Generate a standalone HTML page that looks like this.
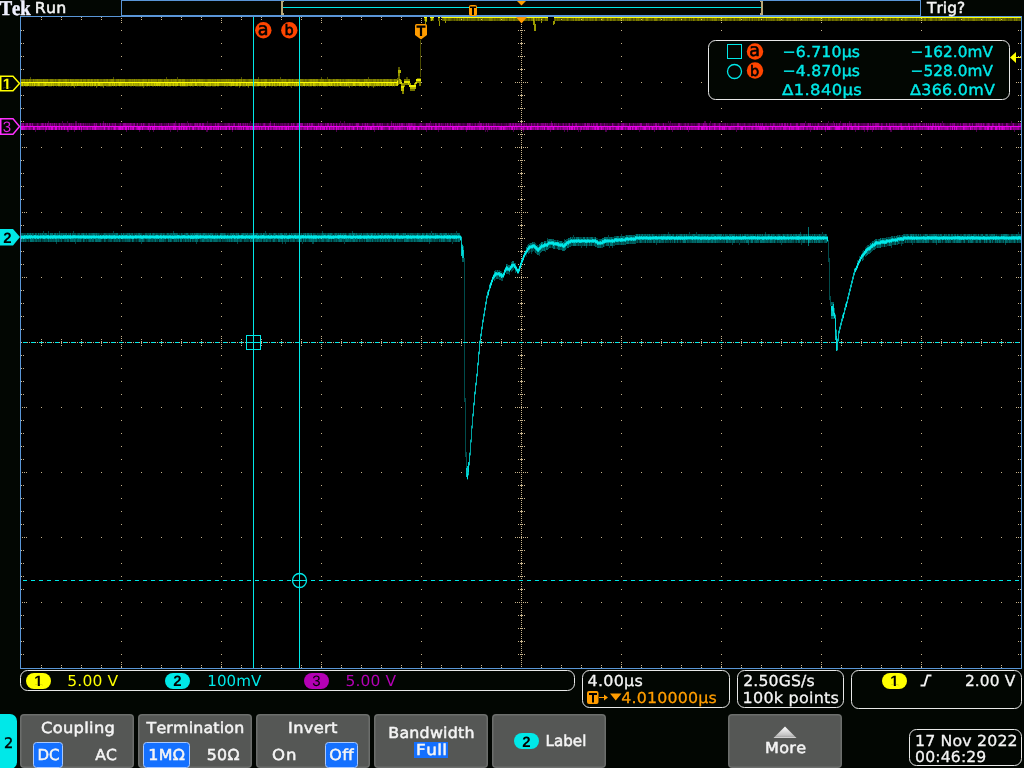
<!DOCTYPE html>
<html><head><meta charset="utf-8"><title>Tek oscilloscope</title>
<style>
html,body{margin:0;padding:0;background:#020602;width:1024px;height:768px;overflow:hidden}
svg{display:block;font-family:"DejaVu Sans","Liberation Sans",sans-serif;will-change:transform}
text{white-space:pre;font-kerning:none;text-rendering:geometricPrecision}
</style></head><body>
<svg width="1024" height="768" viewBox="0 0 1024 768">
<rect x="0" y="0" width="1024" height="768" fill="#020602" />
<rect x="21" y="17" width="1000" height="651" fill="#000" />
<g stroke="#c8b48c" stroke-width="1" shape-rendering="crispEdges" fill="none">
<path d="M41 82.5H1002" stroke-dasharray="1 19"/>
<path d="M41 147.5H1002" stroke-dasharray="1 19"/>
<path d="M41 212.5H1002" stroke-dasharray="1 19"/>
<path d="M41 277.5H1002" stroke-dasharray="1 19"/>
<path d="M41 407.5H1002" stroke-dasharray="1 19"/>
<path d="M41 472.5H1002" stroke-dasharray="1 19"/>
<path d="M41 537.5H1002" stroke-dasharray="1 19"/>
<path d="M41 602.5H1002" stroke-dasharray="1 19"/>
<path d="M121.5 30V668" stroke-dasharray="1 12"/>
<path d="M221.5 30V668" stroke-dasharray="1 12"/>
<path d="M321.5 30V668" stroke-dasharray="1 12"/>
<path d="M421.5 30V668" stroke-dasharray="1 12"/>
<path d="M621.5 30V668" stroke-dasharray="1 12"/>
<path d="M721.5 30V668" stroke-dasharray="1 12"/>
<path d="M821.5 30V668" stroke-dasharray="1 12"/>
<path d="M921.5 30V668" stroke-dasharray="1 12"/>
<path d="M521.5 18V668" stroke-dasharray="1 1"/>
<path d="M21 342.5H1021" stroke-dasharray="1 1"/>
</g>
<path fill="#c8b48c" shape-rendering="crispEdges" d="M41 17h1v1h-1zM41 19h1v1h-1zM41 667h1v1h-1zM41 665h1v1h-1zM61 17h1v1h-1zM61 19h1v1h-1zM61 667h1v1h-1zM61 665h1v1h-1zM81 17h1v1h-1zM81 19h1v1h-1zM81 667h1v1h-1zM81 665h1v1h-1zM101 17h1v1h-1zM101 19h1v1h-1zM101 667h1v1h-1zM101 665h1v1h-1zM121 18h1v1h-1zM121 20h1v1h-1zM121 22h1v1h-1zM121 666h1v1h-1zM121 664h1v1h-1zM121 662h1v1h-1zM141 17h1v1h-1zM141 19h1v1h-1zM141 667h1v1h-1zM141 665h1v1h-1zM161 17h1v1h-1zM161 19h1v1h-1zM161 667h1v1h-1zM161 665h1v1h-1zM181 17h1v1h-1zM181 19h1v1h-1zM181 667h1v1h-1zM181 665h1v1h-1zM201 17h1v1h-1zM201 19h1v1h-1zM201 667h1v1h-1zM201 665h1v1h-1zM221 18h1v1h-1zM221 20h1v1h-1zM221 22h1v1h-1zM221 666h1v1h-1zM221 664h1v1h-1zM221 662h1v1h-1zM241 17h1v1h-1zM241 19h1v1h-1zM241 667h1v1h-1zM241 665h1v1h-1zM261 17h1v1h-1zM261 19h1v1h-1zM261 667h1v1h-1zM261 665h1v1h-1zM281 17h1v1h-1zM281 19h1v1h-1zM281 667h1v1h-1zM281 665h1v1h-1zM301 17h1v1h-1zM301 19h1v1h-1zM301 667h1v1h-1zM301 665h1v1h-1zM321 18h1v1h-1zM321 20h1v1h-1zM321 22h1v1h-1zM321 666h1v1h-1zM321 664h1v1h-1zM321 662h1v1h-1zM341 17h1v1h-1zM341 19h1v1h-1zM341 667h1v1h-1zM341 665h1v1h-1zM361 17h1v1h-1zM361 19h1v1h-1zM361 667h1v1h-1zM361 665h1v1h-1zM381 17h1v1h-1zM381 19h1v1h-1zM381 667h1v1h-1zM381 665h1v1h-1zM401 17h1v1h-1zM401 19h1v1h-1zM401 667h1v1h-1zM401 665h1v1h-1zM421 18h1v1h-1zM421 20h1v1h-1zM421 22h1v1h-1zM421 666h1v1h-1zM421 664h1v1h-1zM421 662h1v1h-1zM441 17h1v1h-1zM441 19h1v1h-1zM441 667h1v1h-1zM441 665h1v1h-1zM461 17h1v1h-1zM461 19h1v1h-1zM461 667h1v1h-1zM461 665h1v1h-1zM481 17h1v1h-1zM481 19h1v1h-1zM481 667h1v1h-1zM481 665h1v1h-1zM501 17h1v1h-1zM501 19h1v1h-1zM501 667h1v1h-1zM501 665h1v1h-1zM541 17h1v1h-1zM541 19h1v1h-1zM541 667h1v1h-1zM541 665h1v1h-1zM561 17h1v1h-1zM561 19h1v1h-1zM561 667h1v1h-1zM561 665h1v1h-1zM581 17h1v1h-1zM581 19h1v1h-1zM581 667h1v1h-1zM581 665h1v1h-1zM601 17h1v1h-1zM601 19h1v1h-1zM601 667h1v1h-1zM601 665h1v1h-1zM621 18h1v1h-1zM621 20h1v1h-1zM621 22h1v1h-1zM621 666h1v1h-1zM621 664h1v1h-1zM621 662h1v1h-1zM641 17h1v1h-1zM641 19h1v1h-1zM641 667h1v1h-1zM641 665h1v1h-1zM661 17h1v1h-1zM661 19h1v1h-1zM661 667h1v1h-1zM661 665h1v1h-1zM681 17h1v1h-1zM681 19h1v1h-1zM681 667h1v1h-1zM681 665h1v1h-1zM701 17h1v1h-1zM701 19h1v1h-1zM701 667h1v1h-1zM701 665h1v1h-1zM721 18h1v1h-1zM721 20h1v1h-1zM721 22h1v1h-1zM721 666h1v1h-1zM721 664h1v1h-1zM721 662h1v1h-1zM741 17h1v1h-1zM741 19h1v1h-1zM741 667h1v1h-1zM741 665h1v1h-1zM761 17h1v1h-1zM761 19h1v1h-1zM761 667h1v1h-1zM761 665h1v1h-1zM781 17h1v1h-1zM781 19h1v1h-1zM781 667h1v1h-1zM781 665h1v1h-1zM801 17h1v1h-1zM801 19h1v1h-1zM801 667h1v1h-1zM801 665h1v1h-1zM821 18h1v1h-1zM821 20h1v1h-1zM821 22h1v1h-1zM821 666h1v1h-1zM821 664h1v1h-1zM821 662h1v1h-1zM841 17h1v1h-1zM841 19h1v1h-1zM841 667h1v1h-1zM841 665h1v1h-1zM861 17h1v1h-1zM861 19h1v1h-1zM861 667h1v1h-1zM861 665h1v1h-1zM881 17h1v1h-1zM881 19h1v1h-1zM881 667h1v1h-1zM881 665h1v1h-1zM901 17h1v1h-1zM901 19h1v1h-1zM901 667h1v1h-1zM901 665h1v1h-1zM921 18h1v1h-1zM921 20h1v1h-1zM921 22h1v1h-1zM921 666h1v1h-1zM921 664h1v1h-1zM921 662h1v1h-1zM941 17h1v1h-1zM941 19h1v1h-1zM941 667h1v1h-1zM941 665h1v1h-1zM961 17h1v1h-1zM961 19h1v1h-1zM961 667h1v1h-1zM961 665h1v1h-1zM981 17h1v1h-1zM981 19h1v1h-1zM981 667h1v1h-1zM981 665h1v1h-1zM1001 17h1v1h-1zM1001 19h1v1h-1zM1001 667h1v1h-1zM1001 665h1v1h-1zM21 30h1v1h-1zM23 30h1v1h-1zM1020 30h1v1h-1zM1018 30h1v1h-1zM21 43h1v1h-1zM23 43h1v1h-1zM1020 43h1v1h-1zM1018 43h1v1h-1zM21 56h1v1h-1zM23 56h1v1h-1zM1020 56h1v1h-1zM1018 56h1v1h-1zM21 69h1v1h-1zM23 69h1v1h-1zM1020 69h1v1h-1zM1018 69h1v1h-1zM22 82h1v1h-1zM24 82h1v1h-1zM26 82h1v1h-1zM1020 82h1v1h-1zM1018 82h1v1h-1zM1016 82h1v1h-1zM21 95h1v1h-1zM23 95h1v1h-1zM1020 95h1v1h-1zM1018 95h1v1h-1zM21 108h1v1h-1zM23 108h1v1h-1zM1020 108h1v1h-1zM1018 108h1v1h-1zM21 121h1v1h-1zM23 121h1v1h-1zM1020 121h1v1h-1zM1018 121h1v1h-1zM21 134h1v1h-1zM23 134h1v1h-1zM1020 134h1v1h-1zM1018 134h1v1h-1zM22 147h1v1h-1zM24 147h1v1h-1zM26 147h1v1h-1zM1020 147h1v1h-1zM1018 147h1v1h-1zM1016 147h1v1h-1zM21 160h1v1h-1zM23 160h1v1h-1zM1020 160h1v1h-1zM1018 160h1v1h-1zM21 173h1v1h-1zM23 173h1v1h-1zM1020 173h1v1h-1zM1018 173h1v1h-1zM21 186h1v1h-1zM23 186h1v1h-1zM1020 186h1v1h-1zM1018 186h1v1h-1zM21 199h1v1h-1zM23 199h1v1h-1zM1020 199h1v1h-1zM1018 199h1v1h-1zM22 212h1v1h-1zM24 212h1v1h-1zM26 212h1v1h-1zM1020 212h1v1h-1zM1018 212h1v1h-1zM1016 212h1v1h-1zM21 225h1v1h-1zM23 225h1v1h-1zM1020 225h1v1h-1zM1018 225h1v1h-1zM21 238h1v1h-1zM23 238h1v1h-1zM1020 238h1v1h-1zM1018 238h1v1h-1zM21 251h1v1h-1zM23 251h1v1h-1zM1020 251h1v1h-1zM1018 251h1v1h-1zM21 264h1v1h-1zM23 264h1v1h-1zM1020 264h1v1h-1zM1018 264h1v1h-1zM22 277h1v1h-1zM24 277h1v1h-1zM26 277h1v1h-1zM1020 277h1v1h-1zM1018 277h1v1h-1zM1016 277h1v1h-1zM21 290h1v1h-1zM23 290h1v1h-1zM1020 290h1v1h-1zM1018 290h1v1h-1zM21 303h1v1h-1zM23 303h1v1h-1zM1020 303h1v1h-1zM1018 303h1v1h-1zM21 316h1v1h-1zM23 316h1v1h-1zM1020 316h1v1h-1zM1018 316h1v1h-1zM21 329h1v1h-1zM23 329h1v1h-1zM1020 329h1v1h-1zM1018 329h1v1h-1zM21 355h1v1h-1zM23 355h1v1h-1zM1020 355h1v1h-1zM1018 355h1v1h-1zM21 368h1v1h-1zM23 368h1v1h-1zM1020 368h1v1h-1zM1018 368h1v1h-1zM21 381h1v1h-1zM23 381h1v1h-1zM1020 381h1v1h-1zM1018 381h1v1h-1zM21 394h1v1h-1zM23 394h1v1h-1zM1020 394h1v1h-1zM1018 394h1v1h-1zM22 407h1v1h-1zM24 407h1v1h-1zM26 407h1v1h-1zM1020 407h1v1h-1zM1018 407h1v1h-1zM1016 407h1v1h-1zM21 420h1v1h-1zM23 420h1v1h-1zM1020 420h1v1h-1zM1018 420h1v1h-1zM21 433h1v1h-1zM23 433h1v1h-1zM1020 433h1v1h-1zM1018 433h1v1h-1zM21 446h1v1h-1zM23 446h1v1h-1zM1020 446h1v1h-1zM1018 446h1v1h-1zM21 459h1v1h-1zM23 459h1v1h-1zM1020 459h1v1h-1zM1018 459h1v1h-1zM22 472h1v1h-1zM24 472h1v1h-1zM26 472h1v1h-1zM1020 472h1v1h-1zM1018 472h1v1h-1zM1016 472h1v1h-1zM21 485h1v1h-1zM23 485h1v1h-1zM1020 485h1v1h-1zM1018 485h1v1h-1zM21 498h1v1h-1zM23 498h1v1h-1zM1020 498h1v1h-1zM1018 498h1v1h-1zM21 511h1v1h-1zM23 511h1v1h-1zM1020 511h1v1h-1zM1018 511h1v1h-1zM21 524h1v1h-1zM23 524h1v1h-1zM1020 524h1v1h-1zM1018 524h1v1h-1zM22 537h1v1h-1zM24 537h1v1h-1zM26 537h1v1h-1zM1020 537h1v1h-1zM1018 537h1v1h-1zM1016 537h1v1h-1zM21 550h1v1h-1zM23 550h1v1h-1zM1020 550h1v1h-1zM1018 550h1v1h-1zM21 563h1v1h-1zM23 563h1v1h-1zM1020 563h1v1h-1zM1018 563h1v1h-1zM21 576h1v1h-1zM23 576h1v1h-1zM1020 576h1v1h-1zM1018 576h1v1h-1zM21 589h1v1h-1zM23 589h1v1h-1zM1020 589h1v1h-1zM1018 589h1v1h-1zM22 602h1v1h-1zM24 602h1v1h-1zM26 602h1v1h-1zM1020 602h1v1h-1zM1018 602h1v1h-1zM1016 602h1v1h-1zM21 615h1v1h-1zM23 615h1v1h-1zM1020 615h1v1h-1zM1018 615h1v1h-1zM21 628h1v1h-1zM23 628h1v1h-1zM1020 628h1v1h-1zM1018 628h1v1h-1zM21 641h1v1h-1zM23 641h1v1h-1zM1020 641h1v1h-1zM1018 641h1v1h-1zM21 654h1v1h-1zM23 654h1v1h-1zM1020 654h1v1h-1zM1018 654h1v1h-1zM518 30h1v1h-1zM520 30h1v1h-1zM521 30h1v1h-1zM522 30h1v1h-1zM524 30h1v1h-1zM518 43h1v1h-1zM520 43h1v1h-1zM521 43h1v1h-1zM522 43h1v1h-1zM524 43h1v1h-1zM518 56h1v1h-1zM520 56h1v1h-1zM521 56h1v1h-1zM522 56h1v1h-1zM524 56h1v1h-1zM518 69h1v1h-1zM520 69h1v1h-1zM521 69h1v1h-1zM522 69h1v1h-1zM524 69h1v1h-1zM515 82h1v1h-1zM517 82h1v1h-1zM519 82h1v1h-1zM523 82h1v1h-1zM525 82h1v1h-1zM527 82h1v1h-1zM521 82h1v1h-1zM518 95h1v1h-1zM520 95h1v1h-1zM521 95h1v1h-1zM522 95h1v1h-1zM524 95h1v1h-1zM518 108h1v1h-1zM520 108h1v1h-1zM521 108h1v1h-1zM522 108h1v1h-1zM524 108h1v1h-1zM518 121h1v1h-1zM520 121h1v1h-1zM521 121h1v1h-1zM522 121h1v1h-1zM524 121h1v1h-1zM518 134h1v1h-1zM520 134h1v1h-1zM521 134h1v1h-1zM522 134h1v1h-1zM524 134h1v1h-1zM515 147h1v1h-1zM517 147h1v1h-1zM519 147h1v1h-1zM523 147h1v1h-1zM525 147h1v1h-1zM527 147h1v1h-1zM521 147h1v1h-1zM518 160h1v1h-1zM520 160h1v1h-1zM521 160h1v1h-1zM522 160h1v1h-1zM524 160h1v1h-1zM518 173h1v1h-1zM520 173h1v1h-1zM521 173h1v1h-1zM522 173h1v1h-1zM524 173h1v1h-1zM518 186h1v1h-1zM520 186h1v1h-1zM521 186h1v1h-1zM522 186h1v1h-1zM524 186h1v1h-1zM518 199h1v1h-1zM520 199h1v1h-1zM521 199h1v1h-1zM522 199h1v1h-1zM524 199h1v1h-1zM515 212h1v1h-1zM517 212h1v1h-1zM519 212h1v1h-1zM523 212h1v1h-1zM525 212h1v1h-1zM527 212h1v1h-1zM521 212h1v1h-1zM518 225h1v1h-1zM520 225h1v1h-1zM521 225h1v1h-1zM522 225h1v1h-1zM524 225h1v1h-1zM518 238h1v1h-1zM520 238h1v1h-1zM521 238h1v1h-1zM522 238h1v1h-1zM524 238h1v1h-1zM518 251h1v1h-1zM520 251h1v1h-1zM521 251h1v1h-1zM522 251h1v1h-1zM524 251h1v1h-1zM518 264h1v1h-1zM520 264h1v1h-1zM521 264h1v1h-1zM522 264h1v1h-1zM524 264h1v1h-1zM515 277h1v1h-1zM517 277h1v1h-1zM519 277h1v1h-1zM523 277h1v1h-1zM525 277h1v1h-1zM527 277h1v1h-1zM521 277h1v1h-1zM518 290h1v1h-1zM520 290h1v1h-1zM521 290h1v1h-1zM522 290h1v1h-1zM524 290h1v1h-1zM518 303h1v1h-1zM520 303h1v1h-1zM521 303h1v1h-1zM522 303h1v1h-1zM524 303h1v1h-1zM518 316h1v1h-1zM520 316h1v1h-1zM521 316h1v1h-1zM522 316h1v1h-1zM524 316h1v1h-1zM518 329h1v1h-1zM520 329h1v1h-1zM521 329h1v1h-1zM522 329h1v1h-1zM524 329h1v1h-1zM518 355h1v1h-1zM520 355h1v1h-1zM521 355h1v1h-1zM522 355h1v1h-1zM524 355h1v1h-1zM518 368h1v1h-1zM520 368h1v1h-1zM521 368h1v1h-1zM522 368h1v1h-1zM524 368h1v1h-1zM518 381h1v1h-1zM520 381h1v1h-1zM521 381h1v1h-1zM522 381h1v1h-1zM524 381h1v1h-1zM518 394h1v1h-1zM520 394h1v1h-1zM521 394h1v1h-1zM522 394h1v1h-1zM524 394h1v1h-1zM515 407h1v1h-1zM517 407h1v1h-1zM519 407h1v1h-1zM523 407h1v1h-1zM525 407h1v1h-1zM527 407h1v1h-1zM521 407h1v1h-1zM518 420h1v1h-1zM520 420h1v1h-1zM521 420h1v1h-1zM522 420h1v1h-1zM524 420h1v1h-1zM518 433h1v1h-1zM520 433h1v1h-1zM521 433h1v1h-1zM522 433h1v1h-1zM524 433h1v1h-1zM518 446h1v1h-1zM520 446h1v1h-1zM521 446h1v1h-1zM522 446h1v1h-1zM524 446h1v1h-1zM518 459h1v1h-1zM520 459h1v1h-1zM521 459h1v1h-1zM522 459h1v1h-1zM524 459h1v1h-1zM515 472h1v1h-1zM517 472h1v1h-1zM519 472h1v1h-1zM523 472h1v1h-1zM525 472h1v1h-1zM527 472h1v1h-1zM521 472h1v1h-1zM518 485h1v1h-1zM520 485h1v1h-1zM521 485h1v1h-1zM522 485h1v1h-1zM524 485h1v1h-1zM518 498h1v1h-1zM520 498h1v1h-1zM521 498h1v1h-1zM522 498h1v1h-1zM524 498h1v1h-1zM518 511h1v1h-1zM520 511h1v1h-1zM521 511h1v1h-1zM522 511h1v1h-1zM524 511h1v1h-1zM518 524h1v1h-1zM520 524h1v1h-1zM521 524h1v1h-1zM522 524h1v1h-1zM524 524h1v1h-1zM515 537h1v1h-1zM517 537h1v1h-1zM519 537h1v1h-1zM523 537h1v1h-1zM525 537h1v1h-1zM527 537h1v1h-1zM521 537h1v1h-1zM518 550h1v1h-1zM520 550h1v1h-1zM521 550h1v1h-1zM522 550h1v1h-1zM524 550h1v1h-1zM518 563h1v1h-1zM520 563h1v1h-1zM521 563h1v1h-1zM522 563h1v1h-1zM524 563h1v1h-1zM518 576h1v1h-1zM520 576h1v1h-1zM521 576h1v1h-1zM522 576h1v1h-1zM524 576h1v1h-1zM518 589h1v1h-1zM520 589h1v1h-1zM521 589h1v1h-1zM522 589h1v1h-1zM524 589h1v1h-1zM515 602h1v1h-1zM517 602h1v1h-1zM519 602h1v1h-1zM523 602h1v1h-1zM525 602h1v1h-1zM527 602h1v1h-1zM521 602h1v1h-1zM518 615h1v1h-1zM520 615h1v1h-1zM521 615h1v1h-1zM522 615h1v1h-1zM524 615h1v1h-1zM518 628h1v1h-1zM520 628h1v1h-1zM521 628h1v1h-1zM522 628h1v1h-1zM524 628h1v1h-1zM518 641h1v1h-1zM520 641h1v1h-1zM521 641h1v1h-1zM522 641h1v1h-1zM524 641h1v1h-1zM518 654h1v1h-1zM520 654h1v1h-1zM521 654h1v1h-1zM522 654h1v1h-1zM524 654h1v1h-1zM41 339h1v1h-1zM41 341h1v1h-1zM41 342h1v1h-1zM41 343h1v1h-1zM41 345h1v1h-1zM61 339h1v1h-1zM61 341h1v1h-1zM61 342h1v1h-1zM61 343h1v1h-1zM61 345h1v1h-1zM81 339h1v1h-1zM81 341h1v1h-1zM81 342h1v1h-1zM81 343h1v1h-1zM81 345h1v1h-1zM101 339h1v1h-1zM101 341h1v1h-1zM101 342h1v1h-1zM101 343h1v1h-1zM101 345h1v1h-1zM121 336h1v1h-1zM121 338h1v1h-1zM121 340h1v1h-1zM121 344h1v1h-1zM121 346h1v1h-1zM121 348h1v1h-1zM121 342h1v1h-1zM141 339h1v1h-1zM141 341h1v1h-1zM141 342h1v1h-1zM141 343h1v1h-1zM141 345h1v1h-1zM161 339h1v1h-1zM161 341h1v1h-1zM161 342h1v1h-1zM161 343h1v1h-1zM161 345h1v1h-1zM181 339h1v1h-1zM181 341h1v1h-1zM181 342h1v1h-1zM181 343h1v1h-1zM181 345h1v1h-1zM201 339h1v1h-1zM201 341h1v1h-1zM201 342h1v1h-1zM201 343h1v1h-1zM201 345h1v1h-1zM221 336h1v1h-1zM221 338h1v1h-1zM221 340h1v1h-1zM221 344h1v1h-1zM221 346h1v1h-1zM221 348h1v1h-1zM221 342h1v1h-1zM241 339h1v1h-1zM241 341h1v1h-1zM241 342h1v1h-1zM241 343h1v1h-1zM241 345h1v1h-1zM261 339h1v1h-1zM261 341h1v1h-1zM261 342h1v1h-1zM261 343h1v1h-1zM261 345h1v1h-1zM281 339h1v1h-1zM281 341h1v1h-1zM281 342h1v1h-1zM281 343h1v1h-1zM281 345h1v1h-1zM301 339h1v1h-1zM301 341h1v1h-1zM301 342h1v1h-1zM301 343h1v1h-1zM301 345h1v1h-1zM321 336h1v1h-1zM321 338h1v1h-1zM321 340h1v1h-1zM321 344h1v1h-1zM321 346h1v1h-1zM321 348h1v1h-1zM321 342h1v1h-1zM341 339h1v1h-1zM341 341h1v1h-1zM341 342h1v1h-1zM341 343h1v1h-1zM341 345h1v1h-1zM361 339h1v1h-1zM361 341h1v1h-1zM361 342h1v1h-1zM361 343h1v1h-1zM361 345h1v1h-1zM381 339h1v1h-1zM381 341h1v1h-1zM381 342h1v1h-1zM381 343h1v1h-1zM381 345h1v1h-1zM401 339h1v1h-1zM401 341h1v1h-1zM401 342h1v1h-1zM401 343h1v1h-1zM401 345h1v1h-1zM421 336h1v1h-1zM421 338h1v1h-1zM421 340h1v1h-1zM421 344h1v1h-1zM421 346h1v1h-1zM421 348h1v1h-1zM421 342h1v1h-1zM441 339h1v1h-1zM441 341h1v1h-1zM441 342h1v1h-1zM441 343h1v1h-1zM441 345h1v1h-1zM461 339h1v1h-1zM461 341h1v1h-1zM461 342h1v1h-1zM461 343h1v1h-1zM461 345h1v1h-1zM481 339h1v1h-1zM481 341h1v1h-1zM481 342h1v1h-1zM481 343h1v1h-1zM481 345h1v1h-1zM501 339h1v1h-1zM501 341h1v1h-1zM501 342h1v1h-1zM501 343h1v1h-1zM501 345h1v1h-1zM541 339h1v1h-1zM541 341h1v1h-1zM541 342h1v1h-1zM541 343h1v1h-1zM541 345h1v1h-1zM561 339h1v1h-1zM561 341h1v1h-1zM561 342h1v1h-1zM561 343h1v1h-1zM561 345h1v1h-1zM581 339h1v1h-1zM581 341h1v1h-1zM581 342h1v1h-1zM581 343h1v1h-1zM581 345h1v1h-1zM601 339h1v1h-1zM601 341h1v1h-1zM601 342h1v1h-1zM601 343h1v1h-1zM601 345h1v1h-1zM621 336h1v1h-1zM621 338h1v1h-1zM621 340h1v1h-1zM621 344h1v1h-1zM621 346h1v1h-1zM621 348h1v1h-1zM621 342h1v1h-1zM641 339h1v1h-1zM641 341h1v1h-1zM641 342h1v1h-1zM641 343h1v1h-1zM641 345h1v1h-1zM661 339h1v1h-1zM661 341h1v1h-1zM661 342h1v1h-1zM661 343h1v1h-1zM661 345h1v1h-1zM681 339h1v1h-1zM681 341h1v1h-1zM681 342h1v1h-1zM681 343h1v1h-1zM681 345h1v1h-1zM701 339h1v1h-1zM701 341h1v1h-1zM701 342h1v1h-1zM701 343h1v1h-1zM701 345h1v1h-1zM721 336h1v1h-1zM721 338h1v1h-1zM721 340h1v1h-1zM721 344h1v1h-1zM721 346h1v1h-1zM721 348h1v1h-1zM721 342h1v1h-1zM741 339h1v1h-1zM741 341h1v1h-1zM741 342h1v1h-1zM741 343h1v1h-1zM741 345h1v1h-1zM761 339h1v1h-1zM761 341h1v1h-1zM761 342h1v1h-1zM761 343h1v1h-1zM761 345h1v1h-1zM781 339h1v1h-1zM781 341h1v1h-1zM781 342h1v1h-1zM781 343h1v1h-1zM781 345h1v1h-1zM801 339h1v1h-1zM801 341h1v1h-1zM801 342h1v1h-1zM801 343h1v1h-1zM801 345h1v1h-1zM821 336h1v1h-1zM821 338h1v1h-1zM821 340h1v1h-1zM821 344h1v1h-1zM821 346h1v1h-1zM821 348h1v1h-1zM821 342h1v1h-1zM841 339h1v1h-1zM841 341h1v1h-1zM841 342h1v1h-1zM841 343h1v1h-1zM841 345h1v1h-1zM861 339h1v1h-1zM861 341h1v1h-1zM861 342h1v1h-1zM861 343h1v1h-1zM861 345h1v1h-1zM881 339h1v1h-1zM881 341h1v1h-1zM881 342h1v1h-1zM881 343h1v1h-1zM881 345h1v1h-1zM901 339h1v1h-1zM901 341h1v1h-1zM901 342h1v1h-1zM901 343h1v1h-1zM901 345h1v1h-1zM921 336h1v1h-1zM921 338h1v1h-1zM921 340h1v1h-1zM921 344h1v1h-1zM921 346h1v1h-1zM921 348h1v1h-1zM921 342h1v1h-1zM941 339h1v1h-1zM941 341h1v1h-1zM941 342h1v1h-1zM941 343h1v1h-1zM941 345h1v1h-1zM961 339h1v1h-1zM961 341h1v1h-1zM961 342h1v1h-1zM961 343h1v1h-1zM961 345h1v1h-1zM981 339h1v1h-1zM981 341h1v1h-1zM981 342h1v1h-1zM981 343h1v1h-1zM981 345h1v1h-1zM1001 339h1v1h-1zM1001 341h1v1h-1zM1001 342h1v1h-1zM1001 343h1v1h-1zM1001 345h1v1h-1z"/>
<g stroke="#f000f0" stroke-width="1" shape-rendering="crispEdges" fill="none">
<path opacity="0.25" d="M24.5 123V126M28.5 123V126M34.5 123V126M35.5 123V126M39.5 123V126M57.5 123V126M74.5 123V126M77.5 123V126M90.5 123V126M97.5 123V126M98.5 123V126M99.5 123V126M101.5 123V126M108.5 123V126M116.5 123V126M117.5 123V126M135.5 123V126M138.5 123V126M146.5 123V126M147.5 123V126M153.5 123V126M157.5 123V126M158.5 123V126M163.5 123V126M177.5 123V126M180.5 123V126M193.5 123V126M212.5 123V126M223.5 123V126M235.5 123V126M241.5 123V126M248.5 123V126M250.5 123V126M251.5 123V126M261.5 123V126M275.5 123V126M277.5 123V126M279.5 123V126M289.5 123V126M290.5 123V126M295.5 123V126M303.5 123V126M315.5 123V126M324.5 123V126M332.5 123V126M335.5 123V126M338.5 123V126M340.5 123V126M353.5 123V126M360.5 123V126M361.5 123V126M375.5 123V126M383.5 123V126M385.5 123V126M389.5 123V126M390.5 123V126M405.5 123V126M416.5 123V126M417.5 123V126M424.5 123V126M434.5 123V126M437.5 123V126M444.5 123V126M451.5 123V126M454.5 123V126M461.5 123V126M465.5 123V126M466.5 123V126M473.5 123V126M476.5 123V126M492.5 123V126M496.5 123V126M500.5 123V126M502.5 123V126M503.5 123V126M507.5 123V126M522.5 123V126M527.5 123V126M553.5 123V126M557.5 123V126M561.5 123V126M564.5 123V126M567.5 123V126M570.5 123V126M571.5 123V126M581.5 123V126M586.5 123V126M590.5 123V126M592.5 123V126M598.5 123V126M599.5 123V126M608.5 123V126M610.5 123V126M611.5 123V126M615.5 123V126M616.5 123V126M620.5 123V126M628.5 123V126M642.5 123V126M652.5 123V126M660.5 123V126M661.5 123V126M664.5 123V126M667.5 123V126M668.5 123V126M682.5 123V126M689.5 123V126M695.5 123V126M708.5 123V126M711.5 123V126M721.5 123V126M726.5 123V126M728.5 123V126M729.5 123V126M730.5 123V126M746.5 123V126M751.5 123V126M754.5 123V126M757.5 123V126M763.5 123V126M764.5 123V126M767.5 123V126M769.5 123V126M783.5 123V126M789.5 123V126M799.5 123V126M805.5 123V126M811.5 123V126M813.5 123V126M816.5 123V126M824.5 123V126M828.5 123V126M835.5 123V126M841.5 123V126M846.5 123V126M852.5 123V126M869.5 123V126M871.5 123V126M880.5 123V126M883.5 123V126M884.5 123V126M885.5 123V126M888.5 123V126M897.5 123V126M907.5 123V126M910.5 123V126M912.5 123V126M921.5 123V126M925.5 123V126M927.5 123V126M929.5 123V126M931.5 123V126M934.5 123V126M946.5 123V126M948.5 123V126M959.5 123V126M961.5 123V126M973.5 123V126M985.5 123V126M997.5 123V126M1004.5 123V126M1005.5 123V126M1010.5 123V126M1016.5 123V126M1017.5 123V126"/>
<path opacity="0.3" d="M33.5 123V126M35.5 130V132M36.5 123V126M40.5 123V126M44.5 123V126M45.5 130V132M46.5 123V126M48.5 121V123M62.5 123V126M62.5 121V123M67.5 123V126M67.5 121V123M67.5 130V132M68.5 130V132M74.5 130V132M75.5 121V123M76.5 121V123M81.5 130V132M84.5 123V126M86.5 123V126M88.5 123V126M91.5 123V126M92.5 123V126M103.5 121V123M106.5 123V126M110.5 123V126M118.5 123V126M121.5 123V126M126.5 130V132M139.5 130V132M142.5 123V126M145.5 123V126M149.5 130V132M150.5 123V126M153.5 130V132M155.5 123V126M156.5 123V126M162.5 123V126M165.5 123V126M167.5 123V126M169.5 123V126M170.5 130V132M175.5 121V123M177.5 130V132M187.5 121V123M201.5 123V126M204.5 123V126M205.5 123V126M206.5 130V132M207.5 121V123M207.5 130V132M208.5 123V126M213.5 123V126M214.5 123V126M216.5 123V126M222.5 123V126M230.5 123V126M232.5 123V126M232.5 130V132M236.5 123V126M237.5 123V126M250.5 121V123M252.5 123V126M259.5 123V126M262.5 123V126M266.5 123V126M267.5 123V126M270.5 121V123M271.5 123V126M272.5 123V126M273.5 123V126M283.5 123V126M286.5 123V126M308.5 123V126M316.5 123V126M317.5 123V126M329.5 123V126M336.5 130V132M337.5 123V126M340.5 121V123M344.5 121V123M346.5 123V126M348.5 123V126M351.5 123V126M354.5 123V126M359.5 123V126M363.5 123V126M370.5 123V126M371.5 123V126M374.5 130V132M384.5 123V126M386.5 123V126M391.5 121V123M394.5 123V126M396.5 123V126M418.5 123V126M422.5 123V126M423.5 123V126M425.5 123V126M426.5 130V132M430.5 121V123M432.5 123V126M438.5 130V132M440.5 123V126M446.5 123V126M449.5 123V126M453.5 123V126M457.5 123V126M462.5 123V126M464.5 123V126M466.5 130V132M471.5 123V126M479.5 121V123M482.5 123V126M484.5 123V126M485.5 130V132M487.5 123V126M487.5 130V132M497.5 123V126M499.5 123V126M504.5 123V126M505.5 123V126M513.5 130V132M523.5 130V132M525.5 123V126M528.5 123V126M530.5 123V126M536.5 123V126M539.5 123V126M548.5 123V126M550.5 130V132M551.5 121V123M559.5 123V126M560.5 123V126M564.5 130V132M567.5 130V132M573.5 123V126M574.5 123V126M577.5 123V126M578.5 130V132M579.5 123V126M580.5 123V126M580.5 130V132M583.5 123V126M602.5 123V126M603.5 123V126M605.5 123V126M605.5 130V132M606.5 130V132M609.5 123V126M614.5 123V126M627.5 123V126M630.5 123V126M631.5 123V126M632.5 123V126M634.5 123V126M636.5 123V126M639.5 130V132M643.5 123V126M644.5 123V126M645.5 123V126M650.5 123V126M654.5 130V132M657.5 123V126M659.5 123V126M662.5 123V126M666.5 123V126M668.5 121V123M670.5 121V123M671.5 123V126M672.5 130V132M673.5 123V126M676.5 123V126M677.5 123V126M683.5 123V126M686.5 123V126M688.5 130V132M690.5 123V126M693.5 123V126M696.5 123V126M700.5 123V126M704.5 121V123M705.5 121V123M707.5 123V126M710.5 123V126M710.5 121V123M716.5 123V126M732.5 123V126M735.5 123V126M736.5 123V126M736.5 130V132M741.5 123V126M747.5 123V126M759.5 123V126M768.5 123V126M776.5 123V126M778.5 123V126M786.5 123V126M788.5 123V126M792.5 123V126M794.5 123V126M798.5 123V126M805.5 121V123M806.5 123V126M810.5 130V132M814.5 123V126M820.5 123V126M821.5 123V126M822.5 123V126M825.5 130V132M828.5 121V123M829.5 123V126M833.5 121V123M840.5 123V126M840.5 121V123M849.5 121V123M855.5 130V132M857.5 123V126M860.5 123V126M864.5 130V132M867.5 130V132M872.5 130V132M887.5 123V126M890.5 130V132M891.5 130V132M894.5 123V126M902.5 123V126M903.5 123V126M904.5 123V126M906.5 123V126M915.5 123V126M939.5 123V126M942.5 123V126M942.5 121V123M945.5 123V126M947.5 123V126M949.5 123V126M955.5 123V126M956.5 123V126M962.5 123V126M971.5 123V126M974.5 123V126M976.5 130V132M990.5 123V126M991.5 123V126M994.5 123V126M1000.5 123V126M1003.5 123V126M1009.5 123V126M1011.5 123V126M1011.5 121V123M1014.5 123V126M1014.5 130V132M1015.5 123V126"/>
<path opacity="0.35" d="M25.5 123V126M31.5 123V126M38.5 123V126M53.5 123V126M55.5 123V126M58.5 123V126M60.5 123V126M61.5 123V126M66.5 123V126M72.5 123V126M79.5 123V126M82.5 123V126M87.5 123V126M93.5 123V126M111.5 123V126M119.5 123V126M122.5 123V126M136.5 123V126M139.5 123V126M140.5 123V126M160.5 123V126M164.5 123V126M176.5 123V126M187.5 123V126M189.5 123V126M192.5 123V126M198.5 123V126M206.5 123V126M209.5 123V126M220.5 123V126M221.5 123V126M224.5 123V126M226.5 123V126M244.5 123V126M246.5 123V126M249.5 123V126M268.5 123V126M276.5 123V126M278.5 123V126M280.5 123V126M281.5 123V126M287.5 123V126M292.5 123V126M296.5 123V126M304.5 123V126M306.5 123V126M313.5 123V126M314.5 123V126M319.5 123V126M323.5 123V126M326.5 123V126M334.5 123V126M343.5 123V126M345.5 123V126M355.5 123V126M366.5 123V126M368.5 123V126M369.5 123V126M374.5 123V126M376.5 123V126M378.5 123V126M381.5 123V126M388.5 123V126M392.5 123V126M398.5 123V126M442.5 123V126M443.5 123V126M448.5 123V126M455.5 123V126M460.5 123V126M463.5 123V126M474.5 123V126M485.5 123V126M489.5 123V126M490.5 123V126M491.5 123V126M498.5 123V126M508.5 123V126M511.5 123V126M514.5 123V126M520.5 123V126M532.5 123V126M533.5 123V126M535.5 123V126M540.5 123V126M562.5 123V126M565.5 123V126M578.5 123V126M582.5 123V126M595.5 123V126M606.5 123V126M607.5 123V126M617.5 123V126M619.5 123V126M635.5 123V126M638.5 123V126M649.5 123V126M651.5 123V126M654.5 123V126M665.5 123V126M669.5 123V126M670.5 123V126M674.5 123V126M675.5 123V126M681.5 123V126M692.5 123V126M694.5 123V126M701.5 123V126M702.5 123V126M717.5 123V126M722.5 123V126M723.5 123V126M724.5 123V126M734.5 123V126M739.5 123V126M742.5 123V126M743.5 123V126M745.5 123V126M748.5 123V126M750.5 123V126M761.5 123V126M771.5 123V126M772.5 123V126M775.5 123V126M780.5 123V126M793.5 123V126M795.5 123V126M807.5 123V126M819.5 123V126M825.5 123V126M830.5 123V126M837.5 123V126M853.5 123V126M856.5 123V126M861.5 123V126M862.5 123V126M865.5 123V126M866.5 123V126M879.5 123V126M890.5 123V126M898.5 123V126M911.5 123V126M914.5 123V126M917.5 123V126M918.5 123V126M922.5 123V126M936.5 123V126M944.5 123V126M951.5 123V126M958.5 123V126M967.5 123V126M968.5 123V126M982.5 123V126M995.5 123V126M1001.5 123V126M1008.5 123V126"/>
<path opacity="0.4" d="M49.5 123V126M51.5 123V126M64.5 123V126M65.5 123V126M68.5 123V126M70.5 123V126M73.5 123V126M81.5 123V126M85.5 123V126M89.5 123V126M95.5 123V126M102.5 123V126M104.5 123V126M113.5 123V126M114.5 123V126M132.5 123V126M144.5 123V126M151.5 123V126M152.5 123V126M159.5 123V126M166.5 123V126M170.5 123V126M171.5 123V126M172.5 123V126M178.5 123V126M185.5 123V126M186.5 123V126M191.5 123V126M207.5 123V126M210.5 123V126M211.5 123V126M219.5 123V126M225.5 123V126M227.5 123V126M231.5 123V126M239.5 123V126M242.5 123V126M254.5 123V126M255.5 123V126M257.5 123V126M260.5 123V126M265.5 123V126M282.5 123V126M284.5 123V126M285.5 123V126M294.5 123V126M299.5 123V126M305.5 123V126M310.5 123V126M322.5 123V126M341.5 123V126M344.5 123V126M347.5 123V126M350.5 123V126M352.5 123V126M364.5 123V126M400.5 123V126M403.5 123V126M404.5 123V126M407.5 123V126M413.5 123V126M415.5 123V126M419.5 123V126M430.5 123V126M431.5 123V126M433.5 123V126M456.5 123V126M459.5 123V126M472.5 123V126M477.5 123V126M494.5 123V126M495.5 123V126M501.5 123V126M506.5 123V126M517.5 123V126M523.5 123V126M529.5 123V126M538.5 123V126M544.5 123V126M546.5 123V126M549.5 123V126M550.5 123V126M555.5 123V126M556.5 123V126M566.5 123V126M568.5 123V126M594.5 123V126M601.5 123V126M613.5 123V126M624.5 123V126M625.5 123V126M626.5 123V126M637.5 123V126M639.5 123V126M647.5 123V126M653.5 123V126M672.5 123V126M680.5 123V126M684.5 123V126M687.5 123V126M691.5 123V126M697.5 123V126M712.5 123V126M713.5 123V126M718.5 123V126M720.5 123V126M727.5 123V126M731.5 123V126M733.5 123V126M740.5 123V126M749.5 123V126M752.5 123V126M753.5 123V126M765.5 123V126M766.5 123V126M777.5 123V126M791.5 123V126M812.5 123V126M815.5 123V126M817.5 123V126M823.5 123V126M826.5 123V126M831.5 123V126M832.5 123V126M833.5 123V126M838.5 123V126M842.5 123V126M848.5 123V126M859.5 123V126M863.5 123V126M864.5 123V126M874.5 123V126M882.5 123V126M891.5 123V126M892.5 123V126M895.5 123V126M896.5 123V126M899.5 123V126M905.5 123V126M920.5 123V126M923.5 123V126M937.5 123V126M941.5 123V126M957.5 123V126M970.5 123V126M975.5 123V126M984.5 123V126M986.5 123V126M996.5 123V126M1012.5 123V126M1019.5 123V126"/>
<path opacity="0.5" d="M21.5 123V126M22.5 123V126M26.5 123V126M27.5 127V130M29.5 123V126M31.5 127V130M32.5 127V130M35.5 127V130M36.5 127V130M37.5 123V126M41.5 123V126M43.5 123V126M44.5 127V130M47.5 127V130M48.5 123V126M52.5 123V126M56.5 123V126M57.5 127V130M60.5 127V130M63.5 123V126M71.5 123V126M75.5 123V126M76.5 123V126M78.5 123V126M80.5 127V130M82.5 127V130M83.5 123V126M91.5 127V130M106.5 127V130M107.5 123V126M110.5 127V130M112.5 123V126M112.5 127V130M120.5 123V126M126.5 123V126M127.5 123V126M127.5 127V130M128.5 123V126M129.5 123V126M129.5 127V130M131.5 123V126M133.5 123V126M134.5 127V130M135.5 127V130M148.5 123V126M149.5 123V126M151.5 127V130M161.5 123V126M173.5 123V126M175.5 123V126M182.5 123V126M183.5 123V126M184.5 123V126M188.5 127V130M190.5 123V126M190.5 127V130M191.5 127V130M194.5 123V126M196.5 123V126M196.5 127V130M206.5 127V130M212.5 127V130M217.5 123V126M219.5 127V130M227.5 127V130M228.5 123V126M229.5 123V126M231.5 127V130M233.5 123V126M233.5 127V130M234.5 127V130M236.5 127V130M242.5 127V130M243.5 123V126M244.5 127V130M245.5 123V126M247.5 123V126M256.5 123V126M258.5 123V126M260.5 127V130M263.5 123V126M266.5 127V130M269.5 123V126M269.5 127V130M272.5 127V130M288.5 123V126M293.5 127V130M302.5 127V130M312.5 127V130M320.5 123V126M325.5 123V126M325.5 127V130M328.5 127V130M330.5 123V126M335.5 127V130M339.5 123V126M342.5 123V126M343.5 127V130M346.5 127V130M349.5 123V126M350.5 127V130M355.5 127V130M356.5 127V130M358.5 127V130M362.5 123V126M362.5 127V130M363.5 127V130M372.5 123V126M377.5 123V126M377.5 127V130M379.5 123V126M379.5 127V130M380.5 123V126M382.5 123V126M385.5 127V130M386.5 127V130M387.5 123V126M387.5 127V130M392.5 127V130M395.5 123V126M397.5 123V126M403.5 127V130M405.5 127V130M406.5 123V126M406.5 127V130M410.5 123V126M412.5 123V126M414.5 123V126M416.5 127V130M420.5 123V126M420.5 127V130M421.5 123V126M427.5 123V126M427.5 127V130M428.5 123V126M430.5 127V130M433.5 127V130M436.5 123V126M438.5 123V126M441.5 123V126M441.5 127V130M445.5 123V126M451.5 127V130M452.5 123V126M458.5 123V126M464.5 127V130M468.5 123V126M470.5 123V126M475.5 123V126M478.5 123V126M479.5 123V126M483.5 123V126M484.5 127V130M485.5 127V130M487.5 127V130M490.5 127V130M492.5 127V130M493.5 123V126M495.5 127V130M497.5 127V130M508.5 127V130M509.5 123V126M510.5 127V130M512.5 123V126M513.5 127V130M515.5 127V130M516.5 123V126M518.5 123V126M518.5 127V130M519.5 123V126M519.5 127V130M524.5 123V126M525.5 127V130M526.5 123V126M534.5 123V126M534.5 127V130M539.5 127V130M541.5 123V126M542.5 123V126M543.5 123V126M545.5 127V130M546.5 127V130M547.5 123V126M554.5 123V126M555.5 127V130M556.5 127V130M558.5 123V126M559.5 127V130M561.5 127V130M563.5 123V126M568.5 127V130M575.5 123V126M578.5 127V130M579.5 127V130M582.5 127V130M584.5 123V126M588.5 123V126M589.5 123V126M589.5 127V130M591.5 123V126M600.5 123V126M604.5 123V126M604.5 127V130M611.5 127V130M614.5 127V130M618.5 123V126M621.5 123V126M622.5 123V126M624.5 127V130M626.5 127V130M631.5 127V130M633.5 123V126M639.5 127V130M648.5 123V126M650.5 127V130M657.5 127V130M658.5 123V126M666.5 127V130M667.5 127V130M670.5 127V130M679.5 127V130M681.5 127V130M683.5 127V130M685.5 123V126M688.5 123V126M688.5 127V130M700.5 127V130M704.5 123V126M705.5 123V126M706.5 123V126M708.5 127V130M709.5 123V126M715.5 123V126M725.5 123V126M727.5 127V130M735.5 127V130M736.5 127V130M739.5 127V130M743.5 127V130M744.5 123V126M744.5 127V130M746.5 127V130M750.5 127V130M754.5 127V130M755.5 123V126M760.5 123V126M769.5 127V130M770.5 123V126M774.5 123V126M774.5 127V130M779.5 123V126M781.5 123V126M782.5 127V130M800.5 123V126M801.5 123V126M802.5 123V126M803.5 123V126M804.5 127V130M805.5 127V130M808.5 127V130M809.5 123V126M812.5 127V130M823.5 127V130M826.5 127V130M827.5 123V126M832.5 127V130M833.5 127V130M844.5 123V126M844.5 127V130M846.5 127V130M849.5 127V130M850.5 123V126M854.5 123V126M860.5 127V130M865.5 127V130M867.5 123V126M869.5 127V130M870.5 123V126M872.5 123V126M873.5 123V126M874.5 127V130M877.5 127V130M879.5 127V130M881.5 123V126M886.5 127V130M891.5 127V130M892.5 127V130M893.5 123V126M899.5 127V130M900.5 123V126M909.5 123V126M910.5 127V130M912.5 127V130M913.5 123V126M918.5 127V130M923.5 127V130M924.5 123V126M928.5 123V126M930.5 123V126M937.5 127V130M938.5 123V126M943.5 123V126M949.5 127V130M950.5 123V126M951.5 127V130M952.5 123V126M953.5 123V126M953.5 127V130M960.5 123V126M964.5 123V126M965.5 123V126M966.5 123V126M969.5 127V130M973.5 127V130M977.5 123V126M977.5 127V130M978.5 127V130M979.5 123V126M980.5 123V126M982.5 127V130M983.5 127V130M987.5 123V126M989.5 123V126M989.5 127V130M993.5 123V126M993.5 127V130M994.5 127V130M1002.5 123V126M1007.5 123V126M1009.5 127V130M1012.5 127V130M1018.5 123V126M1019.5 127V130M1020.5 127V130"/>
<path opacity="0.6" d="M23.5 123V126M27.5 123V126M28.5 127V130M30.5 123V126M30.5 127V130M32.5 123V126M41.5 127V130M42.5 123V126M42.5 127V130M45.5 123V126M47.5 123V126M50.5 123V126M53.5 127V130M54.5 123V126M54.5 127V130M59.5 123V126M63.5 127V130M65.5 127V130M69.5 123V126M80.5 123V126M88.5 127V130M89.5 127V130M94.5 123V126M96.5 123V126M100.5 123V126M102.5 127V130M103.5 123V126M105.5 123V126M105.5 127V130M107.5 127V130M109.5 123V126M115.5 123V126M116.5 127V130M117.5 127V130M123.5 123V126M124.5 123V126M124.5 127V130M125.5 123V126M130.5 123V126M134.5 123V126M137.5 123V126M141.5 123V126M141.5 127V130M143.5 123V126M143.5 127V130M144.5 127V130M145.5 127V130M146.5 127V130M154.5 123V126M155.5 127V130M157.5 127V130M168.5 123V126M174.5 123V126M176.5 127V130M177.5 127V130M179.5 123V126M181.5 123V126M182.5 127V130M188.5 123V126M194.5 127V130M195.5 123V126M197.5 123V126M197.5 127V130M199.5 123V126M200.5 123V126M200.5 127V130M202.5 123V126M203.5 123V126M209.5 127V130M215.5 123V126M218.5 123V126M228.5 127V130M230.5 127V130M234.5 123V126M238.5 123V126M240.5 123V126M245.5 127V130M249.5 127V130M253.5 123V126M258.5 127V130M263.5 127V130M264.5 123V126M264.5 127V130M267.5 127V130M270.5 123V126M274.5 123V126M280.5 127V130M283.5 127V130M287.5 127V130M289.5 127V130M291.5 123V126M291.5 127V130M293.5 123V126M294.5 127V130M297.5 123V126M298.5 123V126M300.5 123V126M300.5 127V130M301.5 123V126M302.5 123V126M303.5 127V130M306.5 127V130M307.5 123V126M309.5 123V126M309.5 127V130M311.5 123V126M312.5 123V126M313.5 127V130M315.5 127V130M318.5 123V126M321.5 123V126M327.5 123V126M328.5 123V126M331.5 123V126M333.5 123V126M336.5 123V126M339.5 127V130M342.5 127V130M356.5 123V126M357.5 123V126M358.5 123V126M359.5 127V130M360.5 127V130M365.5 123V126M367.5 123V126M367.5 127V130M372.5 127V130M373.5 123V126M375.5 127V130M376.5 127V130M383.5 127V130M384.5 127V130M390.5 127V130M391.5 123V126M391.5 127V130M393.5 123V126M393.5 127V130M399.5 123V126M401.5 123V126M401.5 127V130M402.5 123V126M404.5 127V130M408.5 123V126M408.5 127V130M409.5 123V126M411.5 123V126M419.5 127V130M422.5 127V130M426.5 123V126M429.5 123V126M435.5 123V126M437.5 127V130M439.5 123V126M439.5 127V130M440.5 127V130M446.5 127V130M447.5 123V126M450.5 123V126M459.5 127V130M465.5 127V130M467.5 123V126M469.5 123V126M475.5 127V130M476.5 127V130M478.5 127V130M480.5 123V126M481.5 123V126M486.5 123V126M488.5 123V126M498.5 127V130M502.5 127V130M506.5 127V130M507.5 127V130M510.5 123V126M513.5 123V126M515.5 123V126M517.5 127V130M520.5 127V130M521.5 123V126M524.5 127V130M526.5 127V130M529.5 127V130M531.5 123V126M532.5 127V130M533.5 127V130M536.5 127V130M537.5 123V126M541.5 127V130M543.5 127V130M545.5 123V126M551.5 123V126M551.5 127V130M552.5 123V126M554.5 127V130M562.5 127V130M569.5 123V126M572.5 123V126M573.5 127V130M575.5 127V130M576.5 123V126M576.5 127V130M585.5 123V126M585.5 127V130M587.5 123V126M590.5 127V130M591.5 127V130M593.5 123V126M596.5 123V126M597.5 123V126M599.5 127V130M606.5 127V130M608.5 127V130M612.5 123V126M615.5 127V130M619.5 127V130M623.5 123V126M623.5 127V130M629.5 123V126M634.5 127V130M640.5 123V126M641.5 123V126M641.5 127V130M646.5 123V126M655.5 123V126M655.5 127V130M656.5 123V126M658.5 127V130M661.5 127V130M663.5 123V126M663.5 127V130M672.5 127V130M675.5 127V130M676.5 127V130M678.5 123V126M679.5 123V126M685.5 127V130M690.5 127V130M698.5 123V126M699.5 123V126M703.5 123V126M713.5 127V130M714.5 123V126M717.5 127V130M718.5 127V130M719.5 123V126M737.5 123V126M738.5 123V126M747.5 127V130M748.5 127V130M753.5 127V130M756.5 123V126M758.5 123V126M762.5 123V126M770.5 127V130M771.5 127V130M773.5 123V126M773.5 127V130M779.5 127V130M781.5 127V130M782.5 123V126M784.5 123V126M785.5 123V126M787.5 123V126M790.5 123V126M796.5 123V126M797.5 123V126M804.5 123V126M808.5 123V126M809.5 127V130M810.5 123V126M810.5 127V130M815.5 127V130M818.5 123V126M818.5 127V130M820.5 127V130M831.5 127V130M834.5 123V126M834.5 127V130M836.5 123V126M839.5 123V126M843.5 123V126M845.5 123V126M847.5 123V126M849.5 123V126M851.5 123V126M853.5 127V130M855.5 123V126M858.5 123V126M859.5 127V130M861.5 127V130M862.5 127V130M868.5 123V126M875.5 123V126M876.5 123V126M877.5 123V126M878.5 123V126M880.5 127V130M883.5 127V130M884.5 127V130M886.5 123V126M887.5 127V130M889.5 123V126M894.5 127V130M901.5 123V126M905.5 127V130M908.5 123V126M908.5 127V130M913.5 127V130M916.5 123V126M917.5 127V130M919.5 123V126M921.5 127V130M924.5 127V130M925.5 127V130M926.5 123V126M932.5 123V126M933.5 123V126M933.5 127V130M935.5 123V126M940.5 123V126M940.5 127V130M943.5 127V130M954.5 123V126M955.5 127V130M958.5 127V130M959.5 127V130M961.5 127V130M962.5 127V130M963.5 123V126M969.5 123V126M972.5 123V126M976.5 123V126M978.5 123V126M981.5 123V126M983.5 123V126M988.5 123V126M992.5 123V126M998.5 123V126M998.5 127V130M999.5 123V126M1005.5 127V130M1006.5 123V126M1013.5 123V126M1014.5 127V130M1015.5 127V130M1016.5 127V130M1020.5 123V126"/>
<path opacity="0.65" d="M25.5 127V130M26.5 127V130M40.5 127V130M43.5 127V130M50.5 127V130M58.5 127V130M62.5 127V130M66.5 127V130M68.5 127V130M69.5 127V130M72.5 127V130M77.5 127V130M78.5 127V130M84.5 127V130M85.5 127V130M90.5 127V130M97.5 127V130M99.5 127V130M100.5 127V130M101.5 127V130M103.5 127V130M111.5 127V130M149.5 127V130M160.5 127V130M164.5 127V130M168.5 127V130M171.5 127V130M172.5 127V130M180.5 127V130M195.5 127V130M199.5 127V130M203.5 127V130M204.5 127V130M221.5 127V130M237.5 127V130M240.5 127V130M255.5 127V130M257.5 127V130M262.5 127V130M271.5 127V130M277.5 127V130M278.5 127V130M298.5 127V130M301.5 127V130M308.5 127V130M310.5 127V130M319.5 127V130M321.5 127V130M330.5 127V130M332.5 127V130M334.5 127V130M337.5 127V130M351.5 127V130M354.5 127V130M369.5 127V130M388.5 127V130M398.5 127V130M402.5 127V130M411.5 127V130M412.5 127V130M417.5 127V130M424.5 127V130M432.5 127V130M434.5 127V130M445.5 127V130M448.5 127V130M450.5 127V130M456.5 127V130M458.5 127V130M463.5 127V130M468.5 127V130M470.5 127V130M477.5 127V130M481.5 127V130M493.5 127V130M494.5 127V130M509.5 127V130M522.5 127V130M540.5 127V130M558.5 127V130M560.5 127V130M564.5 127V130M565.5 127V130M566.5 127V130M593.5 127V130M596.5 127V130M600.5 127V130M612.5 127V130M613.5 127V130M627.5 127V130M637.5 127V130M646.5 127V130M647.5 127V130M648.5 127V130M651.5 127V130M654.5 127V130M662.5 127V130M682.5 127V130M684.5 127V130M693.5 127V130M694.5 127V130M696.5 127V130M705.5 127V130M712.5 127V130M716.5 127V130M725.5 127V130M731.5 127V130M732.5 127V130M733.5 127V130M734.5 127V130M737.5 127V130M738.5 127V130M749.5 127V130M755.5 127V130M758.5 127V130M765.5 127V130M766.5 127V130M776.5 127V130M777.5 127V130M778.5 127V130M787.5 127V130M788.5 127V130M790.5 127V130M794.5 127V130M795.5 127V130M801.5 127V130M802.5 127V130M806.5 127V130M811.5 127V130M813.5 127V130M824.5 127V130M830.5 127V130M841.5 127V130M843.5 127V130M845.5 127V130M850.5 127V130M854.5 127V130M855.5 127V130M856.5 127V130M864.5 127V130M871.5 127V130M872.5 127V130M876.5 127V130M878.5 127V130M882.5 127V130M885.5 127V130M888.5 127V130M895.5 127V130M897.5 127V130M900.5 127V130M904.5 127V130M916.5 127V130M919.5 127V130M920.5 127V130M926.5 127V130M929.5 127V130M934.5 127V130M942.5 127V130M944.5 127V130M948.5 127V130M957.5 127V130M960.5 127V130M967.5 127V130M968.5 127V130M971.5 127V130M975.5 127V130M981.5 127V130M986.5 127V130M1000.5 127V130M1013.5 127V130M1017.5 127V130"/>
<path opacity="0.7" d="M29.5 127V130M38.5 127V130M45.5 127V130M48.5 127V130M70.5 127V130M73.5 127V130M83.5 127V130M86.5 127V130M93.5 127V130M96.5 127V130M98.5 127V130M109.5 127V130M113.5 127V130M123.5 127V130M131.5 127V130M136.5 127V130M147.5 127V130M156.5 127V130M158.5 127V130M163.5 127V130M166.5 127V130M170.5 127V130M178.5 127V130M185.5 127V130M187.5 127V130M214.5 127V130M215.5 127V130M217.5 127V130M222.5 127V130M223.5 127V130M224.5 127V130M235.5 127V130M238.5 127V130M239.5 127V130M251.5 127V130M256.5 127V130M270.5 127V130M273.5 127V130M274.5 127V130M275.5 127V130M284.5 127V130M290.5 127V130M295.5 127V130M297.5 127V130M304.5 127V130M305.5 127V130M311.5 127V130M317.5 127V130M318.5 127V130M327.5 127V130M331.5 127V130M340.5 127V130M341.5 127V130M347.5 127V130M348.5 127V130M352.5 127V130M364.5 127V130M365.5 127V130M374.5 127V130M380.5 127V130M395.5 127V130M397.5 127V130M400.5 127V130M415.5 127V130M421.5 127V130M423.5 127V130M426.5 127V130M428.5 127V130M429.5 127V130M438.5 127V130M443.5 127V130M444.5 127V130M447.5 127V130M449.5 127V130M454.5 127V130M460.5 127V130M462.5 127V130M473.5 127V130M482.5 127V130M486.5 127V130M488.5 127V130M496.5 127V130M499.5 127V130M505.5 127V130M516.5 127V130M521.5 127V130M528.5 127V130M535.5 127V130M538.5 127V130M542.5 127V130M549.5 127V130M550.5 127V130M552.5 127V130M557.5 127V130M563.5 127V130M570.5 127V130M580.5 127V130M583.5 127V130M584.5 127V130M587.5 127V130M592.5 127V130M602.5 127V130M603.5 127V130M605.5 127V130M620.5 127V130M625.5 127V130M633.5 127V130M638.5 127V130M640.5 127V130M642.5 127V130M653.5 127V130M673.5 127V130M674.5 127V130M677.5 127V130M678.5 127V130M686.5 127V130M691.5 127V130M692.5 127V130M695.5 127V130M697.5 127V130M699.5 127V130M710.5 127V130M711.5 127V130M715.5 127V130M720.5 127V130M721.5 127V130M726.5 127V130M728.5 127V130M740.5 127V130M751.5 127V130M756.5 127V130M757.5 127V130M762.5 127V130M768.5 127V130M780.5 127V130M786.5 127V130M799.5 127V130M800.5 127V130M807.5 127V130M819.5 127V130M822.5 127V130M840.5 127V130M857.5 127V130M863.5 127V130M866.5 127V130M868.5 127V130M870.5 127V130M875.5 127V130M893.5 127V130M896.5 127V130M903.5 127V130M906.5 127V130M907.5 127V130M911.5 127V130M915.5 127V130M922.5 127V130M927.5 127V130M930.5 127V130M941.5 127V130M945.5 127V130M946.5 127V130M950.5 127V130M965.5 127V130M966.5 127V130M972.5 127V130M974.5 127V130M976.5 127V130M979.5 127V130M980.5 127V130M984.5 127V130M990.5 127V130M992.5 127V130M997.5 127V130M1006.5 127V130M1007.5 127V130M1008.5 127V130M1011.5 127V130M1018.5 127V130"/>
<path opacity="0.8" d="M23.5 127V130M24.5 127V130M34.5 127V130M37.5 127V130M39.5 127V130M46.5 127V130M49.5 127V130M59.5 127V130M74.5 127V130M87.5 127V130M92.5 127V130M94.5 127V130M108.5 127V130M115.5 127V130M118.5 127V130M121.5 127V130M130.5 127V130M132.5 127V130M137.5 127V130M140.5 127V130M153.5 127V130M159.5 127V130M161.5 127V130M167.5 127V130M169.5 127V130M174.5 127V130M184.5 127V130M189.5 127V130M192.5 127V130M198.5 127V130M201.5 127V130M207.5 127V130M210.5 127V130M211.5 127V130M213.5 127V130M216.5 127V130M225.5 127V130M241.5 127V130M246.5 127V130M247.5 127V130M248.5 127V130M250.5 127V130M254.5 127V130M259.5 127V130M261.5 127V130M276.5 127V130M279.5 127V130M281.5 127V130M282.5 127V130M285.5 127V130M292.5 127V130M296.5 127V130M314.5 127V130M322.5 127V130M323.5 127V130M333.5 127V130M338.5 127V130M344.5 127V130M349.5 127V130M368.5 127V130M373.5 127V130M382.5 127V130M394.5 127V130M396.5 127V130M399.5 127V130M410.5 127V130M425.5 127V130M435.5 127V130M436.5 127V130M455.5 127V130M461.5 127V130M466.5 127V130M467.5 127V130M469.5 127V130M471.5 127V130M472.5 127V130M474.5 127V130M479.5 127V130M480.5 127V130M489.5 127V130M491.5 127V130M500.5 127V130M504.5 127V130M511.5 127V130M514.5 127V130M523.5 127V130M531.5 127V130M537.5 127V130M547.5 127V130M548.5 127V130M567.5 127V130M577.5 127V130M581.5 127V130M586.5 127V130M588.5 127V130M594.5 127V130M607.5 127V130M609.5 127V130M610.5 127V130M616.5 127V130M617.5 127V130M629.5 127V130M643.5 127V130M659.5 127V130M668.5 127V130M671.5 127V130M689.5 127V130M703.5 127V130M704.5 127V130M707.5 127V130M723.5 127V130M729.5 127V130M730.5 127V130M745.5 127V130M752.5 127V130M759.5 127V130M760.5 127V130M767.5 127V130M775.5 127V130M783.5 127V130M784.5 127V130M785.5 127V130M791.5 127V130M792.5 127V130M793.5 127V130M796.5 127V130M797.5 127V130M803.5 127V130M816.5 127V130M821.5 127V130M828.5 127V130M835.5 127V130M847.5 127V130M851.5 127V130M867.5 127V130M873.5 127V130M889.5 127V130M898.5 127V130M902.5 127V130M914.5 127V130M931.5 127V130M935.5 127V130M936.5 127V130M939.5 127V130M947.5 127V130M964.5 127V130M985.5 127V130M1001.5 127V130M1003.5 127V130M1004.5 127V130"/>
<path opacity="0.9" d="M21.5 127V130M22.5 127V130M33.5 127V130M51.5 127V130M52.5 127V130M55.5 127V130M56.5 127V130M61.5 127V130M64.5 127V130M67.5 127V130M71.5 127V130M75.5 127V130M76.5 127V130M79.5 127V130M81.5 127V130M95.5 127V130M104.5 127V130M114.5 127V130M119.5 127V130M120.5 127V130M122.5 127V130M125.5 127V130M126.5 127V130M128.5 127V130M133.5 127V130M138.5 127V130M139.5 127V130M142.5 127V130M148.5 127V130M150.5 127V130M152.5 127V130M154.5 127V130M162.5 127V130M165.5 127V130M173.5 127V130M175.5 127V130M179.5 127V130M181.5 127V130M183.5 127V130M186.5 127V130M193.5 127V130M202.5 127V130M205.5 127V130M208.5 127V130M218.5 127V130M220.5 127V130M226.5 127V130M229.5 127V130M232.5 127V130M243.5 127V130M252.5 127V130M253.5 127V130M265.5 127V130M268.5 127V130M286.5 127V130M288.5 127V130M299.5 127V130M307.5 127V130M316.5 127V130M320.5 127V130M324.5 127V130M326.5 127V130M329.5 127V130M336.5 127V130M345.5 127V130M353.5 127V130M357.5 127V130M361.5 127V130M366.5 127V130M370.5 127V130M371.5 127V130M378.5 127V130M381.5 127V130M389.5 127V130M407.5 127V130M409.5 127V130M413.5 127V130M414.5 127V130M418.5 127V130M431.5 127V130M442.5 127V130M452.5 127V130M453.5 127V130M457.5 127V130M483.5 127V130M501.5 127V130M503.5 127V130M512.5 127V130M527.5 127V130M530.5 127V130M544.5 127V130M553.5 127V130M569.5 127V130M571.5 127V130M572.5 127V130M574.5 127V130M595.5 127V130M597.5 127V130M598.5 127V130M601.5 127V130M618.5 127V130M621.5 127V130M622.5 127V130M628.5 127V130M630.5 127V130M632.5 127V130M635.5 127V130M636.5 127V130M644.5 127V130M645.5 127V130M649.5 127V130M652.5 127V130M656.5 127V130M660.5 127V130M664.5 127V130M665.5 127V130M669.5 127V130M680.5 127V130M687.5 127V130M698.5 127V130M701.5 127V130M702.5 127V130M706.5 127V130M709.5 127V130M714.5 127V130M719.5 127V130M722.5 127V130M724.5 127V130M741.5 127V130M742.5 127V130M761.5 127V130M763.5 127V130M764.5 127V130M772.5 127V130M789.5 127V130M798.5 127V130M814.5 127V130M817.5 127V130M825.5 127V130M827.5 127V130M829.5 127V130M836.5 127V130M837.5 127V130M838.5 127V130M839.5 127V130M842.5 127V130M848.5 127V130M852.5 127V130M858.5 127V130M881.5 127V130M890.5 127V130M901.5 127V130M909.5 127V130M928.5 127V130M932.5 127V130M938.5 127V130M952.5 127V130M954.5 127V130M956.5 127V130M963.5 127V130M970.5 127V130M987.5 127V130M988.5 127V130M991.5 127V130M995.5 127V130M996.5 127V130M999.5 127V130M1002.5 127V130M1010.5 127V130"/>
<path opacity="1.0" d="M21.5 126V127M22.5 126V127M23.5 126V127M24.5 126V127M25.5 126V127M26.5 126V127M27.5 126V127M28.5 126V127M29.5 126V127M30.5 126V127M31.5 126V127M32.5 126V127M33.5 126V127M34.5 126V127M35.5 126V127M36.5 126V127M37.5 126V127M38.5 126V127M39.5 126V127M40.5 126V127M41.5 126V127M42.5 126V127M43.5 126V127M44.5 126V127M45.5 126V127M46.5 126V127M47.5 126V127M48.5 126V127M49.5 126V127M50.5 126V127M51.5 126V127M52.5 126V127M53.5 126V127M54.5 126V127M55.5 126V127M56.5 126V127M57.5 126V127M58.5 126V127M59.5 126V127M60.5 126V127M61.5 126V127M62.5 126V127M63.5 126V127M64.5 126V127M65.5 126V127M66.5 126V127M67.5 126V127M68.5 126V127M69.5 126V127M70.5 126V127M71.5 126V127M72.5 126V127M73.5 126V127M74.5 126V127M75.5 126V127M76.5 126V127M77.5 126V127M78.5 126V127M79.5 126V127M80.5 126V127M81.5 126V127M82.5 126V127M83.5 126V127M84.5 126V127M85.5 126V127M86.5 126V127M87.5 126V127M88.5 126V127M89.5 126V127M90.5 126V127M91.5 126V127M92.5 126V127M93.5 126V127M94.5 126V127M95.5 126V127M96.5 126V127M97.5 126V127M98.5 126V127M99.5 126V127M100.5 126V127M101.5 126V127M102.5 126V127M103.5 126V127M104.5 126V127M105.5 126V127M106.5 126V127M107.5 126V127M108.5 126V127M109.5 126V127M110.5 126V127M111.5 126V127M112.5 126V127M113.5 126V127M114.5 126V127M115.5 126V127M116.5 126V127M117.5 126V127M118.5 126V127M119.5 126V127M120.5 126V127M121.5 126V127M122.5 126V127M123.5 126V127M124.5 126V127M125.5 126V127M126.5 126V127M127.5 126V127M128.5 126V127M129.5 126V127M130.5 126V127M131.5 126V127M132.5 126V127M133.5 126V127M134.5 126V127M135.5 126V127M136.5 126V127M137.5 126V127M138.5 126V127M139.5 126V127M140.5 126V127M141.5 126V127M142.5 126V127M143.5 126V127M144.5 126V127M145.5 126V127M146.5 126V127M147.5 126V127M148.5 126V127M149.5 126V127M150.5 126V127M151.5 126V127M152.5 126V127M153.5 126V127M154.5 126V127M155.5 126V127M156.5 126V127M157.5 126V127M158.5 126V127M159.5 126V127M160.5 126V127M161.5 126V127M162.5 126V127M163.5 126V127M164.5 126V127M165.5 126V127M166.5 126V127M167.5 126V127M168.5 126V127M169.5 126V127M170.5 126V127M171.5 126V127M172.5 126V127M173.5 126V127M174.5 126V127M175.5 126V127M176.5 126V127M177.5 126V127M178.5 126V127M179.5 126V127M180.5 126V127M181.5 126V127M182.5 126V127M183.5 126V127M184.5 126V127M185.5 126V127M186.5 126V127M187.5 126V127M188.5 126V127M189.5 126V127M190.5 126V127M191.5 126V127M192.5 126V127M193.5 126V127M194.5 126V127M195.5 126V127M196.5 126V127M197.5 126V127M198.5 126V127M199.5 126V127M200.5 126V127M201.5 126V127M202.5 126V127M203.5 126V127M204.5 126V127M205.5 126V127M206.5 126V127M207.5 126V127M208.5 126V127M209.5 126V127M210.5 126V127M211.5 126V127M212.5 126V127M213.5 126V127M214.5 126V127M215.5 126V127M216.5 126V127M217.5 126V127M218.5 126V127M219.5 126V127M220.5 126V127M221.5 126V127M222.5 126V127M223.5 126V127M224.5 126V127M225.5 126V127M226.5 126V127M227.5 126V127M228.5 126V127M229.5 126V127M230.5 126V127M231.5 126V127M232.5 126V127M233.5 126V127M234.5 126V127M235.5 126V127M236.5 126V127M237.5 126V127M238.5 126V127M239.5 126V127M240.5 126V127M241.5 126V127M242.5 126V127M243.5 126V127M244.5 126V127M245.5 126V127M246.5 126V127M247.5 126V127M248.5 126V127M249.5 126V127M250.5 126V127M251.5 126V127M252.5 126V127M253.5 126V127M254.5 126V127M255.5 126V127M256.5 126V127M257.5 126V127M258.5 126V127M259.5 126V127M260.5 126V127M261.5 126V127M262.5 126V127M263.5 126V127M264.5 126V127M265.5 126V127M266.5 126V127M267.5 126V127M268.5 126V127M269.5 126V127M270.5 126V127M271.5 126V127M272.5 126V127M273.5 126V127M274.5 126V127M275.5 126V127M276.5 126V127M277.5 126V127M278.5 126V127M279.5 126V127M280.5 126V127M281.5 126V127M282.5 126V127M283.5 126V127M284.5 126V127M285.5 126V127M286.5 126V127M287.5 126V127M288.5 126V127M289.5 126V127M290.5 126V127M291.5 126V127M292.5 126V127M293.5 126V127M294.5 126V127M295.5 126V127M296.5 126V127M297.5 126V127M298.5 126V127M299.5 126V127M300.5 126V127M301.5 126V127M302.5 126V127M303.5 126V127M304.5 126V127M305.5 126V127M306.5 126V127M307.5 126V127M308.5 126V127M309.5 126V127M310.5 126V127M311.5 126V127M312.5 126V127M313.5 126V127M314.5 126V127M315.5 126V127M316.5 126V127M317.5 126V127M318.5 126V127M319.5 126V127M320.5 126V127M321.5 126V127M322.5 126V127M323.5 126V127M324.5 126V127M325.5 126V127M326.5 126V127M327.5 126V127M328.5 126V127M329.5 126V127M330.5 126V127M331.5 126V127M332.5 126V127M333.5 126V127M334.5 126V127M335.5 126V127M336.5 126V127M337.5 126V127M338.5 126V127M339.5 126V127M340.5 126V127M341.5 126V127M342.5 126V127M343.5 126V127M344.5 126V127M345.5 126V127M346.5 126V127M347.5 126V127M348.5 126V127M349.5 126V127M350.5 126V127M351.5 126V127M352.5 126V127M353.5 126V127M354.5 126V127M355.5 126V127M356.5 126V127M357.5 126V127M358.5 126V127M359.5 126V127M360.5 126V127M361.5 126V127M362.5 126V127M363.5 126V127M364.5 126V127M365.5 126V127M366.5 126V127M367.5 126V127M368.5 126V127M369.5 126V127M370.5 126V127M371.5 126V127M372.5 126V127M373.5 126V127M374.5 126V127M375.5 126V127M376.5 126V127M377.5 126V127M378.5 126V127M379.5 126V127M380.5 126V127M381.5 126V127M382.5 126V127M383.5 126V127M384.5 126V127M385.5 126V127M386.5 126V127M387.5 126V127M388.5 126V127M389.5 126V127M390.5 126V127M391.5 126V127M392.5 126V127M393.5 126V127M394.5 126V127M395.5 126V127M396.5 126V127M397.5 126V127M398.5 126V127M399.5 126V127M400.5 126V127M401.5 126V127M402.5 126V127M403.5 126V127M404.5 126V127M405.5 126V127M406.5 126V127M407.5 126V127M408.5 126V127M409.5 126V127M410.5 126V127M411.5 126V127M412.5 126V127M413.5 126V127M414.5 126V127M415.5 126V127M416.5 126V127M417.5 126V127M418.5 126V127M419.5 126V127M420.5 126V127M421.5 126V127M422.5 126V127M423.5 126V127M424.5 126V127M425.5 126V127M426.5 126V127M427.5 126V127M428.5 126V127M429.5 126V127M430.5 126V127M431.5 126V127M432.5 126V127M433.5 126V127M434.5 126V127M435.5 126V127M436.5 126V127M437.5 126V127M438.5 126V127M439.5 126V127M440.5 126V127M441.5 126V127M442.5 126V127M443.5 126V127M444.5 126V127M445.5 126V127M446.5 126V127M447.5 126V127M448.5 126V127M449.5 126V127M450.5 126V127M451.5 126V127M452.5 126V127M453.5 126V127M454.5 126V127M455.5 126V127M456.5 126V127M457.5 126V127M458.5 126V127M459.5 126V127M460.5 126V127M461.5 126V127M462.5 126V127M463.5 126V127M464.5 126V127M465.5 126V127M466.5 126V127M467.5 126V127M468.5 126V127M469.5 126V127M470.5 126V127M471.5 126V127M472.5 126V127M473.5 126V127M474.5 126V127M475.5 126V127M476.5 126V127M477.5 126V127M478.5 126V127M479.5 126V127M480.5 126V127M481.5 126V127M482.5 126V127M483.5 126V127M484.5 126V127M485.5 126V127M486.5 126V127M487.5 126V127M488.5 126V127M489.5 126V127M490.5 126V127M491.5 126V127M492.5 126V127M493.5 126V127M494.5 126V127M495.5 126V127M496.5 126V127M497.5 126V127M498.5 126V127M499.5 126V127M500.5 126V127M501.5 126V127M502.5 126V127M503.5 126V127M504.5 126V127M505.5 126V127M506.5 126V127M507.5 126V127M508.5 126V127M509.5 126V127M510.5 126V127M511.5 126V127M512.5 126V127M513.5 126V127M514.5 126V127M515.5 126V127M516.5 126V127M517.5 126V127M518.5 126V127M519.5 126V127M520.5 126V127M521.5 126V127M522.5 126V127M523.5 126V127M524.5 126V127M525.5 126V127M526.5 126V127M527.5 126V127M528.5 126V127M529.5 126V127M530.5 126V127M531.5 126V127M532.5 126V127M533.5 126V127M534.5 126V127M535.5 126V127M536.5 126V127M537.5 126V127M538.5 126V127M539.5 126V127M540.5 126V127M541.5 126V127M542.5 126V127M543.5 126V127M544.5 126V127M545.5 126V127M546.5 126V127M547.5 126V127M548.5 126V127M549.5 126V127M550.5 126V127M551.5 126V127M552.5 126V127M553.5 126V127M554.5 126V127M555.5 126V127M556.5 126V127M557.5 126V127M558.5 126V127M559.5 126V127M560.5 126V127M561.5 126V127M562.5 126V127M563.5 126V127M564.5 126V127M565.5 126V127M566.5 126V127M567.5 126V127M568.5 126V127M569.5 126V127M570.5 126V127M571.5 126V127M572.5 126V127M573.5 126V127M574.5 126V127M575.5 126V127M576.5 126V127M577.5 126V127M578.5 126V127M579.5 126V127M580.5 126V127M581.5 126V127M582.5 126V127M583.5 126V127M584.5 126V127M585.5 126V127M586.5 126V127M587.5 126V127M588.5 126V127M589.5 126V127M590.5 126V127M591.5 126V127M592.5 126V127M593.5 126V127M594.5 126V127M595.5 126V127M596.5 126V127M597.5 126V127M598.5 126V127M599.5 126V127M600.5 126V127M601.5 126V127M602.5 126V127M603.5 126V127M604.5 126V127M605.5 126V127M606.5 126V127M607.5 126V127M608.5 126V127M609.5 126V127M610.5 126V127M611.5 126V127M612.5 126V127M613.5 126V127M614.5 126V127M615.5 126V127M616.5 126V127M617.5 126V127M618.5 126V127M619.5 126V127M620.5 126V127M621.5 126V127M622.5 126V127M623.5 126V127M624.5 126V127M625.5 126V127M626.5 126V127M627.5 126V127M628.5 126V127M629.5 126V127M630.5 126V127M631.5 126V127M632.5 126V127M633.5 126V127M634.5 126V127M635.5 126V127M636.5 126V127M637.5 126V127M638.5 126V127M639.5 126V127M640.5 126V127M641.5 126V127M642.5 126V127M643.5 126V127M644.5 126V127M645.5 126V127M646.5 126V127M647.5 126V127M648.5 126V127M649.5 126V127M650.5 126V127M651.5 126V127M652.5 126V127M653.5 126V127M654.5 126V127M655.5 126V127M656.5 126V127M657.5 126V127M658.5 126V127M659.5 126V127M660.5 126V127M661.5 126V127M662.5 126V127M663.5 126V127M664.5 126V127M665.5 126V127M666.5 126V127M667.5 126V127M668.5 126V127M669.5 126V127M670.5 126V127M671.5 126V127M672.5 126V127M673.5 126V127M674.5 126V127M675.5 126V127M676.5 126V127M677.5 126V127M678.5 126V127M679.5 126V127M680.5 126V127M681.5 126V127M682.5 126V127M683.5 126V127M684.5 126V127M685.5 126V127M686.5 126V127M687.5 126V127M688.5 126V127M689.5 126V127M690.5 126V127M691.5 126V127M692.5 126V127M693.5 126V127M694.5 126V127M695.5 126V127M696.5 126V127M697.5 126V127M698.5 126V127M699.5 126V127M700.5 126V127M701.5 126V127M702.5 126V127M703.5 126V127M704.5 126V127M705.5 126V127M706.5 126V127M707.5 126V127M708.5 126V127M709.5 126V127M710.5 126V127M711.5 126V127M712.5 126V127M713.5 126V127M714.5 126V127M715.5 126V127M716.5 126V127M717.5 126V127M718.5 126V127M719.5 126V127M720.5 126V127M721.5 126V127M722.5 126V127M723.5 126V127M724.5 126V127M725.5 126V127M726.5 126V127M727.5 126V127M728.5 126V127M729.5 126V127M730.5 126V127M731.5 126V127M732.5 126V127M733.5 126V127M734.5 126V127M735.5 126V127M736.5 126V127M737.5 126V127M738.5 126V127M739.5 126V127M740.5 126V127M741.5 126V127M742.5 126V127M743.5 126V127M744.5 126V127M745.5 126V127M746.5 126V127M747.5 126V127M748.5 126V127M749.5 126V127M750.5 126V127M751.5 126V127M752.5 126V127M753.5 126V127M754.5 126V127M755.5 126V127M756.5 126V127M757.5 126V127M758.5 126V127M759.5 126V127M760.5 126V127M761.5 126V127M762.5 126V127M763.5 126V127M764.5 126V127M765.5 126V127M766.5 126V127M767.5 126V127M768.5 126V127M769.5 126V127M770.5 126V127M771.5 126V127M772.5 126V127M773.5 126V127M774.5 126V127M775.5 126V127M776.5 126V127M777.5 126V127M778.5 126V127M779.5 126V127M780.5 126V127M781.5 126V127M782.5 126V127M783.5 126V127M784.5 126V127M785.5 126V127M786.5 126V127M787.5 126V127M788.5 126V127M789.5 126V127M790.5 126V127M791.5 126V127M792.5 126V127M793.5 126V127M794.5 126V127M795.5 126V127M796.5 126V127M797.5 126V127M798.5 126V127M799.5 126V127M800.5 126V127M801.5 126V127M802.5 126V127M803.5 126V127M804.5 126V127M805.5 126V127M806.5 126V127M807.5 126V127M808.5 126V127M809.5 126V127M810.5 126V127M811.5 126V127M812.5 126V127M813.5 126V127M814.5 126V127M815.5 126V127M816.5 126V127M817.5 126V127M818.5 126V127M819.5 126V127M820.5 126V127M821.5 126V127M822.5 126V127M823.5 126V127M824.5 126V127M825.5 126V127M826.5 126V127M827.5 126V127M828.5 126V127M829.5 126V127M830.5 126V127M831.5 126V127M832.5 126V127M833.5 126V127M834.5 126V127M835.5 126V127M836.5 126V127M837.5 126V127M838.5 126V127M839.5 126V127M840.5 126V127M841.5 126V127M842.5 126V127M843.5 126V127M844.5 126V127M845.5 126V127M846.5 126V127M847.5 126V127M848.5 126V127M849.5 126V127M850.5 126V127M851.5 126V127M852.5 126V127M853.5 126V127M854.5 126V127M855.5 126V127M856.5 126V127M857.5 126V127M858.5 126V127M859.5 126V127M860.5 126V127M861.5 126V127M862.5 126V127M863.5 126V127M864.5 126V127M865.5 126V127M866.5 126V127M867.5 126V127M868.5 126V127M869.5 126V127M870.5 126V127M871.5 126V127M872.5 126V127M873.5 126V127M874.5 126V127M875.5 126V127M876.5 126V127M877.5 126V127M878.5 126V127M879.5 126V127M880.5 126V127M881.5 126V127M882.5 126V127M883.5 126V127M884.5 126V127M885.5 126V127M886.5 126V127M887.5 126V127M888.5 126V127M889.5 126V127M890.5 126V127M891.5 126V127M892.5 126V127M893.5 126V127M894.5 126V127M895.5 126V127M896.5 126V127M897.5 126V127M898.5 126V127M899.5 126V127M900.5 126V127M901.5 126V127M902.5 126V127M903.5 126V127M904.5 126V127M905.5 126V127M906.5 126V127M907.5 126V127M908.5 126V127M909.5 126V127M910.5 126V127M911.5 126V127M912.5 126V127M913.5 126V127M914.5 126V127M915.5 126V127M916.5 126V127M917.5 126V127M918.5 126V127M919.5 126V127M920.5 126V127M921.5 126V127M922.5 126V127M923.5 126V127M924.5 126V127M925.5 126V127M926.5 126V127M927.5 126V127M928.5 126V127M929.5 126V127M930.5 126V127M931.5 126V127M932.5 126V127M933.5 126V127M934.5 126V127M935.5 126V127M936.5 126V127M937.5 126V127M938.5 126V127M939.5 126V127M940.5 126V127M941.5 126V127M942.5 126V127M943.5 126V127M944.5 126V127M945.5 126V127M946.5 126V127M947.5 126V127M948.5 126V127M949.5 126V127M950.5 126V127M951.5 126V127M952.5 126V127M953.5 126V127M954.5 126V127M955.5 126V127M956.5 126V127M957.5 126V127M958.5 126V127M959.5 126V127M960.5 126V127M961.5 126V127M962.5 126V127M963.5 126V127M964.5 126V127M965.5 126V127M966.5 126V127M967.5 126V127M968.5 126V127M969.5 126V127M970.5 126V127M971.5 126V127M972.5 126V127M973.5 126V127M974.5 126V127M975.5 126V127M976.5 126V127M977.5 126V127M978.5 126V127M979.5 126V127M980.5 126V127M981.5 126V127M982.5 126V127M983.5 126V127M984.5 126V127M985.5 126V127M986.5 126V127M987.5 126V127M988.5 126V127M989.5 126V127M990.5 126V127M991.5 126V127M992.5 126V127M993.5 126V127M994.5 126V127M995.5 126V127M996.5 126V127M997.5 126V127M998.5 126V127M999.5 126V127M1000.5 126V127M1001.5 126V127M1002.5 126V127M1003.5 126V127M1004.5 126V127M1005.5 126V127M1006.5 126V127M1007.5 126V127M1008.5 126V127M1009.5 126V127M1010.5 126V127M1011.5 126V127M1012.5 126V127M1013.5 126V127M1014.5 126V127M1015.5 126V127M1016.5 126V127M1017.5 126V127M1018.5 126V127M1019.5 126V127M1020.5 126V127"/>
</g>
<g stroke="#ffff00" stroke-width="1" shape-rendering="crispEdges" fill="none">
<path opacity="0.18" d="M21.5 86V87M22.5 86V87M23.5 86V87M25.5 86V87M26.5 86V87M27.5 86V87M29.5 86V87M30.5 86V87M31.5 86V87M32.5 86V87M33.5 86V87M34.5 86V87M36.5 86V87M37.5 86V87M38.5 86V87M39.5 86V87M40.5 86V87M41.5 86V87M42.5 86V87M43.5 86V87M44.5 86V87M48.5 86V87M49.5 86V87M50.5 86V87M51.5 86V87M53.5 86V87M56.5 86V87M58.5 86V87M59.5 86V87M60.5 86V87M61.5 86V87M63.5 86V87M65.5 86V87M67.5 86V87M68.5 86V87M70.5 86V87M71.5 86V87M73.5 86V87M74.5 86V87M76.5 86V87M81.5 86V87M82.5 86V87M83.5 86V87M85.5 86V87M87.5 86V87M88.5 86V87M90.5 86V87M91.5 86V87M92.5 86V87M94.5 86V87M96.5 86V87M97.5 86V87M100.5 86V87M101.5 86V87M102.5 86V87M103.5 86V87M106.5 86V87M107.5 86V87M108.5 86V87M109.5 86V87M110.5 86V87M111.5 86V87M113.5 86V87M115.5 86V87M116.5 86V87M119.5 86V87M122.5 86V87M123.5 86V87M125.5 86V87M127.5 86V87M130.5 86V87M131.5 86V87M133.5 86V87M135.5 86V87M136.5 86V87M137.5 86V87M138.5 86V87M139.5 86V87M140.5 86V87M141.5 86V87M142.5 86V87M144.5 86V87M146.5 86V87M147.5 86V87M149.5 86V87M152.5 86V87M153.5 86V87M155.5 86V87M157.5 86V87M159.5 86V87M161.5 86V87M162.5 86V87M163.5 86V87M165.5 86V87M167.5 86V87M168.5 86V87M169.5 86V87M170.5 86V87M173.5 86V87M175.5 86V87M176.5 86V87M180.5 86V87M181.5 86V87M182.5 86V87M183.5 86V87M184.5 86V87M185.5 86V87M186.5 86V87M187.5 86V87M190.5 86V87M192.5 86V87M193.5 86V87M197.5 86V87M199.5 86V87M200.5 86V87M204.5 86V87M206.5 86V87M207.5 86V87M208.5 86V87M209.5 86V87M210.5 86V87M212.5 86V87M213.5 86V87M214.5 86V87M215.5 86V87M217.5 86V87M218.5 86V87M224.5 86V87M226.5 86V87M227.5 86V87M230.5 86V87M231.5 86V87M235.5 86V87M236.5 86V87M237.5 86V87M239.5 86V87M240.5 86V87M242.5 86V87M243.5 86V87M244.5 86V87M245.5 86V87M247.5 86V87M248.5 86V87M252.5 86V87M254.5 86V87M255.5 86V87M256.5 86V87M257.5 86V87M258.5 86V87M261.5 86V87M262.5 86V87M263.5 86V87M265.5 86V87M266.5 86V87M269.5 86V87M271.5 86V87M272.5 86V87M274.5 86V87M275.5 86V87M276.5 86V87M279.5 86V87M282.5 86V87M283.5 86V87M284.5 86V87M286.5 86V87M290.5 86V87M294.5 86V87M295.5 86V87M296.5 86V87M297.5 86V87M301.5 86V87M302.5 86V87M304.5 86V87M306.5 86V87M308.5 86V87M309.5 86V87M310.5 86V87M311.5 86V87M313.5 86V87M314.5 86V87M315.5 86V87M317.5 86V87M319.5 86V87M321.5 86V87M323.5 86V87M324.5 86V87M325.5 86V87M326.5 86V87M327.5 86V87M330.5 86V87M332.5 86V87M334.5 86V87M335.5 86V87M336.5 86V87M337.5 86V87M338.5 86V87M341.5 86V87M342.5 86V87M343.5 86V87M344.5 86V87M345.5 86V87M346.5 86V87M347.5 86V87M348.5 86V87M349.5 86V87M351.5 86V87M352.5 86V87M355.5 86V87M359.5 86V87M361.5 86V87M362.5 86V87M365.5 86V87M367.5 86V87M368.5 86V87M369.5 86V87M371.5 86V87M372.5 86V87M373.5 86V87M374.5 86V87M375.5 86V87M377.5 86V87M379.5 86V87M381.5 86V87M384.5 86V87M385.5 86V87M389.5 86V87M392.5 86V87M394.5 86V87"/>
<path opacity="0.3" d="M30.5 77V79M74.5 86V88M96.5 86V88M103.5 86V88M113.5 77V79M143.5 86V88M166.5 77V79M177.5 77V79M239.5 86V88M241.5 77V79M248.5 86V88M258.5 77V79M265.5 86V88M280.5 77V79M291.5 86V88M321.5 77V79M327.5 77V79M349.5 86V88M368.5 77V79M368.5 86V88M373.5 86V88"/>
<path opacity="0.4" d="M25.5 79V82M28.5 79V82M31.5 79V82M32.5 79V82M48.5 79V82M49.5 79V82M54.5 79V82M56.5 79V82M57.5 79V82M69.5 79V82M82.5 79V82M86.5 79V82M93.5 79V82M99.5 79V82M102.5 79V82M108.5 79V82M114.5 79V82M115.5 79V82M125.5 79V82M126.5 79V82M127.5 79V82M147.5 79V82M157.5 79V82M163.5 79V82M177.5 79V82M185.5 79V82M186.5 79V82M188.5 79V82M189.5 79V82M196.5 79V82M205.5 79V82M206.5 79V82M216.5 79V82M235.5 79V82M242.5 79V82M246.5 79V82M247.5 79V82M252.5 79V82M259.5 79V82M260.5 79V82M267.5 79V82M268.5 79V82M270.5 79V82M273.5 79V82M276.5 79V82M287.5 79V82M294.5 79V82M304.5 79V82M307.5 79V82M318.5 79V82M319.5 79V82M324.5 79V82M326.5 79V82M327.5 79V82M331.5 79V82M332.5 79V82M341.5 79V82M344.5 79V82M356.5 79V82M360.5 79V82M361.5 79V82M362.5 79V82M363.5 79V82M372.5 79V82M376.5 79V82M379.5 79V82M382.5 79V82M392.5 79V82M393.5 79V82"/>
<path opacity="0.45" d="M21.5 79V82M26.5 79V82M34.5 79V82M42.5 79V82M53.5 79V82M61.5 79V82M62.5 79V82M67.5 79V82M74.5 79V82M79.5 79V82M90.5 79V82M96.5 79V82M100.5 79V82M101.5 79V82M103.5 79V82M105.5 79V82M109.5 79V82M119.5 79V82M128.5 79V82M131.5 79V82M133.5 79V82M135.5 79V82M137.5 79V82M140.5 79V82M141.5 79V82M150.5 79V82M162.5 79V82M169.5 79V82M170.5 79V82M172.5 79V82M181.5 79V82M187.5 79V82M191.5 79V82M193.5 79V82M203.5 79V82M204.5 79V82M207.5 79V82M211.5 79V82M213.5 79V82M214.5 79V82M220.5 79V82M231.5 79V82M234.5 79V82M238.5 79V82M245.5 79V82M248.5 79V82M262.5 79V82M263.5 79V82M269.5 79V82M272.5 79V82M279.5 79V82M280.5 79V82M286.5 79V82M291.5 79V82M293.5 79V82M295.5 79V82M297.5 79V82M299.5 79V82M303.5 79V82M306.5 79V82M308.5 79V82M325.5 79V82M330.5 79V82M335.5 79V82M339.5 79V82M342.5 79V82M345.5 79V82M352.5 79V82M357.5 79V82M359.5 79V82M368.5 79V82M370.5 79V82M371.5 79V82M389.5 79V82M397.5 78V81"/>
<path opacity="0.5" d="M22.5 79V82M23.5 79V82M27.5 79V82M30.5 79V82M35.5 79V82M36.5 79V82M38.5 79V82M39.5 79V82M40.5 79V82M41.5 79V82M44.5 79V82M45.5 79V82M46.5 79V82M50.5 79V82M51.5 79V82M52.5 79V82M55.5 79V82M58.5 79V82M60.5 79V82M63.5 79V82M64.5 79V82M68.5 79V82M71.5 79V82M72.5 79V82M73.5 79V82M75.5 79V82M76.5 79V82M77.5 79V82M78.5 79V82M80.5 79V82M83.5 79V82M84.5 79V82M85.5 79V82M87.5 79V82M89.5 79V82M92.5 79V82M94.5 79V82M95.5 79V82M98.5 79V82M104.5 79V82M106.5 79V82M110.5 79V82M116.5 79V82M117.5 79V82M121.5 79V82M122.5 79V82M123.5 79V82M129.5 79V82M130.5 79V82M132.5 79V82M136.5 79V82M138.5 79V82M139.5 79V82M142.5 79V82M144.5 79V82M145.5 79V82M146.5 79V82M149.5 79V82M152.5 79V82M153.5 79V82M154.5 79V82M155.5 79V82M156.5 79V82M159.5 79V82M161.5 79V82M165.5 79V82M166.5 79V82M168.5 79V82M173.5 79V82M174.5 79V82M176.5 79V82M178.5 79V82M190.5 79V82M194.5 79V82M197.5 79V82M198.5 79V82M200.5 79V82M201.5 79V82M202.5 79V82M208.5 79V82M209.5 79V82M210.5 79V82M212.5 79V82M215.5 79V82M218.5 79V82M219.5 79V82M221.5 79V82M222.5 79V82M223.5 79V82M224.5 79V82M225.5 79V82M227.5 79V82M229.5 79V82M233.5 79V82M236.5 79V82M237.5 79V82M240.5 79V82M243.5 79V82M244.5 79V82M249.5 79V82M250.5 79V82M251.5 79V82M253.5 79V82M254.5 79V82M256.5 79V82M258.5 79V82M261.5 79V82M264.5 79V82M275.5 79V82M277.5 79V82M278.5 79V82M281.5 79V82M283.5 79V82M284.5 79V82M288.5 79V82M290.5 79V82M296.5 79V82M298.5 79V82M301.5 79V82M302.5 79V82M305.5 79V82M309.5 79V82M312.5 79V82M315.5 79V82M320.5 79V82M321.5 79V82M322.5 79V82M323.5 79V82M328.5 79V82M334.5 79V82M338.5 79V82M343.5 79V82M346.5 79V82M347.5 79V82M349.5 79V82M350.5 79V82M351.5 79V82M353.5 79V82M354.5 79V82M355.5 79V82M358.5 79V82M365.5 79V82M367.5 79V82M369.5 79V82M373.5 79V82M374.5 79V82M375.5 79V82M377.5 79V82M378.5 79V82M380.5 79V82M381.5 79V82M383.5 79V82M385.5 79V82M386.5 79V82M388.5 79V82M391.5 79V82M395.5 79V82M396.5 79V82"/>
<path opacity="0.55" d="M24.5 79V82M29.5 79V82M33.5 79V82M37.5 79V82M43.5 79V82M47.5 79V82M59.5 79V82M65.5 79V82M66.5 79V82M70.5 79V82M81.5 79V82M88.5 79V82M91.5 79V82M97.5 79V82M107.5 79V82M111.5 79V82M112.5 79V82M113.5 79V82M118.5 79V82M120.5 79V82M124.5 79V82M134.5 79V82M143.5 79V82M148.5 79V82M151.5 79V82M158.5 79V82M160.5 79V82M164.5 79V82M167.5 79V82M171.5 79V82M175.5 79V82M179.5 79V82M180.5 79V82M182.5 79V82M183.5 79V82M184.5 79V82M192.5 79V82M195.5 79V82M199.5 79V82M217.5 79V82M226.5 79V82M228.5 79V82M230.5 79V82M232.5 79V82M239.5 79V82M241.5 79V82M255.5 79V82M257.5 79V82M265.5 79V82M266.5 79V82M271.5 79V82M274.5 79V82M282.5 79V82M285.5 79V82M289.5 79V82M292.5 79V82M300.5 79V82M310.5 79V82M311.5 79V82M313.5 79V82M314.5 79V82M316.5 79V82M317.5 79V82M329.5 79V82M333.5 79V82M336.5 79V82M337.5 79V82M340.5 79V82M348.5 79V82M364.5 79V82M366.5 79V82M384.5 79V82M387.5 79V82M390.5 79V82M394.5 79V82"/>
<path opacity="0.6" d="M23.5 83V86M29.5 83V86M31.5 83V86M33.5 83V86M40.5 83V86M42.5 83V86M54.5 83V86M56.5 83V86M60.5 83V86M62.5 83V86M64.5 83V86M70.5 83V86M83.5 83V86M89.5 83V86M93.5 83V86M96.5 83V86M103.5 83V86M104.5 83V86M106.5 83V86M107.5 83V86M111.5 83V86M115.5 83V86M117.5 83V86M124.5 83V86M128.5 83V86M133.5 83V86M138.5 83V86M144.5 83V86M164.5 83V86M178.5 83V86M179.5 83V86M188.5 83V86M193.5 83V86M194.5 83V86M197.5 83V86M198.5 83V86M204.5 83V86M211.5 83V86M219.5 83V86M220.5 83V86M221.5 83V86M223.5 83V86M226.5 83V86M228.5 83V86M238.5 83V86M241.5 83V86M242.5 83V86M245.5 83V86M255.5 83V86M256.5 83V86M271.5 83V86M273.5 83V86M275.5 83V86M276.5 83V86M278.5 83V86M281.5 83V86M283.5 83V86M291.5 83V86M293.5 83V86M301.5 83V86M302.5 83V86M305.5 83V86M309.5 83V86M312.5 83V86M318.5 83V86M333.5 83V86M335.5 83V86M336.5 83V86M338.5 83V86M343.5 83V86M349.5 83V86M351.5 83V86M356.5 83V86M365.5 83V86M371.5 83V86M372.5 83V86M373.5 83V86M375.5 83V86M380.5 83V86M383.5 83V86M385.5 83V86M394.5 83V86M395.5 83V86"/>
<path opacity="0.65" d="M35.5 83V86M36.5 83V86M41.5 83V86M47.5 83V86M50.5 83V86M52.5 83V86M55.5 83V86M57.5 83V86M63.5 83V86M65.5 83V86M67.5 83V86M68.5 83V86M69.5 83V86M74.5 83V86M76.5 83V86M84.5 83V86M86.5 83V86M87.5 83V86M91.5 83V86M97.5 83V86M105.5 83V86M108.5 83V86M113.5 83V86M122.5 83V86M123.5 83V86M126.5 83V86M130.5 83V86M131.5 83V86M135.5 83V86M136.5 83V86M137.5 83V86M141.5 83V86M145.5 83V86M146.5 83V86M150.5 83V86M153.5 83V86M161.5 83V86M168.5 83V86M171.5 83V86M174.5 83V86M181.5 83V86M186.5 83V86M192.5 83V86M199.5 83V86M200.5 83V86M201.5 83V86M203.5 83V86M208.5 83V86M209.5 83V86M212.5 83V86M213.5 83V86M216.5 83V86M222.5 83V86M225.5 83V86M227.5 83V86M244.5 83V86M247.5 83V86M251.5 83V86M253.5 83V86M260.5 83V86M263.5 83V86M267.5 83V86M268.5 83V86M270.5 83V86M288.5 83V86M290.5 83V86M295.5 83V86M297.5 83V86M300.5 83V86M306.5 83V86M308.5 83V86M316.5 83V86M317.5 83V86M332.5 83V86M339.5 83V86M342.5 83V86M345.5 83V86M347.5 83V86M350.5 83V86M352.5 83V86M357.5 83V86M358.5 83V86M362.5 83V86M366.5 83V86M369.5 83V86M379.5 83V86M388.5 83V86M392.5 83V86"/>
<path opacity="0.7" d="M21.5 83V86M30.5 83V86M37.5 83V86M43.5 83V86M46.5 83V86M48.5 83V86M49.5 83V86M53.5 83V86M61.5 83V86M78.5 83V86M79.5 83V86M80.5 83V86M81.5 83V86M100.5 83V86M101.5 83V86M102.5 83V86M110.5 83V86M116.5 83V86M118.5 83V86M121.5 83V86M127.5 83V86M129.5 83V86M134.5 83V86M139.5 83V86M143.5 83V86M148.5 83V86M149.5 83V86M152.5 83V86M155.5 83V86M162.5 83V86M172.5 83V86M185.5 83V86M189.5 83V86M190.5 83V86M214.5 83V86M224.5 83V86M229.5 83V86M230.5 83V86M234.5 83V86M235.5 83V86M243.5 83V86M249.5 83V86M250.5 83V86M266.5 83V86M277.5 83V86M285.5 83V86M289.5 83V86M292.5 83V86M299.5 83V86M307.5 83V86M311.5 83V86M315.5 83V86M321.5 83V86M322.5 83V86M327.5 83V86M328.5 83V86M330.5 83V86M341.5 83V86M348.5 83V86M355.5 83V86M370.5 83V86M374.5 83V86M376.5 83V86M377.5 83V86M378.5 83V86M389.5 83V86"/>
<path opacity="0.75" d="M24.5 83V86M25.5 83V86M26.5 83V86M28.5 83V86M32.5 83V86M39.5 83V86M44.5 83V86M51.5 83V86M58.5 83V86M59.5 83V86M66.5 83V86M71.5 83V86M73.5 83V86M75.5 83V86M82.5 83V86M88.5 83V86M90.5 83V86M94.5 83V86M109.5 83V86M112.5 83V86M120.5 83V86M125.5 83V86M132.5 83V86M140.5 83V86M151.5 83V86M158.5 83V86M160.5 83V86M163.5 83V86M166.5 83V86M169.5 83V86M170.5 83V86M175.5 83V86M176.5 83V86M183.5 83V86M187.5 83V86M191.5 83V86M196.5 83V86M202.5 83V86M205.5 83V86M206.5 83V86M207.5 83V86M210.5 83V86M215.5 83V86M217.5 83V86M218.5 83V86M232.5 83V86M239.5 83V86M248.5 83V86M252.5 83V86M254.5 83V86M257.5 83V86M259.5 83V86M261.5 83V86M262.5 83V86M265.5 83V86M272.5 83V86M274.5 83V86M280.5 83V86M284.5 83V86M294.5 83V86M303.5 83V86M310.5 83V86M314.5 83V86M319.5 83V86M326.5 83V86M334.5 83V86M337.5 83V86M344.5 83V86M359.5 83V86M367.5 83V86M381.5 83V86M382.5 83V86M384.5 83V86M386.5 83V86M390.5 83V86M396.5 83V86"/>
<path opacity="0.8" d="M22.5 83V86M27.5 83V86M34.5 83V86M38.5 83V86M45.5 83V86M72.5 83V86M77.5 83V86M85.5 83V86M92.5 83V86M95.5 83V86M98.5 83V86M99.5 83V86M114.5 83V86M119.5 83V86M142.5 83V86M147.5 83V86M154.5 83V86M156.5 83V86M157.5 83V86M159.5 83V86M165.5 83V86M167.5 83V86M173.5 83V86M177.5 83V86M180.5 83V86M182.5 83V86M184.5 83V86M195.5 83V86M231.5 83V86M233.5 83V86M236.5 83V86M237.5 83V86M240.5 83V86M246.5 83V86M258.5 83V86M264.5 83V86M269.5 83V86M279.5 83V86M282.5 83V86M286.5 83V86M287.5 83V86M296.5 83V86M298.5 83V86M304.5 83V86M313.5 83V86M320.5 83V86M323.5 83V86M324.5 83V86M325.5 83V86M329.5 83V86M331.5 83V86M340.5 83V86M346.5 83V86M353.5 83V86M354.5 83V86M360.5 83V86M361.5 83V86M363.5 83V86M364.5 83V86M368.5 83V86M387.5 83V86M391.5 83V86M393.5 83V86M397.5 83V86"/>
<path opacity="1.0" d="M21.5 82V83M22.5 82V83M23.5 82V83M24.5 82V83M25.5 82V83M26.5 82V83M27.5 82V83M28.5 82V83M29.5 82V83M30.5 82V83M31.5 82V83M32.5 82V83M33.5 82V83M34.5 82V83M35.5 82V83M36.5 82V83M37.5 82V83M38.5 82V83M39.5 82V83M40.5 82V83M41.5 82V83M42.5 82V83M43.5 82V83M44.5 82V83M45.5 82V83M46.5 82V83M47.5 82V83M48.5 82V83M49.5 82V83M50.5 82V83M51.5 82V83M52.5 82V83M53.5 82V83M54.5 82V83M55.5 82V83M56.5 82V83M57.5 82V83M58.5 82V83M59.5 82V83M60.5 82V83M61.5 82V83M62.5 82V83M63.5 82V83M64.5 82V83M65.5 82V83M66.5 82V83M67.5 82V83M68.5 82V83M69.5 82V83M70.5 82V83M71.5 82V83M72.5 82V83M73.5 82V83M74.5 82V83M75.5 82V83M76.5 82V83M77.5 82V83M78.5 82V83M79.5 82V83M80.5 82V83M81.5 82V83M82.5 82V83M83.5 82V83M84.5 82V83M85.5 82V83M86.5 82V83M87.5 82V83M88.5 82V83M89.5 82V83M90.5 82V83M91.5 82V83M92.5 82V83M93.5 82V83M94.5 82V83M95.5 82V83M96.5 82V83M97.5 82V83M98.5 82V83M99.5 82V83M100.5 82V83M101.5 82V83M102.5 82V83M103.5 82V83M104.5 82V83M105.5 82V83M106.5 82V83M107.5 82V83M108.5 82V83M109.5 82V83M110.5 82V83M111.5 82V83M112.5 82V83M113.5 82V83M114.5 82V83M115.5 82V83M116.5 82V83M117.5 82V83M118.5 82V83M119.5 82V83M120.5 82V83M121.5 82V83M122.5 82V83M123.5 82V83M124.5 82V83M125.5 82V83M126.5 82V83M127.5 82V83M128.5 82V83M129.5 82V83M130.5 82V83M131.5 82V83M132.5 82V83M133.5 82V83M134.5 82V83M135.5 82V83M136.5 82V83M137.5 82V83M138.5 82V83M139.5 82V83M140.5 82V83M141.5 82V83M142.5 82V83M143.5 82V83M144.5 82V83M145.5 82V83M146.5 82V83M147.5 82V83M148.5 82V83M149.5 82V83M150.5 82V83M151.5 82V83M152.5 82V83M153.5 82V83M154.5 82V83M155.5 82V83M156.5 82V83M157.5 82V83M158.5 82V83M159.5 82V83M160.5 82V83M161.5 82V83M162.5 82V83M163.5 82V83M164.5 82V83M165.5 82V83M166.5 82V83M167.5 82V83M168.5 82V83M169.5 82V83M170.5 82V83M171.5 82V83M172.5 82V83M173.5 82V83M174.5 82V83M175.5 82V83M176.5 82V83M177.5 82V83M178.5 82V83M179.5 82V83M180.5 82V83M181.5 82V83M182.5 82V83M183.5 82V83M184.5 82V83M185.5 82V83M186.5 82V83M187.5 82V83M188.5 82V83M189.5 82V83M190.5 82V83M191.5 82V83M192.5 82V83M193.5 82V83M194.5 82V83M195.5 82V83M196.5 82V83M197.5 82V83M198.5 82V83M199.5 82V83M200.5 82V83M201.5 82V83M202.5 82V83M203.5 82V83M204.5 82V83M205.5 82V83M206.5 82V83M207.5 82V83M208.5 82V83M209.5 82V83M210.5 82V83M211.5 82V83M212.5 82V83M213.5 82V83M214.5 82V83M215.5 82V83M216.5 82V83M217.5 82V83M218.5 82V83M219.5 82V83M220.5 82V83M221.5 82V83M222.5 82V83M223.5 82V83M224.5 82V83M225.5 82V83M226.5 82V83M227.5 82V83M228.5 82V83M229.5 82V83M230.5 82V83M231.5 82V83M232.5 82V83M233.5 82V83M234.5 82V83M235.5 82V83M236.5 82V83M237.5 82V83M238.5 82V83M239.5 82V83M240.5 82V83M241.5 82V83M242.5 82V83M243.5 82V83M244.5 82V83M245.5 82V83M246.5 82V83M247.5 82V83M248.5 82V83M249.5 82V83M250.5 82V83M251.5 82V83M252.5 82V83M253.5 82V83M254.5 82V83M255.5 82V83M256.5 82V83M257.5 82V83M258.5 82V83M259.5 82V83M260.5 82V83M261.5 82V83M262.5 82V83M263.5 82V83M264.5 82V83M265.5 82V83M266.5 82V83M267.5 82V83M268.5 82V83M269.5 82V83M270.5 82V83M271.5 82V83M272.5 82V83M273.5 82V83M274.5 82V83M275.5 82V83M276.5 82V83M277.5 82V83M278.5 82V83M279.5 82V83M280.5 82V83M281.5 82V83M282.5 82V83M283.5 82V83M284.5 82V83M285.5 82V83M286.5 82V83M287.5 82V83M288.5 82V83M289.5 82V83M290.5 82V83M291.5 82V83M292.5 82V83M293.5 82V83M294.5 82V83M295.5 82V83M296.5 82V83M297.5 82V83M298.5 82V83M299.5 82V83M300.5 82V83M301.5 82V83M302.5 82V83M303.5 82V83M304.5 82V83M305.5 82V83M306.5 82V83M307.5 82V83M308.5 82V83M309.5 82V83M310.5 82V83M311.5 82V83M312.5 82V83M313.5 82V83M314.5 82V83M315.5 82V83M316.5 82V83M317.5 82V83M318.5 82V83M319.5 82V83M320.5 82V83M321.5 82V83M322.5 82V83M323.5 82V83M324.5 82V83M325.5 82V83M326.5 82V83M327.5 82V83M328.5 82V83M329.5 82V83M330.5 82V83M331.5 82V83M332.5 82V83M333.5 82V83M334.5 82V83M335.5 82V83M336.5 82V83M337.5 82V83M338.5 82V83M339.5 82V83M340.5 82V83M341.5 82V83M342.5 82V83M343.5 82V83M344.5 82V83M345.5 82V83M346.5 82V83M347.5 82V83M348.5 82V83M349.5 82V83M350.5 82V83M351.5 82V83M352.5 82V83M353.5 82V83M354.5 82V83M355.5 82V83M356.5 82V83M357.5 82V83M358.5 82V83M359.5 82V83M360.5 82V83M361.5 82V83M362.5 82V83M363.5 82V83M364.5 82V83M365.5 82V83M366.5 82V83M367.5 82V83M368.5 82V83M369.5 82V83M370.5 82V83M371.5 82V83M372.5 82V83M373.5 82V83M374.5 82V83M375.5 82V83M376.5 82V83M377.5 82V83M378.5 82V83M379.5 82V83M380.5 82V83M381.5 82V83M382.5 82V83M383.5 82V83M384.5 82V83M385.5 82V83M386.5 82V83M387.5 82V83M388.5 82V83M389.5 82V83M390.5 82V83M391.5 82V83M392.5 82V83M393.5 82V83M394.5 82V83M395.5 82V83M396.5 82V83M397.5 81V83"/>
</g>
<g fill="#ffff00" shape-rendering="crispEdges"><rect x="398" y="67" width="2" height="3" opacity="0.35"/><rect x="398" y="70" width="3" height="3" opacity="0.7"/><rect x="398" y="73" width="2" height="3" opacity="0.55"/><rect x="398" y="76" width="2" height="4" opacity="0.4"/><rect x="399" y="79" width="2" height="5" opacity="0.6"/><rect x="397" y="80" width="2" height="5" opacity="0.5"/><rect x="401" y="83" width="2" height="3" opacity="0.6"/><rect x="401" y="86" width="3" height="2" opacity="0.9"/><rect x="401" y="88" width="3" height="3" opacity="0.75"/><rect x="402" y="91" width="2" height="3" opacity="0.5"/><rect x="404" y="79" width="6" height="2" opacity="0.45"/><rect x="404" y="81" width="6" height="2" opacity="0.9"/><rect x="405" y="83" width="4" height="2" opacity="0.5"/><rect x="406" y="77" width="2" height="2" opacity="0.25"/><rect x="408" y="83" width="3" height="2" opacity="0.6"/><rect x="409" y="85" width="7" height="2" opacity="0.95"/><rect x="410" y="87" width="6" height="2" opacity="0.7"/><rect x="410" y="89" width="5" height="2" opacity="0.45"/><rect x="415" y="82" width="2" height="2" opacity="0.7"/><rect x="414" y="83" width="2" height="3" opacity="0.6"/><rect x="403" y="83" width="2" height="4" opacity="0.55"/><rect x="400" y="80" width="2" height="4" opacity="0.5"/><rect x="416" y="79" width="5" height="2" opacity="0.95"/><rect x="416" y="81" width="5" height="2" opacity="0.6"/><rect x="417" y="78" width="4" height="1" opacity="0.4"/><rect x="419" y="83" width="2" height="3" opacity="0.45"/></g>
<path d="M420.5 40V77" stroke="#4a4a00" stroke-width="1" shape-rendering="crispEdges"/>
<g stroke="#ffff00" stroke-width="1" shape-rendering="crispEdges" fill="none">
<path opacity="0.3" d="M430.5 18V21M442.5 18V21M452.5 18V21M453.5 18V21M455.5 18V21M458.5 18V21M462.5 18V21M476.5 18V21M508.5 18V21M520.5 18V21M527.5 18V21M530.5 18V21M533.5 18V21M535.5 18V21M540.5 18V21M543.5 18V21M544.5 18V21M560.5 18V21M561.5 18V21M569.5 18V21M574.5 18V21M584.5 18V21M588.5 18V21M594.5 18V21M597.5 18V21M598.5 18V21M600.5 18V21M605.5 18V21M616.5 18V21M632.5 18V21M635.5 18V21M641.5 18V21M644.5 18V21M653.5 18V21M658.5 18V21M661.5 18V21M662.5 18V21M673.5 18V21M678.5 18V21M687.5 18V21M688.5 18V21M690.5 18V21M692.5 18V21M695.5 18V21M696.5 18V21M705.5 18V21M708.5 18V21M717.5 18V21M732.5 18V21M741.5 18V21M748.5 18V21M750.5 18V21M753.5 18V21M757.5 18V21M760.5 18V21M762.5 18V21M764.5 18V21M765.5 18V21M775.5 18V21M781.5 18V21M784.5 18V21M785.5 18V21M791.5 18V21M797.5 18V21M799.5 18V21M808.5 18V21M821.5 18V21M827.5 18V21M831.5 18V21M839.5 18V21M842.5 18V21M864.5 18V21M865.5 18V21M874.5 18V21M875.5 18V21M883.5 18V21M891.5 18V21M899.5 18V21M900.5 18V21M926.5 18V21M927.5 18V21M937.5 18V21M956.5 18V21M957.5 18V21M958.5 18V21M960.5 18V21M1001.5 18V21M1007.5 18V21M1012.5 18V21M1013.5 18V21"/>
<path opacity="0.35" d="M424.5 18V21M431.5 18V21M433.5 18V21M439.5 18V21M447.5 18V21M451.5 18V21M460.5 18V21M465.5 18V21M466.5 18V21M468.5 18V21M470.5 18V21M475.5 18V21M479.5 18V21M481.5 18V21M483.5 18V21M493.5 18V21M496.5 18V21M498.5 18V21M521.5 18V21M526.5 18V21M537.5 18V21M556.5 18V21M565.5 18V21M570.5 18V21M580.5 18V21M599.5 18V21M604.5 18V21M606.5 18V21M609.5 18V21M612.5 18V21M624.5 18V21M626.5 18V21M631.5 18V21M649.5 18V21M650.5 18V21M652.5 18V21M659.5 18V21M665.5 18V21M668.5 18V21M674.5 18V21M677.5 18V21M680.5 18V21M682.5 18V21M683.5 18V21M686.5 18V21M699.5 18V21M706.5 18V21M709.5 18V21M719.5 18V21M728.5 18V21M735.5 18V21M736.5 18V21M738.5 18V21M742.5 18V21M751.5 18V21M755.5 18V21M767.5 18V21M776.5 18V21M792.5 18V21M814.5 18V21M823.5 18V21M824.5 18V21M826.5 18V21M834.5 18V21M838.5 18V21M850.5 18V21M853.5 18V21M855.5 18V21M861.5 18V21M867.5 18V21M868.5 18V21M878.5 18V21M881.5 18V21M882.5 18V21M888.5 18V21M889.5 18V21M895.5 18V21M903.5 18V21M908.5 18V21M909.5 18V21M911.5 18V21M914.5 18V21M915.5 18V21M917.5 18V21M918.5 18V21M921.5 18V21M923.5 18V21M933.5 18V21M934.5 18V21M946.5 18V21M953.5 18V21M961.5 18V21M984.5 18V21M985.5 18V21M987.5 18V21M993.5 18V21M994.5 18V21M998.5 18V21M1006.5 18V21M1009.5 18V21M1018.5 18V21"/>
<path opacity="0.4" d="M426.5 18V21M432.5 18V21M443.5 18V21M446.5 18V21M450.5 18V21M454.5 18V21M456.5 18V21M464.5 18V21M469.5 18V21M471.5 18V21M472.5 18V21M473.5 18V21M474.5 18V21M477.5 18V21M480.5 18V21M484.5 18V21M485.5 18V21M486.5 18V21M487.5 18V21M488.5 18V21M495.5 18V21M497.5 18V21M499.5 18V21M501.5 18V21M505.5 18V21M507.5 18V21M512.5 18V21M515.5 18V21M516.5 18V21M517.5 18V21M518.5 18V21M519.5 18V21M523.5 18V21M525.5 18V21M529.5 18V21M542.5 18V21M554.5 18V21M558.5 18V21M559.5 18V21M562.5 18V21M563.5 18V21M564.5 18V21M566.5 18V21M568.5 18V21M571.5 18V21M572.5 18V21M577.5 18V21M581.5 18V21M585.5 18V21M586.5 18V21M589.5 18V21M591.5 18V21M593.5 18V21M608.5 18V21M615.5 18V21M617.5 18V21M619.5 18V21M622.5 18V21M625.5 18V21M628.5 18V21M634.5 18V21M639.5 18V21M640.5 18V21M643.5 18V21M645.5 18V21M648.5 18V21M651.5 18V21M657.5 18V21M667.5 18V21M669.5 18V21M670.5 18V21M672.5 18V21M676.5 18V21M679.5 18V21M684.5 18V21M691.5 18V21M694.5 18V21M700.5 18V21M702.5 18V21M703.5 18V21M710.5 18V21M711.5 18V21M713.5 18V21M718.5 18V21M722.5 18V21M723.5 18V21M724.5 18V21M727.5 18V21M729.5 18V21M731.5 18V21M733.5 18V21M737.5 18V21M744.5 18V21M746.5 18V21M747.5 18V21M754.5 18V21M756.5 18V21M759.5 18V21M761.5 18V21M763.5 18V21M768.5 18V21M769.5 18V21M770.5 18V21M772.5 18V21M774.5 18V21M778.5 18V21M783.5 18V21M786.5 18V21M788.5 18V21M789.5 18V21M793.5 18V21M795.5 18V21M798.5 18V21M801.5 18V21M803.5 18V21M804.5 18V21M806.5 18V21M809.5 18V21M810.5 18V21M815.5 18V21M816.5 18V21M817.5 18V21M819.5 18V21M825.5 18V21M830.5 18V21M833.5 18V21M835.5 18V21M837.5 18V21M844.5 18V21M847.5 18V21M848.5 18V21M854.5 18V21M856.5 18V21M857.5 18V21M859.5 18V21M860.5 18V21M862.5 18V21M863.5 18V21M870.5 18V21M873.5 18V21M879.5 18V21M887.5 18V21M892.5 18V21M894.5 18V21M901.5 18V21M904.5 18V21M907.5 18V21M910.5 18V21M912.5 18V21M913.5 18V21M920.5 18V21M928.5 18V21M929.5 18V21M932.5 18V21M935.5 18V21M938.5 18V21M942.5 18V21M943.5 18V21M947.5 18V21M948.5 18V21M949.5 18V21M950.5 18V21M951.5 18V21M952.5 18V21M954.5 18V21M959.5 18V21M965.5 18V21M966.5 18V21M967.5 18V21M969.5 18V21M970.5 18V21M971.5 18V21M975.5 18V21M977.5 18V21M978.5 18V21M979.5 18V21M980.5 18V21M981.5 18V21M983.5 18V21M992.5 18V21M996.5 18V21M1003.5 18V21M1005.5 18V21M1008.5 18V21M1010.5 18V21M1011.5 18V21M1015.5 18V21M1017.5 18V21M1019.5 18V21M1020.5 18V21"/>
<path opacity="0.45" d="M425.5 18V21M438.5 18V21M448.5 18V21M449.5 18V21M457.5 18V21M459.5 18V21M461.5 18V21M492.5 18V21M494.5 18V21M506.5 18V21M510.5 18V21M511.5 18V21M524.5 18V21M528.5 18V21M531.5 18V21M532.5 18V21M539.5 18V21M545.5 18V21M546.5 18V21M555.5 18V21M557.5 18V21M587.5 18V21M590.5 18V21M592.5 18V21M601.5 18V21M603.5 18V21M611.5 18V21M613.5 18V21M614.5 18V21M618.5 18V21M630.5 18V21M633.5 18V21M637.5 18V21M660.5 18V21M663.5 18V21M666.5 18V21M681.5 18V21M685.5 18V21M689.5 18V21M697.5 18V21M701.5 18V21M704.5 18V21M707.5 18V21M720.5 18V21M721.5 18V21M726.5 18V21M730.5 18V21M743.5 18V21M745.5 18V21M771.5 18V21M773.5 18V21M782.5 18V21M790.5 18V21M802.5 18V21M805.5 18V21M811.5 18V21M818.5 18V21M822.5 18V21M829.5 18V21M832.5 18V21M836.5 18V21M841.5 18V21M845.5 18V21M846.5 18V21M849.5 18V21M852.5 18V21M866.5 18V21M869.5 18V21M877.5 18V21M884.5 18V21M893.5 18V21M896.5 18V21M906.5 18V21M919.5 18V21M922.5 18V21M936.5 18V21M939.5 18V21M940.5 18V21M941.5 18V21M944.5 18V21M945.5 18V21M955.5 18V21M962.5 18V21M972.5 18V21M976.5 18V21M988.5 18V21M989.5 18V21M991.5 18V21M997.5 18V21M1002.5 18V21M1004.5 18V21"/>
<path opacity="0.5" d="M444.5 18V21M445.5 18V21M463.5 18V21M467.5 18V21M478.5 18V21M482.5 18V21M489.5 18V21M490.5 18V21M491.5 18V21M500.5 18V21M502.5 18V21M503.5 18V21M504.5 18V21M509.5 18V21M513.5 18V21M514.5 18V21M522.5 18V21M534.5 18V21M536.5 18V21M538.5 18V21M541.5 18V21M547.5 18V21M567.5 18V21M573.5 18V21M575.5 18V21M576.5 18V21M578.5 18V21M579.5 18V21M582.5 18V21M583.5 18V21M595.5 18V21M596.5 18V21M602.5 18V21M607.5 18V21M610.5 18V21M620.5 18V21M621.5 18V21M623.5 18V21M627.5 18V21M629.5 18V21M636.5 18V21M638.5 18V21M642.5 18V21M646.5 18V21M647.5 18V21M654.5 18V21M655.5 18V21M656.5 18V21M664.5 18V21M671.5 18V21M675.5 18V21M693.5 18V21M698.5 18V21M712.5 18V21M714.5 18V21M715.5 18V21M716.5 18V21M725.5 18V21M734.5 18V21M739.5 18V21M740.5 18V21M749.5 18V21M752.5 18V21M758.5 18V21M766.5 18V21M777.5 18V21M779.5 18V21M780.5 18V21M787.5 18V21M794.5 18V21M796.5 18V21M800.5 18V21M807.5 18V21M812.5 18V21M813.5 18V21M820.5 18V21M828.5 18V21M840.5 18V21M843.5 18V21M851.5 18V21M858.5 18V21M871.5 18V21M872.5 18V21M876.5 18V21M880.5 18V21M885.5 18V21M886.5 18V21M890.5 18V21M897.5 18V21M898.5 18V21M902.5 18V21M905.5 18V21M916.5 18V21M924.5 18V21M925.5 18V21M930.5 18V21M931.5 18V21M963.5 18V21M964.5 18V21M968.5 18V21M973.5 18V21M974.5 18V21M982.5 18V21M986.5 18V21M990.5 18V21M995.5 18V21M999.5 18V21M1000.5 18V21M1014.5 18V21M1016.5 18V21"/>
<path opacity="1.0" d="M424.5 17V18M425.5 17V18M426.5 17V18M430.5 17V18M431.5 17V18M432.5 17V18M433.5 17V18M438.5 17V18M439.5 17V18M442.5 17V18M443.5 17V18M444.5 17V18M445.5 17V18M446.5 17V18M447.5 17V18M448.5 17V18M449.5 17V18M450.5 17V18M451.5 17V18M452.5 17V18M453.5 17V18M454.5 17V18M455.5 17V18M456.5 17V18M457.5 17V18M458.5 17V18M459.5 17V18M460.5 17V18M461.5 17V18M462.5 17V18M463.5 17V18M464.5 17V18M465.5 17V18M466.5 17V18M467.5 17V18M468.5 17V18M469.5 17V18M470.5 17V18M471.5 17V18M472.5 17V18M473.5 17V18M474.5 17V18M475.5 17V18M476.5 17V18M477.5 17V18M478.5 17V18M479.5 17V18M480.5 17V18M481.5 17V18M482.5 17V18M483.5 17V18M484.5 17V18M485.5 17V18M486.5 17V18M487.5 17V18M488.5 17V18M489.5 17V18M490.5 17V18M491.5 17V18M492.5 17V18M493.5 17V18M494.5 17V18M495.5 17V18M496.5 17V18M497.5 17V18M498.5 17V18M499.5 17V18M500.5 17V18M501.5 17V18M502.5 17V18M503.5 17V18M504.5 17V18M505.5 17V18M506.5 17V18M507.5 17V18M508.5 17V18M509.5 17V18M510.5 17V18M511.5 17V18M512.5 17V18M513.5 17V18M514.5 17V18M515.5 17V18M516.5 17V18M517.5 17V18M518.5 17V18M519.5 17V18M520.5 17V18M521.5 17V18M522.5 17V18M523.5 17V18M524.5 17V18M525.5 17V18M526.5 17V18M527.5 17V18M528.5 17V18M529.5 17V18M530.5 17V18M531.5 17V18M532.5 17V18M533.5 17V18M534.5 17V18M535.5 17V18M536.5 17V18M537.5 17V18M538.5 17V18M539.5 17V18M540.5 17V18M541.5 17V18M542.5 17V18M543.5 17V18M544.5 17V18M545.5 17V18M546.5 17V18M547.5 17V18M554.5 17V18M555.5 17V18M556.5 17V18M557.5 17V18M558.5 17V18M559.5 17V18M560.5 17V18M561.5 17V18M562.5 17V18M563.5 17V18M564.5 17V18M565.5 17V18M566.5 17V18M567.5 17V18M568.5 17V18M569.5 17V18M570.5 17V18M571.5 17V18M572.5 17V18M573.5 17V18M574.5 17V18M575.5 17V18M576.5 17V18M577.5 17V18M578.5 17V18M579.5 17V18M580.5 17V18M581.5 17V18M582.5 17V18M583.5 17V18M584.5 17V18M585.5 17V18M586.5 17V18M587.5 17V18M588.5 17V18M589.5 17V18M590.5 17V18M591.5 17V18M592.5 17V18M593.5 17V18M594.5 17V18M595.5 17V18M596.5 17V18M597.5 17V18M598.5 17V18M599.5 17V18M600.5 17V18M601.5 17V18M602.5 17V18M603.5 17V18M604.5 17V18M605.5 17V18M606.5 17V18M607.5 17V18M608.5 17V18M609.5 17V18M610.5 17V18M611.5 17V18M612.5 17V18M613.5 17V18M614.5 17V18M615.5 17V18M616.5 17V18M617.5 17V18M618.5 17V18M619.5 17V18M620.5 17V18M621.5 17V18M622.5 17V18M623.5 17V18M624.5 17V18M625.5 17V18M626.5 17V18M627.5 17V18M628.5 17V18M629.5 17V18M630.5 17V18M631.5 17V18M632.5 17V18M633.5 17V18M634.5 17V18M635.5 17V18M636.5 17V18M637.5 17V18M638.5 17V18M639.5 17V18M640.5 17V18M641.5 17V18M642.5 17V18M643.5 17V18M644.5 17V18M645.5 17V18M646.5 17V18M647.5 17V18M648.5 17V18M649.5 17V18M650.5 17V18M651.5 17V18M652.5 17V18M653.5 17V18M654.5 17V18M655.5 17V18M656.5 17V18M657.5 17V18M658.5 17V18M659.5 17V18M660.5 17V18M661.5 17V18M662.5 17V18M663.5 17V18M664.5 17V18M665.5 17V18M666.5 17V18M667.5 17V18M668.5 17V18M669.5 17V18M670.5 17V18M671.5 17V18M672.5 17V18M673.5 17V18M674.5 17V18M675.5 17V18M676.5 17V18M677.5 17V18M678.5 17V18M679.5 17V18M680.5 17V18M681.5 17V18M682.5 17V18M683.5 17V18M684.5 17V18M685.5 17V18M686.5 17V18M687.5 17V18M688.5 17V18M689.5 17V18M690.5 17V18M691.5 17V18M692.5 17V18M693.5 17V18M694.5 17V18M695.5 17V18M696.5 17V18M697.5 17V18M698.5 17V18M699.5 17V18M700.5 17V18M701.5 17V18M702.5 17V18M703.5 17V18M704.5 17V18M705.5 17V18M706.5 17V18M707.5 17V18M708.5 17V18M709.5 17V18M710.5 17V18M711.5 17V18M712.5 17V18M713.5 17V18M714.5 17V18M715.5 17V18M716.5 17V18M717.5 17V18M718.5 17V18M719.5 17V18M720.5 17V18M721.5 17V18M722.5 17V18M723.5 17V18M724.5 17V18M725.5 17V18M726.5 17V18M727.5 17V18M728.5 17V18M729.5 17V18M730.5 17V18M731.5 17V18M732.5 17V18M733.5 17V18M734.5 17V18M735.5 17V18M736.5 17V18M737.5 17V18M738.5 17V18M739.5 17V18M740.5 17V18M741.5 17V18M742.5 17V18M743.5 17V18M744.5 17V18M745.5 17V18M746.5 17V18M747.5 17V18M748.5 17V18M749.5 17V18M750.5 17V18M751.5 17V18M752.5 17V18M753.5 17V18M754.5 17V18M755.5 17V18M756.5 17V18M757.5 17V18M758.5 17V18M759.5 17V18M760.5 17V18M761.5 17V18M762.5 17V18M763.5 17V18M764.5 17V18M765.5 17V18M766.5 17V18M767.5 17V18M768.5 17V18M769.5 17V18M770.5 17V18M771.5 17V18M772.5 17V18M773.5 17V18M774.5 17V18M775.5 17V18M776.5 17V18M777.5 17V18M778.5 17V18M779.5 17V18M780.5 17V18M781.5 17V18M782.5 17V18M783.5 17V18M784.5 17V18M785.5 17V18M786.5 17V18M787.5 17V18M788.5 17V18M789.5 17V18M790.5 17V18M791.5 17V18M792.5 17V18M793.5 17V18M794.5 17V18M795.5 17V18M796.5 17V18M797.5 17V18M798.5 17V18M799.5 17V18M800.5 17V18M801.5 17V18M802.5 17V18M803.5 17V18M804.5 17V18M805.5 17V18M806.5 17V18M807.5 17V18M808.5 17V18M809.5 17V18M810.5 17V18M811.5 17V18M812.5 17V18M813.5 17V18M814.5 17V18M815.5 17V18M816.5 17V18M817.5 17V18M818.5 17V18M819.5 17V18M820.5 17V18M821.5 17V18M822.5 17V18M823.5 17V18M824.5 17V18M825.5 17V18M826.5 17V18M827.5 17V18M828.5 17V18M829.5 17V18M830.5 17V18M831.5 17V18M832.5 17V18M833.5 17V18M834.5 17V18M835.5 17V18M836.5 17V18M837.5 17V18M838.5 17V18M839.5 17V18M840.5 17V18M841.5 17V18M842.5 17V18M843.5 17V18M844.5 17V18M845.5 17V18M846.5 17V18M847.5 17V18M848.5 17V18M849.5 17V18M850.5 17V18M851.5 17V18M852.5 17V18M853.5 17V18M854.5 17V18M855.5 17V18M856.5 17V18M857.5 17V18M858.5 17V18M859.5 17V18M860.5 17V18M861.5 17V18M862.5 17V18M863.5 17V18M864.5 17V18M865.5 17V18M866.5 17V18M867.5 17V18M868.5 17V18M869.5 17V18M870.5 17V18M871.5 17V18M872.5 17V18M873.5 17V18M874.5 17V18M875.5 17V18M876.5 17V18M877.5 17V18M878.5 17V18M879.5 17V18M880.5 17V18M881.5 17V18M882.5 17V18M883.5 17V18M884.5 17V18M885.5 17V18M886.5 17V18M887.5 17V18M888.5 17V18M889.5 17V18M890.5 17V18M891.5 17V18M892.5 17V18M893.5 17V18M894.5 17V18M895.5 17V18M896.5 17V18M897.5 17V18M898.5 17V18M899.5 17V18M900.5 17V18M901.5 17V18M902.5 17V18M903.5 17V18M904.5 17V18M905.5 17V18M906.5 17V18M907.5 17V18M908.5 17V18M909.5 17V18M910.5 17V18M911.5 17V18M912.5 17V18M913.5 17V18M914.5 17V18M915.5 17V18M916.5 17V18M917.5 17V18M918.5 17V18M919.5 17V18M920.5 17V18M921.5 17V18M922.5 17V18M923.5 17V18M924.5 17V18M925.5 17V18M926.5 17V18M927.5 17V18M928.5 17V18M929.5 17V18M930.5 17V18M931.5 17V18M932.5 17V18M933.5 17V18M934.5 17V18M935.5 17V18M936.5 17V18M937.5 17V18M938.5 17V18M939.5 17V18M940.5 17V18M941.5 17V18M942.5 17V18M943.5 17V18M944.5 17V18M945.5 17V18M946.5 17V18M947.5 17V18M948.5 17V18M949.5 17V18M950.5 17V18M951.5 17V18M952.5 17V18M953.5 17V18M954.5 17V18M955.5 17V18M956.5 17V18M957.5 17V18M958.5 17V18M959.5 17V18M960.5 17V18M961.5 17V18M962.5 17V18M963.5 17V18M964.5 17V18M965.5 17V18M966.5 17V18M967.5 17V18M968.5 17V18M969.5 17V18M970.5 17V18M971.5 17V18M972.5 17V18M973.5 17V18M974.5 17V18M975.5 17V18M976.5 17V18M977.5 17V18M978.5 17V18M979.5 17V18M980.5 17V18M981.5 17V18M982.5 17V18M983.5 17V18M984.5 17V18M985.5 17V18M986.5 17V18M987.5 17V18M988.5 17V18M989.5 17V18M990.5 17V18M991.5 17V18M992.5 17V18M993.5 17V18M994.5 17V18M995.5 17V18M996.5 17V18M997.5 17V18M998.5 17V18M999.5 17V18M1000.5 17V18M1001.5 17V18M1002.5 17V18M1003.5 17V18M1004.5 17V18M1005.5 17V18M1006.5 17V18M1007.5 17V18M1008.5 17V18M1009.5 17V18M1010.5 17V18M1011.5 17V18M1012.5 17V18M1013.5 17V18M1014.5 17V18M1015.5 17V18M1016.5 17V18M1017.5 17V18M1018.5 17V18M1019.5 17V18M1020.5 17V18"/>
</g>
<g stroke="#ffff00" stroke-width="1" shape-rendering="crispEdges" opacity="0.6"><path d="M425.5 17V24M426.5 17V22M431.5 17V21M432.5 17V20M439.5 21V26M445.5 21V23M534.5 21V31M535.5 24V31M533.5 17V25M541.5 21V23M553.5 21V25M554.5 21V24"/></g>
<g stroke="#00e8e8" stroke-width="1" shape-rendering="crispEdges" fill="none">
<path opacity="0.2" d="M26.5 233V235M27.5 239V242M29.5 239V242M34.5 233V235M37.5 233V235M41.5 239V242M47.5 233V235M49.5 233V235M53.5 233V235M62.5 239V242M63.5 239V242M67.5 233V235M69.5 239V242M71.5 233V235M76.5 233V235M80.5 233V235M82.5 239V242M85.5 239V242M87.5 233V235M87.5 239V242M94.5 239V242M100.5 233V235M102.5 233V235M102.5 239V242M103.5 239V242M106.5 239V242M107.5 239V242M112.5 239V242M118.5 233V235M119.5 233V235M120.5 233V235M121.5 239V242M122.5 233V235M131.5 239V242M133.5 233V235M134.5 239V242M135.5 239V242M137.5 239V242M142.5 233V235M143.5 233V235M144.5 233V235M145.5 239V242M151.5 233V235M158.5 239V242M165.5 233V235M166.5 239V242M167.5 239V242M172.5 239V242M178.5 233V235M179.5 239V242M180.5 233V235M182.5 239V242M183.5 233V235M189.5 233V235M191.5 239V242M198.5 239V242M199.5 239V242M214.5 233V235M218.5 233V235M219.5 233V235M221.5 239V242M226.5 233V235M229.5 233V235M239.5 233V235M240.5 233V235M242.5 239V242M243.5 239V242M249.5 239V242M253.5 233V235M262.5 233V235M262.5 239V242M267.5 233V235M268.5 233V235M271.5 239V242M272.5 233V235M277.5 233V235M277.5 239V242M283.5 233V235M287.5 233V235M288.5 233V235M289.5 239V242M290.5 233V235M295.5 239V242M299.5 239V242M300.5 233V235M302.5 233V235M302.5 239V242M312.5 233V235M316.5 233V235M332.5 239V242M333.5 233V235M347.5 233V235M358.5 239V242M362.5 233V235M363.5 239V242M365.5 239V242M376.5 233V235M380.5 233V235M392.5 239V242M395.5 233V235M396.5 239V242M399.5 233V235M403.5 239V242M406.5 233V235M421.5 233V235M425.5 233V235M431.5 233V235M438.5 233V235M438.5 239V242M447.5 233V235M449.5 233V235M451.5 239V242M452.5 239V242M492.5 276V277M495.5 277V280M496.5 270V272M498.5 270V272M501.5 271V273M502.5 272V274M519.5 265V266M523.5 254V255M525.5 250V251M526.5 254V257M529.5 243V245M530.5 249V252M534.5 249V252M536.5 244V246M538.5 245V247M543.5 242V244M546.5 241V243M551.5 245V248M555.5 246V249M556.5 240V242M556.5 246V249M558.5 240V242M562.5 241V243M566.5 246V249M571.5 237V239M573.5 237V239M575.5 237V239M582.5 237V239M585.5 237V239M588.5 243V246M592.5 243V246M593.5 237V239M593.5 243V246M597.5 238V240M598.5 239V241M604.5 244V247M605.5 243V246M609.5 243V246M619.5 236V238M625.5 235V237M635.5 234V236M638.5 240V243M646.5 240V243M652.5 240V243M655.5 234V236M657.5 234V236M660.5 234V236M664.5 240V243M669.5 240V243M671.5 234V236M671.5 240V243M673.5 240V243M674.5 234V236M675.5 234V236M676.5 240V243M678.5 240V243M679.5 240V243M681.5 240V243M686.5 240V243M722.5 234V236M724.5 234V236M725.5 240V243M728.5 234V236M735.5 234V236M735.5 240V243M737.5 234V236M739.5 240V243M741.5 234V236M743.5 234V236M749.5 240V243M753.5 240V243M754.5 234V236M756.5 234V236M759.5 240V243M763.5 234V236M770.5 234V236M775.5 234V236M776.5 240V243M781.5 234V236M792.5 234V236M794.5 240V243M797.5 240V243M800.5 240V243M802.5 234V236M805.5 240V243M807.5 234V236M807.5 240V243M809.5 234V236M811.5 234V236M813.5 234V236M813.5 240V243M822.5 234V236M823.5 240V243M831.5 305V306M832.5 311V312M834.5 312V313M846.5 307V308M855.5 267V268M855.5 272V273M861.5 259V260M862.5 251V253M864.5 250V251M865.5 247V249M866.5 246V248M869.5 244V246M871.5 242V244M877.5 239V241M881.5 238V240M883.5 244V247M885.5 244V247M886.5 244V247M887.5 237V239M893.5 236V238M895.5 236V238M896.5 242V245M898.5 235V237M900.5 235V237M900.5 241V244M901.5 235V237M903.5 241V244M904.5 240V243M906.5 240V243M909.5 234V236M915.5 240V243M917.5 234V236M919.5 234V236M921.5 234V236M922.5 234V236M928.5 234V236M929.5 240V243M930.5 240V243M931.5 240V243M937.5 240V243M941.5 240V243M942.5 234V236M943.5 234V236M943.5 240V243M944.5 240V243M947.5 234V236M950.5 234V236M951.5 240V243M953.5 234V236M956.5 234V236M959.5 234V236M962.5 234V236M962.5 240V243M965.5 240V243M966.5 240V243M967.5 240V243M972.5 234V236M974.5 240V243M977.5 234V236M978.5 240V243M979.5 234V236M981.5 240V243M982.5 240V243M983.5 234V236M983.5 240V243M984.5 234V236M988.5 234V236M988.5 240V243M991.5 240V243M993.5 240V243M994.5 240V243M995.5 234V236M997.5 234V236M998.5 234V236M999.5 234V236M1000.5 234V236M1004.5 240V243M1009.5 234V236M1010.5 234V236M1016.5 240V243"/>
<path opacity="0.3" d="M23.5 233V235M24.5 233V235M25.5 233V235M26.5 239V242M31.5 233V235M34.5 239V242M37.5 239V242M39.5 233V235M42.5 239V242M43.5 233V235M43.5 239V242M43.5 231V233M47.5 239V242M48.5 231V233M56.5 233V235M56.5 242V244M58.5 233V235M59.5 239V242M59.5 231V233M60.5 239V242M66.5 239V242M69.5 233V235M73.5 231V233M75.5 242V244M76.5 239V242M77.5 233V235M81.5 239V242M85.5 233V235M99.5 233V235M101.5 233V235M101.5 239V242M103.5 233V235M107.5 233V235M113.5 239V242M113.5 231V233M118.5 239V242M120.5 239V242M123.5 239V242M124.5 233V235M124.5 239V242M125.5 233V235M130.5 233V235M130.5 239V242M135.5 233V235M136.5 239V242M137.5 233V235M138.5 239V242M141.5 242V244M144.5 239V242M146.5 239V242M147.5 233V235M153.5 239V242M155.5 233V235M156.5 239V242M158.5 233V235M159.5 233V235M162.5 233V235M164.5 239V242M166.5 233V235M169.5 233V235M173.5 239V242M173.5 231V233M177.5 239V242M179.5 233V235M182.5 233V235M184.5 239V242M188.5 233V235M189.5 239V242M193.5 233V235M194.5 239V242M196.5 242V244M201.5 233V235M207.5 233V235M209.5 233V235M212.5 239V242M213.5 233V235M216.5 233V235M218.5 239V242M223.5 239V242M224.5 239V242M227.5 233V235M228.5 233V235M234.5 233V235M237.5 242V244M248.5 233V235M248.5 239V242M253.5 239V242M253.5 231V233M254.5 239V242M258.5 233V235M259.5 233V235M265.5 231V233M268.5 239V242M271.5 233V235M272.5 239V242M275.5 239V242M276.5 233V235M276.5 239V242M279.5 233V235M282.5 242V244M283.5 239V242M285.5 242V244M292.5 233V235M296.5 239V242M299.5 233V235M302.5 242V244M304.5 239V242M306.5 233V235M306.5 239V242M307.5 239V242M312.5 242V244M313.5 242V244M315.5 233V235M317.5 239V242M318.5 233V235M318.5 239V242M319.5 233V235M320.5 233V235M320.5 239V242M322.5 231V233M324.5 239V242M325.5 239V242M326.5 233V235M330.5 239V242M333.5 239V242M337.5 233V235M337.5 239V242M339.5 233V235M342.5 239V242M344.5 239V242M344.5 242V244M346.5 233V235M348.5 233V235M352.5 231V233M357.5 233V235M358.5 233V235M360.5 239V242M361.5 239V242M371.5 239V242M373.5 233V235M373.5 239V242M374.5 239V242M376.5 239V242M379.5 233V235M379.5 239V242M381.5 239V242M383.5 233V235M384.5 239V242M387.5 239V242M389.5 233V235M390.5 239V242M392.5 233V235M393.5 239V242M400.5 233V235M401.5 233V235M401.5 239V242M402.5 239V242M409.5 233V235M413.5 239V242M414.5 233V235M416.5 233V235M420.5 233V235M428.5 233V235M429.5 242V244M431.5 231V233M432.5 239V242M433.5 239V242M434.5 233V235M435.5 239V242M436.5 239V242M437.5 239V242M439.5 233V235M440.5 239V242M442.5 233V235M445.5 239V242M446.5 239V242M450.5 233V235M452.5 233V235M452.5 242V244M453.5 233V235M454.5 239V242M456.5 233V235M456.5 231V233M457.5 239V242M461.5 236V237M461.5 247V248M462.5 244V245M462.5 254V255M468.5 462V463M468.5 475V476M469.5 452V453M469.5 465V466M470.5 439V440M470.5 455V456M471.5 425V426M471.5 442V443M472.5 413V414M472.5 428V429M473.5 402V403M473.5 416V417M474.5 391V392M474.5 405V406M475.5 382V383M475.5 394V395M476.5 373V374M476.5 385V386M477.5 362V363M477.5 376V377M478.5 351V352M478.5 365V366M479.5 340V341M479.5 354V355M480.5 333V334M480.5 343V344M481.5 326V327M481.5 336V337M482.5 319V320M482.5 329V330M483.5 313V314M483.5 322V323M484.5 307V308M484.5 316V317M485.5 301V302M485.5 310V311M486.5 295V296M486.5 304V305M487.5 291V292M487.5 298V299M489.5 284V285M489.5 291V292M490.5 288V289M491.5 279V280M498.5 276V279M499.5 270V272M499.5 277V280M501.5 278V281M507.5 264V266M508.5 271V274M509.5 272V275M510.5 270V271M511.5 269V272M514.5 268V269M520.5 262V263M523.5 260V261M527.5 245V247M531.5 252V254M532.5 249V252M533.5 242V244M533.5 248V251M535.5 243V245M536.5 251V254M539.5 254V256M545.5 247V250M545.5 250V252M547.5 238V240M560.5 247V250M564.5 239V241M566.5 239V241M572.5 243V246M573.5 235V237M576.5 243V246M577.5 243V246M579.5 237V239M579.5 243V246M581.5 237V239M581.5 243V246M581.5 246V248M583.5 243V246M586.5 246V248M587.5 243V246M588.5 237V239M589.5 237V239M590.5 243V246M594.5 237V239M596.5 238V240M596.5 244V247M601.5 245V248M602.5 245V248M608.5 237V239M608.5 235V237M609.5 246V248M612.5 246V248M613.5 237V239M613.5 243V246M614.5 236V238M614.5 243V246M615.5 236V238M619.5 242V245M620.5 242V245M621.5 234V236M624.5 242V245M629.5 241V244M636.5 240V243M640.5 234V236M642.5 240V243M643.5 234V236M643.5 240V243M646.5 234V236M648.5 240V243M650.5 234V236M651.5 234V236M654.5 234V236M655.5 240V243M656.5 234V236M656.5 243V245M658.5 234V236M658.5 240V243M662.5 234V236M666.5 234V236M666.5 240V243M667.5 240V243M668.5 240V243M668.5 232V234M675.5 240V243M678.5 234V236M682.5 240V243M685.5 234V236M687.5 234V236M689.5 240V243M689.5 232V234M690.5 234V236M691.5 234V236M696.5 240V243M696.5 232V234M706.5 234V236M715.5 234V236M720.5 240V243M721.5 240V243M723.5 240V243M731.5 240V243M732.5 243V245M736.5 240V243M737.5 240V243M738.5 234V236M738.5 240V243M739.5 234V236M739.5 243V245M743.5 240V243M745.5 240V243M748.5 243V245M749.5 234V236M750.5 240V243M761.5 234V236M765.5 232V234M775.5 240V243M776.5 234V236M778.5 240V243M780.5 234V236M781.5 243V245M782.5 234V236M787.5 240V243M789.5 234V236M792.5 240V243M795.5 240V243M797.5 234V236M800.5 232V234M801.5 243V245M805.5 234V236M806.5 240V243M810.5 234V236M811.5 240V243M815.5 234V236M816.5 234V236M817.5 234V236M817.5 240V243M818.5 234V236M820.5 234V236M821.5 234V236M822.5 232V234M823.5 234V236M824.5 234V236M833.5 307V308M833.5 314V315M835.5 314V315M835.5 332V333M836.5 329V330M836.5 350V351M837.5 338V339M837.5 350V351M838.5 330V331M838.5 341V342M839.5 326V327M839.5 333V334M840.5 322V323M840.5 329V330M841.5 318V319M841.5 325V326M842.5 314V315M842.5 321V322M843.5 318V319M844.5 307V308M844.5 314V315M845.5 303V304M845.5 310V311M847.5 296V297M847.5 303V304M848.5 292V293M848.5 299V300M849.5 288V289M849.5 295V296M850.5 284V285M850.5 291V292M851.5 280V281M851.5 287V288M852.5 276V277M852.5 283V284M853.5 272V273M853.5 279V280M854.5 268V269M854.5 275V276M856.5 270V271M857.5 268V269M857.5 260V262M859.5 263V264M859.5 256V258M863.5 250V252M865.5 254V257M867.5 245V247M876.5 245V248M881.5 244V247M882.5 244V247M886.5 237V239M887.5 243V246M888.5 243V246M889.5 237V239M891.5 246V248M892.5 242V245M893.5 242V245M899.5 241V244M901.5 244V246M905.5 234V236M908.5 234V236M908.5 240V243M909.5 240V243M910.5 240V243M912.5 243V245M913.5 240V243M914.5 234V236M923.5 234V236M924.5 234V236M936.5 243V245M937.5 234V236M939.5 234V236M952.5 240V243M958.5 234V236M961.5 240V243M966.5 234V236M970.5 234V236M973.5 240V243M975.5 240V243M980.5 234V236M985.5 240V243M987.5 240V243M998.5 240V243M1001.5 240V243M1002.5 240V243M1005.5 243V245M1008.5 240V243M1012.5 240V243M1013.5 234V236M1014.5 234V236M1015.5 234V236M1018.5 240V243M1018.5 232V234M1020.5 234V236"/>
<path opacity="0.35" d="M21.5 233V235M22.5 239V242M24.5 239V242M28.5 239V242M29.5 233V235M33.5 233V235M39.5 239V242M41.5 233V235M45.5 239V242M46.5 239V242M49.5 239V242M52.5 239V242M54.5 239V242M57.5 239V242M60.5 233V235M64.5 233V235M64.5 239V242M73.5 233V235M74.5 233V235M75.5 233V235M84.5 233V235M84.5 239V242M86.5 239V242M88.5 233V235M88.5 239V242M90.5 233V235M91.5 239V242M97.5 233V235M105.5 239V242M106.5 233V235M108.5 233V235M108.5 239V242M109.5 239V242M110.5 233V235M111.5 233V235M113.5 233V235M115.5 239V242M122.5 239V242M126.5 233V235M126.5 239V242M134.5 233V235M140.5 233V235M141.5 233V235M147.5 239V242M148.5 233V235M149.5 233V235M150.5 239V242M151.5 239V242M154.5 239V242M157.5 233V235M157.5 239V242M164.5 233V235M165.5 239V242M172.5 233V235M183.5 239V242M184.5 233V235M185.5 233V235M186.5 239V242M187.5 239V242M191.5 233V235M193.5 239V242M200.5 239V242M201.5 239V242M202.5 233V235M205.5 239V242M209.5 239V242M217.5 233V235M222.5 239V242M225.5 233V235M225.5 239V242M226.5 239V242M228.5 239V242M230.5 239V242M232.5 233V235M233.5 239V242M235.5 233V235M238.5 239V242M239.5 239V242M241.5 233V235M245.5 239V242M246.5 233V235M246.5 239V242M247.5 239V242M249.5 233V235M255.5 233V235M260.5 233V235M265.5 233V235M265.5 239V242M269.5 239V242M270.5 233V235M273.5 233V235M280.5 239V242M282.5 233V235M285.5 233V235M287.5 239V242M291.5 239V242M292.5 239V242M297.5 239V242M298.5 233V235M308.5 239V242M309.5 233V235M314.5 233V235M317.5 233V235M321.5 233V235M324.5 233V235M327.5 233V235M332.5 233V235M334.5 233V235M335.5 239V242M341.5 233V235M342.5 233V235M344.5 233V235M351.5 233V235M351.5 239V242M355.5 233V235M355.5 239V242M359.5 233V235M360.5 233V235M362.5 239V242M364.5 233V235M365.5 233V235M368.5 233V235M369.5 233V235M378.5 239V242M384.5 233V235M391.5 233V235M391.5 239V242M394.5 233V235M398.5 239V242M399.5 239V242M400.5 239V242M402.5 233V235M407.5 233V235M408.5 233V235M409.5 239V242M410.5 239V242M413.5 233V235M415.5 233V235M416.5 239V242M419.5 233V235M423.5 239V242M424.5 233V235M436.5 233V235M437.5 233V235M453.5 239V242M454.5 233V235M455.5 233V235M467.5 479V480M488.5 289V290M492.5 282V283M493.5 274V275M495.5 270V272M500.5 277V280M502.5 278V281M506.5 271V274M507.5 271V274M510.5 265V266M511.5 262V264M512.5 268V271M513.5 267V270M517.5 268V269M524.5 252V253M525.5 255V256M527.5 252V253M528.5 251V254M529.5 250V253M534.5 242V244M540.5 243V245M548.5 239V241M548.5 246V249M550.5 245V248M552.5 239V241M555.5 240V242M561.5 247V250M567.5 239V241M569.5 244V247M570.5 244V247M571.5 243V246M580.5 237V239M580.5 243V246M582.5 243V246M585.5 243V246M586.5 237V239M599.5 239V241M612.5 237V239M615.5 242V245M616.5 242V245M622.5 242V245M625.5 242V245M631.5 241V244M632.5 235V237M635.5 241V244M638.5 234V236M639.5 240V243M644.5 240V243M648.5 234V236M653.5 234V236M659.5 234V236M661.5 240V243M672.5 234V236M672.5 240V243M677.5 234V236M679.5 234V236M680.5 240V243M682.5 234V236M683.5 234V236M688.5 234V236M688.5 240V243M689.5 234V236M690.5 240V243M691.5 240V243M695.5 234V236M696.5 234V236M697.5 234V236M700.5 234V236M702.5 240V243M704.5 234V236M706.5 240V243M709.5 234V236M710.5 234V236M710.5 240V243M713.5 240V243M716.5 240V243M718.5 240V243M719.5 240V243M722.5 240V243M726.5 234V236M727.5 234V236M728.5 240V243M733.5 234V236M736.5 234V236M740.5 240V243M741.5 240V243M742.5 240V243M746.5 234V236M748.5 234V236M751.5 234V236M753.5 234V236M754.5 240V243M758.5 234V236M764.5 234V236M766.5 234V236M767.5 234V236M768.5 240V243M769.5 240V243M772.5 234V236M773.5 240V243M774.5 234V236M777.5 234V236M779.5 240V243M781.5 240V243M783.5 240V243M784.5 234V236M785.5 234V236M786.5 234V236M786.5 240V243M789.5 240V243M793.5 240V243M794.5 234V236M801.5 234V236M801.5 240V243M802.5 240V243M803.5 234V236M815.5 240V243M820.5 240V243M821.5 240V243M822.5 240V243M824.5 240V243M826.5 234V236M857.5 262V263M859.5 258V259M860.5 256V257M863.5 257V260M869.5 251V254M871.5 249V252M872.5 241V243M872.5 248V251M875.5 246V249M888.5 237V239M897.5 235V237M897.5 242V245M901.5 241V244M902.5 241V244M903.5 234V236M912.5 240V243M916.5 240V243M921.5 240V243M924.5 240V243M929.5 234V236M930.5 234V236M932.5 240V243M934.5 240V243M945.5 234V236M947.5 240V243M955.5 240V243M960.5 234V236M961.5 234V236M963.5 234V236M963.5 240V243M969.5 240V243M976.5 234V236M989.5 234V236M990.5 234V236M996.5 234V236M996.5 240V243M1002.5 234V236M1008.5 234V236M1011.5 240V243M1013.5 240V243M1015.5 240V243M1018.5 234V236M1019.5 240V243"/>
<path opacity="0.4" d="M22.5 233V235M28.5 233V235M35.5 239V242M36.5 233V235M38.5 239V242M40.5 239V242M44.5 233V235M44.5 239V242M48.5 233V235M50.5 239V242M51.5 239V242M53.5 239V242M62.5 233V235M63.5 233V235M65.5 233V235M65.5 239V242M68.5 233V235M72.5 233V235M73.5 239V242M75.5 239V242M78.5 233V235M79.5 233V235M79.5 239V242M81.5 233V235M91.5 233V235M95.5 233V235M98.5 233V235M105.5 233V235M109.5 233V235M110.5 239V242M111.5 239V242M112.5 233V235M114.5 233V235M115.5 233V235M116.5 239V242M117.5 239V242M125.5 239V242M127.5 239V242M128.5 233V235M128.5 239V242M131.5 233V235M133.5 239V242M136.5 233V235M141.5 239V242M145.5 233V235M146.5 233V235M152.5 233V235M152.5 239V242M154.5 233V235M156.5 233V235M160.5 233V235M162.5 239V242M163.5 233V235M169.5 239V242M170.5 233V235M171.5 239V242M175.5 233V235M175.5 239V242M177.5 233V235M190.5 233V235M192.5 239V242M195.5 233V235M199.5 233V235M204.5 239V242M205.5 233V235M206.5 233V235M206.5 239V242M212.5 233V235M213.5 239V242M215.5 233V235M217.5 239V242M219.5 239V242M220.5 239V242M223.5 233V235M230.5 233V235M232.5 239V242M237.5 233V235M241.5 239V242M244.5 233V235M244.5 239V242M250.5 233V235M251.5 239V242M252.5 233V235M254.5 233V235M255.5 239V242M258.5 239V242M260.5 239V242M263.5 239V242M264.5 233V235M266.5 233V235M267.5 239V242M270.5 239V242M275.5 233V235M278.5 233V235M281.5 239V242M284.5 239V242M285.5 239V242M286.5 239V242M289.5 233V235M290.5 239V242M293.5 233V235M294.5 233V235M294.5 239V242M296.5 233V235M297.5 233V235M301.5 233V235M303.5 233V235M304.5 233V235M310.5 233V235M313.5 233V235M314.5 239V242M319.5 239V242M321.5 239V242M325.5 233V235M326.5 239V242M329.5 233V235M329.5 239V242M334.5 239V242M338.5 239V242M343.5 239V242M349.5 239V242M352.5 239V242M357.5 239V242M363.5 233V235M364.5 239V242M366.5 233V235M369.5 239V242M370.5 233V235M374.5 233V235M375.5 239V242M377.5 233V235M383.5 239V242M385.5 233V235M386.5 239V242M387.5 233V235M388.5 233V235M404.5 233V235M410.5 233V235M411.5 233V235M412.5 233V235M412.5 239V242M415.5 239V242M418.5 233V235M423.5 233V235M425.5 239V242M427.5 233V235M428.5 239V242M429.5 233V235M431.5 239V242M434.5 239V242M442.5 239V242M443.5 233V235M444.5 233V235M447.5 239V242M448.5 233V235M448.5 239V242M455.5 239V242M459.5 233V235M460.5 235V236M491.5 285V286M494.5 278V281M500.5 271V273M503.5 272V273M504.5 275V276M515.5 263V265M515.5 270V273M516.5 266V267M517.5 273V274M518.5 268V269M518.5 273V274M520.5 268V269M528.5 244V246M531.5 249V252M537.5 245V247M538.5 252V255M539.5 251V254M540.5 250V253M541.5 249V252M543.5 248V251M547.5 247V250M549.5 245V248M552.5 245V248M553.5 239V241M554.5 240V242M557.5 240V242M557.5 246V249M559.5 241V243M564.5 241V243M569.5 238V240M572.5 237V239M589.5 243V246M590.5 237V239M594.5 243V246M595.5 244V247M597.5 245V248M599.5 245V248M600.5 239V241M606.5 243V246M607.5 243V246M609.5 237V239M610.5 237V239M616.5 236V238M617.5 242V245M618.5 242V245M621.5 236V238M623.5 242V245M624.5 236V238M626.5 241V244M627.5 235V237M628.5 235V237M630.5 241V244M632.5 241V244M633.5 235V237M633.5 241V244M634.5 241V244M637.5 240V243M641.5 234V236M641.5 240V243M644.5 234V236M649.5 240V243M650.5 240V243M651.5 240V243M656.5 240V243M657.5 240V243M660.5 240V243M661.5 234V236M662.5 240V243M663.5 234V236M663.5 240V243M665.5 234V236M665.5 240V243M667.5 234V236M668.5 234V236M670.5 234V236M670.5 240V243M676.5 234V236M687.5 240V243M692.5 234V236M693.5 240V243M694.5 240V243M703.5 234V236M704.5 240V243M705.5 240V243M707.5 234V236M709.5 240V243M714.5 234V236M714.5 240V243M716.5 234V236M717.5 240V243M724.5 240V243M729.5 240V243M730.5 240V243M732.5 234V236M732.5 240V243M742.5 234V236M744.5 234V236M744.5 240V243M750.5 234V236M752.5 234V236M755.5 240V243M757.5 240V243M758.5 240V243M759.5 234V236M765.5 240V243M766.5 240V243M772.5 240V243M777.5 240V243M779.5 234V236M784.5 240V243M788.5 234V236M788.5 240V243M790.5 234V236M790.5 240V243M791.5 240V243M796.5 240V243M808.5 234V236M810.5 240V243M812.5 234V236M825.5 240V243M834.5 318V319M856.5 265V266M858.5 260V261M861.5 254V255M866.5 253V256M873.5 241V243M874.5 240V242M874.5 247V250M875.5 239V241M878.5 239V241M878.5 245V248M879.5 245V248M883.5 238V240M884.5 238V240M885.5 238V240M890.5 237V239M891.5 236V238M891.5 243V246M892.5 236V238M894.5 242V245M904.5 234V236M906.5 234V236M907.5 240V243M912.5 234V236M914.5 240V243M915.5 234V236M919.5 240V243M920.5 240V243M927.5 234V236M927.5 240V243M931.5 234V236M932.5 234V236M935.5 234V236M935.5 240V243M939.5 240V243M942.5 240V243M945.5 240V243M946.5 234V236M949.5 240V243M950.5 240V243M953.5 240V243M954.5 234V236M967.5 234V236M971.5 234V236M973.5 234V236M975.5 234V236M977.5 240V243M979.5 240V243M985.5 234V236M989.5 240V243M993.5 234V236M1000.5 240V243M1007.5 234V236M1007.5 240V243M1010.5 240V243M1011.5 234V236M1012.5 234V236M1017.5 234V236M1019.5 234V236"/>
<path opacity="0.45" d="M25.5 239V242M32.5 233V235M32.5 239V242M33.5 239V242M35.5 233V235M36.5 239V242M40.5 233V235M46.5 233V235M51.5 233V235M54.5 233V235M55.5 239V242M57.5 233V235M58.5 239V242M59.5 233V235M61.5 233V235M61.5 239V242M67.5 239V242M68.5 239V242M70.5 239V242M71.5 239V242M72.5 239V242M77.5 239V242M78.5 239V242M80.5 239V242M82.5 233V235M89.5 233V235M89.5 239V242M90.5 239V242M92.5 233V235M92.5 239V242M93.5 239V242M94.5 233V235M95.5 239V242M97.5 239V242M98.5 239V242M100.5 239V242M104.5 233V235M104.5 239V242M114.5 239V242M127.5 233V235M129.5 239V242M132.5 233V235M138.5 233V235M140.5 239V242M143.5 239V242M148.5 239V242M149.5 239V242M160.5 239V242M161.5 233V235M161.5 239V242M163.5 239V242M168.5 233V235M171.5 233V235M174.5 239V242M176.5 233V235M176.5 239V242M178.5 239V242M181.5 233V235M188.5 239V242M195.5 239V242M196.5 239V242M197.5 239V242M198.5 233V235M200.5 233V235M207.5 239V242M208.5 233V235M208.5 239V242M210.5 233V235M211.5 233V235M214.5 239V242M215.5 239V242M216.5 239V242M220.5 233V235M222.5 233V235M224.5 233V235M227.5 239V242M231.5 233V235M235.5 239V242M236.5 239V242M240.5 239V242M242.5 233V235M245.5 233V235M251.5 233V235M252.5 239V242M259.5 239V242M261.5 233V235M261.5 239V242M264.5 239V242M269.5 233V235M274.5 239V242M280.5 233V235M284.5 233V235M288.5 239V242M293.5 239V242M295.5 233V235M298.5 239V242M301.5 239V242M309.5 239V242M310.5 239V242M312.5 239V242M315.5 239V242M322.5 239V242M323.5 233V235M323.5 239V242M327.5 239V242M328.5 233V235M331.5 239V242M335.5 233V235M336.5 233V235M336.5 239V242M338.5 233V235M343.5 233V235M345.5 233V235M345.5 239V242M348.5 239V242M349.5 233V235M350.5 233V235M350.5 239V242M356.5 239V242M359.5 239V242M368.5 239V242M370.5 239V242M377.5 239V242M378.5 233V235M386.5 233V235M389.5 239V242M393.5 233V235M396.5 233V235M397.5 239V242M405.5 239V242M408.5 239V242M411.5 239V242M417.5 239V242M418.5 239V242M422.5 239V242M426.5 239V242M430.5 233V235M430.5 239V242M439.5 239V242M441.5 233V235M444.5 239V242M450.5 239V242M451.5 233V235M456.5 239V242M457.5 233V235M458.5 233V235M459.5 239V242M460.5 240V241M467.5 473V474M488.5 295V296M496.5 276V279M497.5 270V272M497.5 276V279M504.5 269V270M508.5 265V267M509.5 265V267M514.5 263V264M519.5 271V272M521.5 259V260M521.5 265V266M522.5 257V258M524.5 257V258M527.5 247V248M530.5 243V245M531.5 243V245M532.5 242V244M535.5 250V253M537.5 252V255M544.5 241V243M545.5 241V243M551.5 239V241M553.5 246V249M558.5 247V250M559.5 247V250M562.5 248V251M564.5 248V251M565.5 247V250M568.5 245V248M574.5 237V239M576.5 237V239M577.5 237V239M578.5 243V246M584.5 243V246M591.5 243V246M592.5 237V239M598.5 245V248M600.5 245V248M602.5 238V240M603.5 238V240M605.5 237V239M606.5 237V239M607.5 237V239M618.5 236V238M620.5 236V238M621.5 242V245M622.5 236V238M628.5 241V244M630.5 235V237M631.5 235V237M634.5 235V237M645.5 234V236M647.5 234V236M647.5 240V243M653.5 240V243M664.5 234V236M669.5 234V236M673.5 234V236M677.5 240V243M680.5 234V236M692.5 240V243M695.5 240V243M698.5 240V243M699.5 240V243M700.5 240V243M701.5 234V236M702.5 234V236M703.5 240V243M705.5 234V236M707.5 240V243M708.5 234V236M711.5 234V236M711.5 240V243M717.5 234V236M719.5 234V236M723.5 234V236M725.5 234V236M729.5 234V236M730.5 234V236M731.5 234V236M733.5 240V243M734.5 234V236M734.5 240V243M745.5 234V236M747.5 234V236M755.5 234V236M756.5 240V243M760.5 234V236M762.5 240V243M764.5 240V243M767.5 240V243M769.5 234V236M771.5 234V236M771.5 240V243M773.5 234V236M778.5 234V236M780.5 240V243M782.5 240V243M785.5 240V243M793.5 234V236M795.5 234V236M798.5 234V236M798.5 240V243M799.5 240V243M803.5 240V243M804.5 234V236M804.5 240V243M812.5 240V243M818.5 240V243M827.5 241V242M831.5 310V311M832.5 305V306M843.5 312V313M858.5 265V266M862.5 258V261M864.5 255V256M868.5 245V247M868.5 251V254M870.5 250V253M873.5 247V250M876.5 239V241M890.5 243V246M894.5 236V238M898.5 241V244M899.5 235V237M902.5 235V237M905.5 240V243M907.5 234V236M910.5 234V236M911.5 240V243M916.5 234V236M917.5 240V243M918.5 240V243M920.5 234V236M922.5 240V243M926.5 234V236M928.5 240V243M933.5 234V236M933.5 240V243M938.5 234V236M940.5 240V243M941.5 234V236M946.5 240V243M949.5 234V236M951.5 234V236M952.5 234V236M955.5 234V236M956.5 240V243M957.5 234V236M958.5 240V243M960.5 240V243M965.5 234V236M968.5 234V236M970.5 240V243M972.5 240V243M974.5 234V236M976.5 240V243M980.5 240V243M981.5 234V236M987.5 234V236M991.5 234V236M992.5 234V236M992.5 240V243M995.5 240V243M1001.5 234V236M1003.5 234V236M1003.5 240V243M1006.5 240V243M1009.5 240V243M1017.5 240V243M1020.5 240V243"/>
<path opacity="0.5" d="M21.5 239V242M23.5 239V242M27.5 233V235M30.5 233V235M30.5 239V242M31.5 239V242M38.5 233V235M42.5 233V235M45.5 233V235M48.5 239V242M50.5 233V235M52.5 233V235M55.5 233V235M56.5 239V242M66.5 233V235M70.5 233V235M74.5 239V242M83.5 233V235M83.5 239V242M86.5 233V235M93.5 233V235M96.5 233V235M96.5 239V242M99.5 239V242M116.5 233V235M117.5 233V235M119.5 239V242M121.5 233V235M123.5 233V235M129.5 233V235M132.5 239V242M139.5 233V235M139.5 239V242M142.5 239V242M150.5 233V235M153.5 233V235M155.5 239V242M159.5 239V242M167.5 233V235M168.5 239V242M170.5 239V242M173.5 233V235M174.5 233V235M180.5 239V242M181.5 239V242M185.5 239V242M186.5 233V235M187.5 233V235M190.5 239V242M192.5 233V235M194.5 233V235M196.5 233V235M197.5 233V235M202.5 239V242M203.5 233V235M203.5 239V242M204.5 233V235M210.5 239V242M211.5 239V242M221.5 233V235M229.5 239V242M231.5 239V242M233.5 233V235M234.5 239V242M236.5 233V235M237.5 239V242M238.5 233V235M243.5 233V235M247.5 233V235M250.5 239V242M256.5 233V235M256.5 239V242M257.5 233V235M257.5 239V242M263.5 233V235M266.5 239V242M273.5 239V242M274.5 233V235M278.5 239V242M279.5 239V242M281.5 233V235M282.5 239V242M286.5 233V235M291.5 233V235M300.5 239V242M303.5 239V242M305.5 233V235M305.5 239V242M307.5 233V235M308.5 233V235M311.5 233V235M311.5 239V242M313.5 239V242M316.5 239V242M322.5 233V235M328.5 239V242M330.5 233V235M331.5 233V235M339.5 239V242M340.5 233V235M340.5 239V242M341.5 239V242M346.5 239V242M347.5 239V242M352.5 233V235M353.5 233V235M353.5 239V242M354.5 233V235M354.5 239V242M356.5 233V235M361.5 233V235M366.5 239V242M367.5 233V235M367.5 239V242M371.5 233V235M372.5 233V235M372.5 239V242M375.5 233V235M380.5 239V242M381.5 233V235M382.5 233V235M382.5 239V242M385.5 239V242M388.5 239V242M390.5 233V235M394.5 239V242M395.5 239V242M397.5 233V235M398.5 233V235M403.5 233V235M404.5 239V242M405.5 233V235M406.5 239V242M407.5 239V242M414.5 239V242M417.5 233V235M419.5 239V242M420.5 239V242M421.5 239V242M422.5 233V235M424.5 239V242M426.5 233V235M427.5 239V242M429.5 239V242M432.5 233V235M433.5 233V235M435.5 233V235M440.5 233V235M441.5 239V242M443.5 239V242M445.5 233V235M446.5 233V235M449.5 239V242M458.5 239V242M490.5 282V283M493.5 279V280M494.5 271V273M503.5 277V278M505.5 267V268M505.5 272V273M506.5 264V266M512.5 261V263M513.5 261V263M516.5 271V272M522.5 262V263M526.5 247V249M539.5 244V246M541.5 242V244M542.5 242V244M542.5 248V251M544.5 248V251M546.5 247V250M547.5 240V242M549.5 239V241M550.5 239V241M554.5 246V249M560.5 241V243M561.5 241V243M563.5 242V244M563.5 248V251M565.5 240V242M567.5 245V248M568.5 238V240M570.5 237V239M573.5 243V246M574.5 243V246M575.5 243V246M578.5 237V239M583.5 237V239M584.5 237V239M586.5 243V246M587.5 237V239M591.5 237V239M595.5 237V239M601.5 239V241M603.5 244V247M604.5 237V239M608.5 243V246M610.5 243V246M611.5 237V239M611.5 243V246M612.5 243V246M617.5 236V238M623.5 236V238M626.5 235V237M627.5 241V244M629.5 235V237M636.5 234V236M637.5 234V236M639.5 234V236M640.5 240V243M642.5 234V236M645.5 240V243M649.5 234V236M652.5 234V236M654.5 240V243M659.5 240V243M674.5 240V243M681.5 234V236M683.5 240V243M684.5 234V236M684.5 240V243M685.5 240V243M686.5 234V236M693.5 234V236M694.5 234V236M697.5 240V243M698.5 234V236M699.5 234V236M701.5 240V243M708.5 240V243M712.5 234V236M712.5 240V243M713.5 234V236M715.5 240V243M718.5 234V236M720.5 234V236M721.5 234V236M726.5 240V243M727.5 240V243M740.5 234V236M746.5 240V243M747.5 240V243M748.5 240V243M751.5 240V243M752.5 240V243M757.5 234V236M760.5 240V243M761.5 240V243M762.5 234V236M763.5 240V243M765.5 234V236M768.5 234V236M770.5 240V243M774.5 240V243M783.5 234V236M787.5 234V236M791.5 234V236M796.5 234V236M799.5 234V236M800.5 234V236M806.5 234V236M808.5 240V243M809.5 240V243M814.5 234V236M814.5 240V243M816.5 240V243M819.5 234V236M819.5 240V243M825.5 234V236M826.5 240V243M827.5 236V237M846.5 301V302M860.5 261V262M867.5 252V255M870.5 243V245M877.5 245V248M879.5 239V241M880.5 238V240M880.5 245V248M882.5 238V240M884.5 244V247M889.5 243V246M895.5 242V245M896.5 236V238M911.5 234V236M913.5 234V236M918.5 234V236M923.5 240V243M925.5 234V236M925.5 240V243M926.5 240V243M934.5 234V236M936.5 234V236M936.5 240V243M938.5 240V243M940.5 234V236M944.5 234V236M948.5 234V236M948.5 240V243M954.5 240V243M957.5 240V243M959.5 240V243M964.5 234V236M964.5 240V243M968.5 240V243M969.5 234V236M971.5 240V243M978.5 234V236M982.5 234V236M984.5 240V243M986.5 234V236M986.5 240V243M990.5 240V243M994.5 234V236M997.5 240V243M999.5 240V243M1004.5 234V236M1005.5 234V236M1005.5 240V243M1006.5 234V236M1014.5 240V243M1016.5 234V236"/>
<path opacity="0.6" d="M21.5 235V236M22.5 235V236M23.5 235V236M31.5 238V239M32.5 235V236M33.5 238V239M36.5 238V239M39.5 235V236M39.5 238V239M41.5 238V239M46.5 238V239M49.5 235V236M62.5 235V236M71.5 235V236M74.5 238V239M76.5 238V239M77.5 238V239M82.5 238V239M92.5 238V239M95.5 235V236M96.5 238V239M97.5 235V236M97.5 238V239M99.5 235V236M101.5 235V236M116.5 238V239M117.5 238V239M118.5 235V236M120.5 238V239M128.5 235V236M131.5 235V236M133.5 235V236M134.5 235V236M134.5 238V239M137.5 238V239M138.5 238V239M142.5 235V236M144.5 238V239M148.5 235V236M151.5 238V239M152.5 238V239M154.5 235V236M159.5 235V236M159.5 238V239M162.5 235V236M162.5 238V239M166.5 238V239M169.5 238V239M171.5 235V236M173.5 235V236M179.5 238V239M180.5 235V236M183.5 238V239M186.5 235V236M189.5 238V239M201.5 238V239M202.5 238V239M203.5 238V239M204.5 235V236M208.5 238V239M211.5 235V236M213.5 235V236M216.5 235V236M218.5 235V236M219.5 235V236M220.5 238V239M226.5 235V236M228.5 235V236M229.5 235V236M231.5 235V236M232.5 238V239M233.5 238V239M235.5 235V236M236.5 238V239M240.5 238V239M244.5 235V236M246.5 238V239M250.5 238V239M253.5 235V236M255.5 238V239M257.5 235V236M259.5 235V236M259.5 238V239M265.5 235V236M266.5 238V239M269.5 235V236M272.5 235V236M273.5 238V239M274.5 235V236M276.5 238V239M283.5 238V239M285.5 238V239M286.5 235V236M291.5 238V239M292.5 238V239M293.5 235V236M294.5 238V239M302.5 238V239M304.5 235V236M304.5 238V239M306.5 235V236M307.5 238V239M312.5 235V236M317.5 235V236M317.5 238V239M319.5 238V239M320.5 235V236M322.5 238V239M324.5 238V239M326.5 235V236M327.5 238V239M331.5 235V236M332.5 235V236M334.5 235V236M335.5 238V239M336.5 235V236M336.5 238V239M340.5 238V239M347.5 235V236M347.5 238V239M349.5 238V239M351.5 235V236M352.5 235V236M354.5 235V236M354.5 238V239M355.5 235V236M356.5 238V239M361.5 235V236M362.5 235V236M362.5 238V239M369.5 235V236M370.5 235V236M372.5 238V239M373.5 235V236M375.5 235V236M377.5 235V236M379.5 238V239M382.5 238V239M383.5 235V236M386.5 238V239M388.5 238V239M390.5 238V239M391.5 238V239M392.5 235V236M394.5 235V236M399.5 235V236M402.5 235V236M404.5 235V236M405.5 235V236M405.5 238V239M409.5 235V236M411.5 235V236M415.5 235V236M415.5 238V239M420.5 235V236M424.5 235V236M428.5 238V239M429.5 235V236M431.5 238V239M432.5 235V236M432.5 238V239M433.5 235V236M434.5 235V236M439.5 238V239M440.5 235V236M440.5 238V239M442.5 235V236M445.5 238V239M451.5 235V236M451.5 238V239M457.5 235V236M457.5 238V239M459.5 238V239M497.5 272V273M497.5 275V276M498.5 275V276M502.5 277V278M507.5 266V267M508.5 267V268M512.5 263V264M513.5 263V264M526.5 249V250M531.5 248V249M532.5 248V249M538.5 247V248M539.5 246V247M542.5 244V245M544.5 247V248M547.5 242V243M548.5 245V246M550.5 241V242M554.5 245V246M555.5 245V246M562.5 247V248M565.5 242V243M567.5 244V245M570.5 239V240M570.5 243V244M572.5 239V240M578.5 242V243M580.5 239V240M582.5 242V243M583.5 239V240M583.5 242V243M584.5 242V243M586.5 239V240M588.5 242V243M589.5 239V240M590.5 239V240M590.5 242V243M591.5 239V240M594.5 242V243M595.5 243V244M601.5 241V242M601.5 244V245M602.5 244V245M604.5 243V244M609.5 242V243M610.5 239V240M613.5 242V243M619.5 241V242M623.5 238V239M623.5 241V242M624.5 241V242M628.5 237V238M629.5 237V238M629.5 240V241M632.5 240V241M637.5 239V240M638.5 236V237M641.5 239V240M642.5 236V237M644.5 239V240M648.5 236V237M651.5 236V237M654.5 239V240M657.5 236V237M658.5 239V240M659.5 239V240M660.5 239V240M668.5 239V240M672.5 239V240M673.5 239V240M674.5 236V237M675.5 236V237M677.5 236V237M683.5 236V237M688.5 239V240M689.5 239V240M690.5 239V240M693.5 236V237M693.5 239V240M696.5 239V240M699.5 239V240M700.5 236V237M706.5 236V237M708.5 236V237M709.5 236V237M710.5 236V237M711.5 239V240M712.5 236V237M713.5 236V237M716.5 236V237M718.5 239V240M721.5 236V237M721.5 239V240M722.5 239V240M723.5 236V237M724.5 236V237M729.5 236V237M731.5 236V237M735.5 236V237M741.5 236V237M744.5 239V240M746.5 236V237M746.5 239V240M747.5 236V237M748.5 239V240M750.5 239V240M754.5 239V240M756.5 236V237M756.5 239V240M760.5 236V237M760.5 239V240M761.5 239V240M765.5 239V240M769.5 239V240M773.5 239V240M776.5 236V237M782.5 236V237M785.5 236V237M786.5 236V237M787.5 239V240M789.5 236V237M789.5 239V240M790.5 239V240M794.5 239V240M800.5 236V237M801.5 239V240M805.5 239V240M812.5 239V240M816.5 236V237M821.5 236V237M822.5 239V240M824.5 239V240M825.5 236V237M825.5 239V240M826.5 236V237M862.5 253V254M867.5 251V252M871.5 248V249M873.5 243V244M888.5 239V240M888.5 242V243M890.5 242V243M891.5 238V239M893.5 238V239M894.5 238V239M894.5 241V242M896.5 241V242M897.5 237V238M898.5 240V241M906.5 236V237M909.5 236V237M912.5 236V237M914.5 236V237M915.5 236V237M915.5 239V240M918.5 236V237M919.5 236V237M920.5 236V237M922.5 236V237M922.5 239V240M925.5 236V237M926.5 236V237M929.5 239V240M938.5 236V237M940.5 236V237M941.5 239V240M944.5 239V240M946.5 239V240M950.5 236V237M950.5 239V240M953.5 239V240M956.5 239V240M965.5 239V240M966.5 236V237M968.5 239V240M971.5 239V240M981.5 236V237M981.5 239V240M982.5 236V237M985.5 236V237M986.5 236V237M989.5 236V237M990.5 239V240M991.5 239V240M992.5 239V240M994.5 239V240M999.5 236V237M1000.5 236V237M1000.5 239V240M1001.5 239V240M1002.5 239V240M1007.5 239V240M1008.5 236V237M1010.5 236V237M1015.5 239V240M1019.5 239V240"/>
<path opacity="0.7" d="M21.5 238V239M23.5 238V239M25.5 235V236M27.5 235V236M29.5 238V239M33.5 235V236M36.5 235V236M38.5 235V236M42.5 238V239M45.5 235V236M49.5 238V239M51.5 238V239M54.5 238V239M57.5 238V239M59.5 238V239M60.5 235V236M66.5 235V236M68.5 238V239M71.5 238V239M73.5 238V239M75.5 238V239M76.5 235V236M79.5 235V236M79.5 238V239M82.5 235V236M86.5 235V236M86.5 238V239M88.5 235V236M90.5 235V236M90.5 238V239M91.5 235V236M92.5 235V236M93.5 238V239M103.5 238V239M104.5 235V236M107.5 238V239M108.5 235V236M108.5 238V239M115.5 235V236M116.5 235V236M117.5 235V236M120.5 235V236M121.5 235V236M123.5 235V236M127.5 235V236M130.5 238V239M132.5 235V236M135.5 238V239M137.5 235V236M139.5 235V236M139.5 238V239M141.5 235V236M144.5 235V236M145.5 238V239M147.5 238V239M151.5 235V236M152.5 235V236M153.5 235V236M153.5 238V239M155.5 238V239M160.5 238V239M163.5 238V239M165.5 235V236M167.5 235V236M167.5 238V239M168.5 235V236M176.5 235V236M176.5 238V239M181.5 235V236M181.5 238V239M185.5 235V236M185.5 238V239M186.5 238V239M187.5 235V236M189.5 235V236M190.5 235V236M192.5 235V236M194.5 235V236M199.5 238V239M207.5 238V239M209.5 238V239M210.5 238V239M214.5 235V236M218.5 238V239M222.5 235V236M223.5 235V236M225.5 238V239M230.5 235V236M230.5 238V239M236.5 235V236M237.5 235V236M243.5 235V236M245.5 235V236M247.5 235V236M247.5 238V239M248.5 238V239M250.5 235V236M254.5 238V239M256.5 238V239M260.5 238V239M263.5 238V239M264.5 235V236M265.5 238V239M266.5 235V236M267.5 235V236M267.5 238V239M270.5 235V236M272.5 238V239M275.5 238V239M279.5 238V239M284.5 235V236M287.5 235V236M291.5 235V236M296.5 235V236M305.5 238V239M308.5 238V239M310.5 235V236M310.5 238V239M318.5 235V236M319.5 235V236M320.5 238V239M321.5 235V236M321.5 238V239M322.5 235V236M323.5 238V239M325.5 238V239M326.5 238V239M334.5 238V239M337.5 238V239M341.5 238V239M343.5 235V236M345.5 238V239M348.5 235V236M353.5 238V239M356.5 235V236M358.5 235V236M363.5 235V236M365.5 235V236M366.5 235V236M368.5 238V239M372.5 235V236M373.5 238V239M376.5 235V236M380.5 238V239M381.5 235V236M385.5 238V239M386.5 235V236M390.5 235V236M395.5 235V236M396.5 238V239M400.5 235V236M403.5 235V236M403.5 238V239M404.5 238V239M412.5 238V239M413.5 238V239M414.5 235V236M418.5 235V236M419.5 235V236M419.5 238V239M420.5 238V239M421.5 238V239M424.5 238V239M425.5 235V236M430.5 235V236M431.5 235V236M433.5 238V239M434.5 238V239M436.5 238V239M438.5 238V239M442.5 238V239M443.5 235V236M445.5 235V236M446.5 235V236M458.5 238V239M459.5 235V236M470.5 440V455M471.5 426V442M472.5 414V428M500.5 276V277M526.5 253V254M528.5 250V251M529.5 249V250M530.5 245V246M530.5 248V249M532.5 244V245M540.5 245V246M541.5 248V249M546.5 243V244M548.5 241V242M549.5 241V242M550.5 244V245M553.5 241V242M556.5 245V246M559.5 246V247M561.5 246V247M566.5 241V242M569.5 243V244M571.5 242V243M573.5 239V240M574.5 239V240M575.5 239V240M575.5 242V243M577.5 239V240M577.5 242V243M579.5 239V240M591.5 242V243M596.5 243V244M598.5 241V242M599.5 241V242M606.5 239V240M607.5 242V243M608.5 242V243M610.5 242V243M611.5 242V243M613.5 239V240M615.5 241V242M624.5 238V239M625.5 237V238M626.5 240V241M627.5 240V241M630.5 240V241M632.5 237V238M634.5 237V238M636.5 239V240M640.5 236V237M640.5 239V240M645.5 236V237M645.5 239V240M646.5 239V240M647.5 236V237M647.5 239V240M651.5 239V240M652.5 239V240M653.5 239V240M654.5 236V237M659.5 236V237M664.5 239V240M673.5 236V237M681.5 239V240M685.5 236V237M685.5 239V240M687.5 239V240M691.5 239V240M699.5 236V237M701.5 236V237M702.5 236V237M703.5 236V237M707.5 239V240M713.5 239V240M716.5 239V240M719.5 239V240M724.5 239V240M725.5 236V237M725.5 239V240M727.5 239V240M728.5 239V240M730.5 239V240M736.5 239V240M737.5 236V237M737.5 239V240M738.5 236V237M738.5 239V240M742.5 239V240M747.5 239V240M749.5 236V237M752.5 239V240M753.5 239V240M758.5 239V240M761.5 236V237M762.5 236V237M764.5 239V240M766.5 236V237M767.5 239V240M772.5 236V237M772.5 239V240M773.5 236V237M774.5 236V237M774.5 239V240M776.5 239V240M780.5 239V240M783.5 239V240M788.5 236V237M791.5 236V237M792.5 239V240M793.5 236V237M794.5 236V237M795.5 236V237M802.5 236V237M803.5 239V240M807.5 239V240M812.5 236V237M816.5 239V240M819.5 239V240M826.5 239V240M835.5 315V332M836.5 330V350M863.5 252V253M867.5 247V248M868.5 250V251M869.5 250V251M871.5 244V245M874.5 242V243M878.5 241V242M878.5 244V245M879.5 241V242M879.5 244V245M880.5 240V241M880.5 244V245M887.5 239V240M896.5 238V239M899.5 237V238M900.5 240V241M903.5 236V237M905.5 236V237M905.5 239V240M908.5 239V240M917.5 236V237M920.5 239V240M921.5 236V237M924.5 236V237M927.5 239V240M932.5 239V240M933.5 239V240M934.5 239V240M937.5 236V237M939.5 236V237M940.5 239V240M942.5 236V237M948.5 236V237M948.5 239V240M949.5 236V237M951.5 236V237M952.5 236V237M955.5 239V240M961.5 236V237M963.5 236V237M964.5 236V237M969.5 239V240M970.5 236V237M974.5 236V237M975.5 236V237M976.5 239V240M979.5 236V237M980.5 236V237M983.5 239V240M987.5 236V237M987.5 239V240M988.5 236V237M991.5 236V237M992.5 236V237M997.5 236V237M997.5 239V240M999.5 239V240M1003.5 239V240M1005.5 236V237M1007.5 236V237M1009.5 236V237M1010.5 239V240M1012.5 239V240M1016.5 239V240"/>
<path opacity="0.75" d="M22.5 238V239M25.5 238V239M26.5 238V239M28.5 235V236M34.5 238V239M41.5 235V236M42.5 235V236M44.5 235V236M45.5 238V239M52.5 235V236M56.5 235V236M57.5 235V236M58.5 238V239M61.5 235V236M61.5 238V239M64.5 238V239M67.5 238V239M69.5 238V239M72.5 238V239M77.5 235V236M78.5 238V239M80.5 238V239M81.5 235V236M81.5 238V239M83.5 238V239M84.5 235V236M85.5 235V236M89.5 235V236M89.5 238V239M94.5 238V239M95.5 238V239M98.5 235V236M99.5 238V239M102.5 235V236M105.5 235V236M107.5 235V236M110.5 235V236M110.5 238V239M111.5 235V236M112.5 235V236M113.5 238V239M119.5 238V239M123.5 238V239M124.5 235V236M124.5 238V239M126.5 238V239M128.5 238V239M129.5 235V236M136.5 235V236M136.5 238V239M138.5 235V236M140.5 238V239M143.5 238V239M146.5 238V239M147.5 235V236M148.5 238V239M150.5 235V236M155.5 235V236M157.5 238V239M158.5 235V236M161.5 235V236M164.5 235V236M164.5 238V239M166.5 235V236M170.5 238V239M171.5 238V239M172.5 235V236M174.5 235V236M174.5 238V239M175.5 235V236M177.5 238V239M179.5 235V236M184.5 238V239M188.5 238V239M197.5 238V239M198.5 235V236M199.5 235V236M200.5 238V239M201.5 235V236M202.5 235V236M205.5 238V239M206.5 235V236M207.5 235V236M208.5 235V236M210.5 235V236M211.5 238V239M215.5 235V236M215.5 238V239M216.5 238V239M221.5 235V236M221.5 238V239M222.5 238V239M227.5 238V239M228.5 238V239M229.5 238V239M233.5 235V236M239.5 238V239M240.5 235V236M244.5 238V239M248.5 235V236M253.5 238V239M260.5 235V236M261.5 235V236M262.5 238V239M268.5 238V239M271.5 238V239M273.5 235V236M275.5 235V236M277.5 235V236M277.5 238V239M278.5 235V236M279.5 235V236M280.5 235V236M285.5 235V236M286.5 238V239M290.5 238V239M297.5 235V236M297.5 238V239M298.5 238V239M299.5 238V239M300.5 235V236M301.5 238V239M303.5 238V239M306.5 238V239M312.5 238V239M323.5 235V236M329.5 235V236M339.5 238V239M341.5 235V236M342.5 238V239M343.5 238V239M346.5 235V236M349.5 235V236M350.5 235V236M364.5 235V236M365.5 238V239M367.5 235V236M367.5 238V239M371.5 238V239M374.5 235V236M377.5 238V239M378.5 235V236M378.5 238V239M382.5 235V236M384.5 238V239M389.5 235V236M394.5 238V239M397.5 238V239M398.5 235V236M401.5 238V239M406.5 238V239M409.5 238V239M412.5 235V236M413.5 235V236M414.5 238V239M416.5 235V236M416.5 238V239M421.5 235V236M423.5 238V239M425.5 238V239M428.5 235V236M437.5 238V239M438.5 235V236M439.5 235V236M444.5 238V239M448.5 235V236M450.5 235V236M452.5 238V239M453.5 235V236M455.5 235V236M455.5 238V239M495.5 276V277M496.5 275V276M507.5 270V271M509.5 267V268M509.5 271V272M511.5 268V269M515.5 269V270M528.5 246V247M529.5 245V246M533.5 247V248M534.5 244V245M534.5 248V249M535.5 249V250M536.5 250V251M539.5 250V251M545.5 243V244M546.5 246V247M549.5 244V245M551.5 241V242M551.5 244V245M554.5 242V243M558.5 246V247M559.5 243V244M561.5 243V244M563.5 244V245M564.5 247V248M565.5 246V247M569.5 240V241M582.5 239V240M584.5 239V240M585.5 239V240M588.5 239V240M592.5 242V243M594.5 239V240M598.5 244V245M599.5 244V245M603.5 243V244M606.5 242V243M608.5 239V240M609.5 239V240M614.5 238V239M614.5 242V243M617.5 238V239M618.5 238V239M618.5 241V242M620.5 238V239M622.5 241V242M634.5 240V241M635.5 240V241M637.5 236V237M638.5 239V240M643.5 239V240M644.5 236V237M649.5 236V237M649.5 239V240M650.5 236V237M652.5 236V237M655.5 239V240M656.5 239V240M658.5 236V237M660.5 236V237M662.5 236V237M663.5 239V240M665.5 236V237M665.5 239V240M666.5 236V237M670.5 236V237M670.5 239V240M676.5 239V240M679.5 239V240M681.5 236V237M682.5 236V237M683.5 239V240M687.5 236V237M689.5 236V237M691.5 236V237M694.5 239V240M695.5 239V240M697.5 236V237M697.5 239V240M698.5 236V237M702.5 239V240M703.5 239V240M705.5 236V237M710.5 239V240M711.5 236V237M712.5 239V240M717.5 236V237M717.5 239V240M718.5 236V237M722.5 236V237M723.5 239V240M739.5 236V237M740.5 239V240M748.5 236V237M749.5 239V240M755.5 239V240M758.5 236V237M759.5 236V237M759.5 239V240M764.5 236V237M767.5 236V237M777.5 236V237M780.5 236V237M782.5 239V240M785.5 239V240M786.5 239V240M787.5 236V237M793.5 239V240M795.5 239V240M799.5 239V240M802.5 239V240M805.5 236V237M807.5 236V237M808.5 236V237M810.5 236V237M814.5 236V237M815.5 236V237M818.5 236V237M819.5 236V237M820.5 239V240M822.5 236V237M824.5 236V237M863.5 256V257M869.5 246V247M870.5 245V246M877.5 241V242M877.5 244V245M881.5 243V244M884.5 240V241M886.5 243V244M887.5 242V243M891.5 242V243M892.5 241V242M893.5 241V242M898.5 237V238M901.5 240V241M902.5 237V238M902.5 240V241M904.5 239V240M907.5 236V237M909.5 239V240M910.5 236V237M910.5 239V240M911.5 239V240M913.5 239V240M916.5 236V237M918.5 239V240M919.5 239V240M921.5 239V240M923.5 239V240M926.5 239V240M930.5 236V237M930.5 239V240M936.5 239V240M941.5 236V237M945.5 236V237M946.5 236V237M947.5 236V237M954.5 236V237M956.5 236V237M957.5 239V240M958.5 239V240M960.5 236V237M962.5 239V240M964.5 239V240M965.5 236V237M968.5 236V237M969.5 236V237M973.5 239V240M975.5 239V240M977.5 236V237M977.5 239V240M978.5 236V237M982.5 239V240M985.5 239V240M988.5 239V240M994.5 236V237M996.5 239V240M1005.5 239V240M1006.5 236V237M1009.5 239V240M1013.5 239V240M1017.5 236V237M1018.5 239V240"/>
<path opacity="0.8" d="M28.5 238V239M30.5 235V236M32.5 238V239M37.5 235V236M40.5 235V236M40.5 238V239M46.5 235V236M47.5 238V239M50.5 235V236M51.5 235V236M53.5 238V239M55.5 235V236M56.5 238V239M58.5 235V236M62.5 238V239M64.5 235V236M65.5 238V239M66.5 238V239M68.5 235V236M69.5 235V236M72.5 235V236M75.5 235V236M78.5 235V236M80.5 235V236M84.5 238V239M87.5 235V236M87.5 238V239M88.5 238V239M93.5 235V236M94.5 235V236M96.5 235V236M98.5 238V239M100.5 238V239M102.5 238V239M105.5 238V239M109.5 238V239M113.5 235V236M114.5 238V239M125.5 235V236M125.5 238V239M127.5 238V239M129.5 238V239M131.5 238V239M145.5 235V236M146.5 235V236M149.5 235V236M149.5 238V239M150.5 238V239M154.5 238V239M156.5 238V239M168.5 238V239M169.5 235V236M170.5 235V236M175.5 238V239M178.5 238V239M180.5 238V239M182.5 235V236M182.5 238V239M187.5 238V239M193.5 235V236M194.5 238V239M195.5 238V239M203.5 235V236M204.5 238V239M205.5 235V236M206.5 238V239M212.5 238V239M213.5 238V239M217.5 238V239M219.5 238V239M223.5 238V239M224.5 235V236M225.5 235V236M226.5 238V239M235.5 238V239M238.5 238V239M239.5 235V236M241.5 238V239M242.5 238V239M243.5 238V239M249.5 235V236M251.5 235V236M252.5 235V236M252.5 238V239M254.5 235V236M257.5 238V239M258.5 235V236M261.5 238V239M264.5 238V239M269.5 238V239M270.5 238V239M274.5 238V239M278.5 238V239M280.5 238V239M281.5 235V236M283.5 235V236M288.5 235V236M289.5 238V239M292.5 235V236M293.5 238V239M296.5 238V239M298.5 235V236M301.5 235V236M307.5 235V236M308.5 235V236M309.5 235V236M309.5 238V239M311.5 238V239M313.5 235V236M314.5 235V236M314.5 238V239M315.5 235V236M316.5 235V236M316.5 238V239M325.5 235V236M327.5 235V236M328.5 238V239M330.5 235V236M330.5 238V239M332.5 238V239M333.5 235V236M335.5 235V236M337.5 235V236M346.5 238V239M348.5 238V239M350.5 238V239M357.5 235V236M357.5 238V239M359.5 235V236M359.5 238V239M361.5 238V239M363.5 238V239M369.5 238V239M370.5 238V239M375.5 238V239M376.5 238V239M379.5 235V236M383.5 238V239M387.5 235V236M389.5 238V239M391.5 235V236M392.5 238V239M393.5 235V236M395.5 238V239M398.5 238V239M400.5 238V239M401.5 235V236M407.5 235V236M408.5 238V239M410.5 235V236M410.5 238V239M417.5 238V239M422.5 235V236M422.5 238V239M423.5 235V236M426.5 238V239M427.5 235V236M427.5 238V239M429.5 238V239M430.5 238V239M435.5 235V236M436.5 235V236M441.5 235V236M441.5 238V239M443.5 238V239M446.5 238V239M448.5 238V239M449.5 238V239M452.5 235V236M453.5 238V239M454.5 235V236M456.5 235V236M458.5 235V236M461.5 237V247M462.5 245V254M468.5 463V475M469.5 453V465M473.5 403V416M474.5 392V405M475.5 383V394M476.5 374V385M477.5 363V376M478.5 352V365M479.5 341V354M480.5 334V343M481.5 327V336M482.5 320V329M483.5 314V322M484.5 308V316M485.5 302V310M486.5 296V304M487.5 292V298M489.5 285V291M494.5 273V274M499.5 276V277M501.5 277V278M506.5 270V271M508.5 270V271M512.5 267V268M513.5 266V267M515.5 265V266M533.5 244V245M535.5 245V246M537.5 247V248M537.5 251V252M540.5 249V250M542.5 247V248M543.5 247V248M545.5 246V247M552.5 241V242M552.5 244V245M558.5 242V243M560.5 243V244M564.5 243V244M566.5 245V246M568.5 240V241M568.5 244V245M571.5 239V240M573.5 242V243M576.5 239V240M581.5 239V240M581.5 242V243M587.5 239V240M587.5 242V243M593.5 239V240M593.5 242V243M597.5 240V241M600.5 244V245M607.5 239V240M611.5 239V240M619.5 238V239M621.5 241V242M625.5 241V242M626.5 237V238M630.5 237V238M633.5 237V238M636.5 236V237M639.5 239V240M642.5 239V240M643.5 236V237M653.5 236V237M657.5 239V240M661.5 239V240M664.5 236V237M667.5 239V240M668.5 236V237M669.5 236V237M671.5 239V240M672.5 236V237M675.5 239V240M678.5 239V240M679.5 236V237M680.5 236V237M686.5 239V240M688.5 236V237M694.5 236V237M698.5 239V240M704.5 236V237M704.5 239V240M705.5 239V240M714.5 236V237M714.5 239V240M715.5 239V240M719.5 236V237M720.5 236V237M726.5 236V237M726.5 239V240M727.5 236V237M730.5 236V237M731.5 239V240M732.5 239V240M734.5 236V237M734.5 239V240M735.5 239V240M739.5 239V240M740.5 236V237M742.5 236V237M743.5 239V240M745.5 239V240M750.5 236V237M751.5 239V240M752.5 236V237M755.5 236V237M763.5 236V237M765.5 236V237M768.5 239V240M769.5 236V237M770.5 236V237M770.5 239V240M771.5 239V240M775.5 239V240M778.5 236V237M779.5 239V240M784.5 239V240M790.5 236V237M791.5 239V240M796.5 236V237M796.5 239V240M799.5 236V237M800.5 239V240M801.5 236V237M803.5 236V237M804.5 236V237M804.5 239V240M806.5 236V237M808.5 239V240M809.5 239V240M811.5 239V240M813.5 236V237M813.5 239V240M818.5 239V240M820.5 236V237M821.5 239V240M823.5 236V237M833.5 308V314M837.5 339V350M838.5 331V341M839.5 327V333M840.5 323V329M841.5 319V325M842.5 315V321M844.5 308V314M845.5 304V310M847.5 297V303M848.5 293V299M849.5 289V295M850.5 285V291M851.5 281V287M852.5 277V283M853.5 273V279M854.5 269V275M862.5 257V258M865.5 249V250M866.5 248V249M870.5 249V250M873.5 246V247M874.5 246V247M875.5 241V242M876.5 244V245M881.5 240V241M882.5 243V244M883.5 243V244M885.5 240V241M886.5 239V240M889.5 239V240M890.5 239V240M892.5 238V239M895.5 238V239M897.5 241V242M899.5 240V241M904.5 236V237M906.5 239V240M907.5 239V240M913.5 236V237M917.5 239V240M924.5 239V240M928.5 239V240M929.5 236V237M931.5 236V237M932.5 236V237M933.5 236V237M934.5 236V237M935.5 239V240M936.5 236V237M937.5 239V240M943.5 239V240M944.5 236V237M949.5 239V240M952.5 239V240M953.5 236V237M954.5 239V240M960.5 239V240M966.5 239V240M967.5 239V240M970.5 239V240M974.5 239V240M976.5 236V237M978.5 239V240M980.5 239V240M984.5 236V237M989.5 239V240M990.5 236V237M993.5 236V237M995.5 236V237M998.5 236V237M998.5 239V240M1002.5 236V237M1004.5 236V237M1004.5 239V240M1006.5 239V240M1011.5 236V237M1011.5 239V240M1012.5 236V237M1014.5 236V237M1014.5 239V240M1015.5 236V237M1016.5 236V237M1020.5 236V237"/>
<path opacity="0.9" d="M24.5 235V236M24.5 238V239M26.5 235V236M27.5 238V239M29.5 235V236M30.5 238V239M31.5 235V236M34.5 235V236M35.5 235V236M35.5 238V239M37.5 238V239M38.5 238V239M43.5 235V236M43.5 238V239M44.5 238V239M47.5 235V236M48.5 235V236M48.5 238V239M50.5 238V239M52.5 238V239M53.5 235V236M54.5 235V236M55.5 238V239M59.5 235V236M60.5 238V239M63.5 235V236M63.5 238V239M65.5 235V236M67.5 235V236M70.5 235V236M70.5 238V239M73.5 235V236M74.5 235V236M83.5 235V236M85.5 238V239M91.5 238V239M100.5 235V236M101.5 238V239M103.5 235V236M104.5 238V239M106.5 235V236M106.5 238V239M109.5 235V236M111.5 238V239M112.5 238V239M114.5 235V236M115.5 238V239M118.5 238V239M119.5 235V236M121.5 238V239M122.5 235V236M122.5 238V239M126.5 235V236M130.5 235V236M132.5 238V239M133.5 238V239M135.5 235V236M140.5 235V236M141.5 238V239M142.5 238V239M143.5 235V236M156.5 235V236M157.5 235V236M158.5 238V239M160.5 235V236M161.5 238V239M163.5 235V236M165.5 238V239M172.5 238V239M173.5 238V239M177.5 235V236M178.5 235V236M183.5 235V236M184.5 235V236M188.5 235V236M190.5 238V239M191.5 235V236M191.5 238V239M192.5 238V239M193.5 238V239M195.5 235V236M196.5 235V236M196.5 238V239M197.5 235V236M198.5 238V239M200.5 235V236M209.5 235V236M212.5 235V236M214.5 238V239M217.5 235V236M220.5 235V236M224.5 238V239M227.5 235V236M231.5 238V239M232.5 235V236M234.5 235V236M234.5 238V239M237.5 238V239M238.5 235V236M241.5 235V236M242.5 235V236M245.5 238V239M246.5 235V236M249.5 238V239M251.5 238V239M255.5 235V236M256.5 235V236M258.5 238V239M262.5 235V236M263.5 235V236M268.5 235V236M271.5 235V236M276.5 235V236M281.5 238V239M282.5 235V236M282.5 238V239M284.5 238V239M287.5 238V239M288.5 238V239M289.5 235V236M290.5 235V236M294.5 235V236M295.5 235V236M295.5 238V239M299.5 235V236M300.5 238V239M302.5 235V236M303.5 235V236M305.5 235V236M311.5 235V236M313.5 238V239M315.5 238V239M318.5 238V239M324.5 235V236M328.5 235V236M329.5 238V239M331.5 238V239M333.5 238V239M338.5 235V236M338.5 238V239M339.5 235V236M340.5 235V236M342.5 235V236M344.5 235V236M344.5 238V239M345.5 235V236M351.5 238V239M352.5 238V239M353.5 235V236M355.5 238V239M358.5 238V239M360.5 235V236M360.5 238V239M364.5 238V239M366.5 238V239M368.5 235V236M371.5 235V236M374.5 238V239M380.5 235V236M381.5 238V239M384.5 235V236M385.5 235V236M387.5 238V239M388.5 235V236M393.5 238V239M396.5 235V236M397.5 235V236M399.5 238V239M402.5 238V239M406.5 235V236M407.5 238V239M408.5 235V236M411.5 238V239M417.5 235V236M418.5 238V239M426.5 235V236M435.5 238V239M437.5 235V236M444.5 235V236M447.5 235V236M447.5 238V239M449.5 235V236M450.5 238V239M454.5 238V239M456.5 238V239M494.5 277V278M495.5 272V273M496.5 272V273M498.5 272V273M499.5 272V273M500.5 273V274M501.5 273V274M502.5 274V275M506.5 266V267M511.5 264V265M531.5 245V246M536.5 246V247M538.5 251V252M541.5 244V245M543.5 244V245M544.5 243V244M547.5 246V247M553.5 245V246M555.5 242V243M556.5 242V243M557.5 242V243M557.5 245V246M560.5 246V247M562.5 243V244M563.5 247V248M567.5 241V242M572.5 242V243M574.5 242V243M576.5 242V243M578.5 239V240M579.5 242V243M580.5 242V243M585.5 242V243M586.5 242V243M589.5 242V243M592.5 239V240M595.5 239V240M596.5 240V241M597.5 244V245M600.5 241V242M602.5 240V241M603.5 240V241M604.5 239V240M605.5 239V240M605.5 242V243M612.5 239V240M612.5 242V243M615.5 238V239M616.5 238V239M616.5 241V242M617.5 241V242M620.5 241V242M621.5 238V239M622.5 238V239M627.5 237V238M628.5 240V241M631.5 237V238M631.5 240V241M633.5 240V241M635.5 236V237M639.5 236V237M641.5 236V237M646.5 236V237M648.5 239V240M650.5 239V240M655.5 236V237M656.5 236V237M661.5 236V237M662.5 239V240M663.5 236V237M666.5 239V240M667.5 236V237M669.5 239V240M671.5 236V237M674.5 239V240M676.5 236V237M677.5 239V240M678.5 236V237M680.5 239V240M682.5 239V240M684.5 236V237M684.5 239V240M686.5 236V237M690.5 236V237M692.5 236V237M692.5 239V240M695.5 236V237M696.5 236V237M700.5 239V240M701.5 239V240M706.5 239V240M707.5 236V237M708.5 239V240M709.5 239V240M715.5 236V237M720.5 239V240M728.5 236V237M729.5 239V240M732.5 236V237M733.5 236V237M733.5 239V240M736.5 236V237M741.5 239V240M743.5 236V237M744.5 236V237M745.5 236V237M751.5 236V237M753.5 236V237M754.5 236V237M757.5 236V237M757.5 239V240M762.5 239V240M763.5 239V240M766.5 239V240M768.5 236V237M771.5 236V237M775.5 236V237M777.5 239V240M778.5 239V240M779.5 236V237M781.5 236V237M781.5 239V240M783.5 236V237M784.5 236V237M788.5 239V240M792.5 236V237M797.5 236V237M797.5 239V240M798.5 236V237M798.5 239V240M806.5 239V240M809.5 236V237M810.5 239V240M811.5 236V237M814.5 239V240M815.5 239V240M817.5 236V237M817.5 239V240M823.5 239V240M865.5 253V254M866.5 252V253M868.5 247V248M872.5 243V244M872.5 247V248M875.5 245V246M876.5 241V242M882.5 240V241M883.5 240V241M884.5 243V244M885.5 243V244M889.5 242V243M895.5 241V242M900.5 237V238M901.5 237V238M903.5 240V241M908.5 236V237M911.5 236V237M912.5 239V240M914.5 239V240M916.5 239V240M923.5 236V237M925.5 239V240M927.5 236V237M928.5 236V237M931.5 239V240M935.5 236V237M938.5 239V240M939.5 239V240M942.5 239V240M943.5 236V237M945.5 239V240M947.5 239V240M951.5 239V240M955.5 236V237M957.5 236V237M958.5 236V237M959.5 236V237M959.5 239V240M961.5 239V240M962.5 236V237M963.5 239V240M967.5 236V237M971.5 236V237M972.5 236V237M972.5 239V240M973.5 236V237M979.5 239V240M983.5 236V237M984.5 239V240M986.5 239V240M993.5 239V240M995.5 239V240M996.5 236V237M1001.5 236V237M1003.5 236V237M1008.5 239V240M1013.5 236V237M1017.5 239V240M1018.5 236V237M1019.5 236V237M1020.5 239V240"/>
<path opacity="1.0" d="M21.5 236V238M22.5 236V238M23.5 236V238M24.5 236V238M25.5 236V238M26.5 236V238M27.5 236V238M28.5 236V238M29.5 236V238M30.5 236V238M31.5 236V238M32.5 236V238M33.5 236V238M34.5 236V238M35.5 236V238M36.5 236V238M37.5 236V238M38.5 236V238M39.5 236V238M40.5 236V238M41.5 236V238M42.5 236V238M43.5 236V238M44.5 236V238M45.5 236V238M46.5 236V238M47.5 236V238M48.5 236V238M49.5 236V238M50.5 236V238M51.5 236V238M52.5 236V238M53.5 236V238M54.5 236V238M55.5 236V238M56.5 236V238M57.5 236V238M58.5 236V238M59.5 236V238M60.5 236V238M61.5 236V238M62.5 236V238M63.5 236V238M64.5 236V238M65.5 236V238M66.5 236V238M67.5 236V238M68.5 236V238M69.5 236V238M70.5 236V238M71.5 236V238M72.5 236V238M73.5 236V238M74.5 236V238M75.5 236V238M76.5 236V238M77.5 236V238M78.5 236V238M79.5 236V238M80.5 236V238M81.5 236V238M82.5 236V238M83.5 236V238M84.5 236V238M85.5 236V238M86.5 236V238M87.5 236V238M88.5 236V238M89.5 236V238M90.5 236V238M91.5 236V238M92.5 236V238M93.5 236V238M94.5 236V238M95.5 236V238M96.5 236V238M97.5 236V238M98.5 236V238M99.5 236V238M100.5 236V238M101.5 236V238M102.5 236V238M103.5 236V238M104.5 236V238M105.5 236V238M106.5 236V238M107.5 236V238M108.5 236V238M109.5 236V238M110.5 236V238M111.5 236V238M112.5 236V238M113.5 236V238M114.5 236V238M115.5 236V238M116.5 236V238M117.5 236V238M118.5 236V238M119.5 236V238M120.5 236V238M121.5 236V238M122.5 236V238M123.5 236V238M124.5 236V238M125.5 236V238M126.5 236V238M127.5 236V238M128.5 236V238M129.5 236V238M130.5 236V238M131.5 236V238M132.5 236V238M133.5 236V238M134.5 236V238M135.5 236V238M136.5 236V238M137.5 236V238M138.5 236V238M139.5 236V238M140.5 236V238M141.5 236V238M142.5 236V238M143.5 236V238M144.5 236V238M145.5 236V238M146.5 236V238M147.5 236V238M148.5 236V238M149.5 236V238M150.5 236V238M151.5 236V238M152.5 236V238M153.5 236V238M154.5 236V238M155.5 236V238M156.5 236V238M157.5 236V238M158.5 236V238M159.5 236V238M160.5 236V238M161.5 236V238M162.5 236V238M163.5 236V238M164.5 236V238M165.5 236V238M166.5 236V238M167.5 236V238M168.5 236V238M169.5 236V238M170.5 236V238M171.5 236V238M172.5 236V238M173.5 236V238M174.5 236V238M175.5 236V238M176.5 236V238M177.5 236V238M178.5 236V238M179.5 236V238M180.5 236V238M181.5 236V238M182.5 236V238M183.5 236V238M184.5 236V238M185.5 236V238M186.5 236V238M187.5 236V238M188.5 236V238M189.5 236V238M190.5 236V238M191.5 236V238M192.5 236V238M193.5 236V238M194.5 236V238M195.5 236V238M196.5 236V238M197.5 236V238M198.5 236V238M199.5 236V238M200.5 236V238M201.5 236V238M202.5 236V238M203.5 236V238M204.5 236V238M205.5 236V238M206.5 236V238M207.5 236V238M208.5 236V238M209.5 236V238M210.5 236V238M211.5 236V238M212.5 236V238M213.5 236V238M214.5 236V238M215.5 236V238M216.5 236V238M217.5 236V238M218.5 236V238M219.5 236V238M220.5 236V238M221.5 236V238M222.5 236V238M223.5 236V238M224.5 236V238M225.5 236V238M226.5 236V238M227.5 236V238M228.5 236V238M229.5 236V238M230.5 236V238M231.5 236V238M232.5 236V238M233.5 236V238M234.5 236V238M235.5 236V238M236.5 236V238M237.5 236V238M238.5 236V238M239.5 236V238M240.5 236V238M241.5 236V238M242.5 236V238M243.5 236V238M244.5 236V238M245.5 236V238M246.5 236V238M247.5 236V238M248.5 236V238M249.5 236V238M250.5 236V238M251.5 236V238M252.5 236V238M253.5 236V238M254.5 236V238M255.5 236V238M256.5 236V238M257.5 236V238M258.5 236V238M259.5 236V238M260.5 236V238M261.5 236V238M262.5 236V238M263.5 236V238M264.5 236V238M265.5 236V238M266.5 236V238M267.5 236V238M268.5 236V238M269.5 236V238M270.5 236V238M271.5 236V238M272.5 236V238M273.5 236V238M274.5 236V238M275.5 236V238M276.5 236V238M277.5 236V238M278.5 236V238M279.5 236V238M280.5 236V238M281.5 236V238M282.5 236V238M283.5 236V238M284.5 236V238M285.5 236V238M286.5 236V238M287.5 236V238M288.5 236V238M289.5 236V238M290.5 236V238M291.5 236V238M292.5 236V238M293.5 236V238M294.5 236V238M295.5 236V238M296.5 236V238M297.5 236V238M298.5 236V238M299.5 236V238M300.5 236V238M301.5 236V238M302.5 236V238M303.5 236V238M304.5 236V238M305.5 236V238M306.5 236V238M307.5 236V238M308.5 236V238M309.5 236V238M310.5 236V238M311.5 236V238M312.5 236V238M313.5 236V238M314.5 236V238M315.5 236V238M316.5 236V238M317.5 236V238M318.5 236V238M319.5 236V238M320.5 236V238M321.5 236V238M322.5 236V238M323.5 236V238M324.5 236V238M325.5 236V238M326.5 236V238M327.5 236V238M328.5 236V238M329.5 236V238M330.5 236V238M331.5 236V238M332.5 236V238M333.5 236V238M334.5 236V238M335.5 236V238M336.5 236V238M337.5 236V238M338.5 236V238M339.5 236V238M340.5 236V238M341.5 236V238M342.5 236V238M343.5 236V238M344.5 236V238M345.5 236V238M346.5 236V238M347.5 236V238M348.5 236V238M349.5 236V238M350.5 236V238M351.5 236V238M352.5 236V238M353.5 236V238M354.5 236V238M355.5 236V238M356.5 236V238M357.5 236V238M358.5 236V238M359.5 236V238M360.5 236V238M361.5 236V238M362.5 236V238M363.5 236V238M364.5 236V238M365.5 236V238M366.5 236V238M367.5 236V238M368.5 236V238M369.5 236V238M370.5 236V238M371.5 236V238M372.5 236V238M373.5 236V238M374.5 236V238M375.5 236V238M376.5 236V238M377.5 236V238M378.5 236V238M379.5 236V238M380.5 236V238M381.5 236V238M382.5 236V238M383.5 236V238M384.5 236V238M385.5 236V238M386.5 236V238M387.5 236V238M388.5 236V238M389.5 236V238M390.5 236V238M391.5 236V238M392.5 236V238M393.5 236V238M394.5 236V238M395.5 236V238M396.5 236V238M397.5 236V238M398.5 236V238M399.5 236V238M400.5 236V238M401.5 236V238M402.5 236V238M403.5 236V238M404.5 236V238M405.5 236V238M406.5 236V238M407.5 236V238M408.5 236V238M409.5 236V238M410.5 236V238M411.5 236V238M412.5 236V238M413.5 236V238M414.5 236V238M415.5 236V238M416.5 236V238M417.5 236V238M418.5 236V238M419.5 236V238M420.5 236V238M421.5 236V238M422.5 236V238M423.5 236V238M424.5 236V238M425.5 236V238M426.5 236V238M427.5 236V238M428.5 236V238M429.5 236V238M430.5 236V238M431.5 236V238M432.5 236V238M433.5 236V238M434.5 236V238M435.5 236V238M436.5 236V238M437.5 236V238M438.5 236V238M439.5 236V238M440.5 236V238M441.5 236V238M442.5 236V238M443.5 236V238M444.5 236V238M445.5 236V238M446.5 236V238M447.5 236V238M448.5 236V238M449.5 236V238M450.5 236V238M451.5 236V238M452.5 236V238M453.5 236V238M454.5 236V238M455.5 236V238M456.5 236V238M457.5 236V238M458.5 236V238M459.5 236V238M460.5 236V240M467.5 474V479M488.5 290V295M490.5 283V288M491.5 280V285M492.5 277V282M493.5 275V279M494.5 274V277M495.5 273V276M496.5 273V275M497.5 273V275M498.5 273V275M499.5 273V276M500.5 274V276M501.5 274V277M502.5 275V277M503.5 273V277M504.5 270V275M505.5 268V272M506.5 267V270M507.5 267V270M508.5 268V270M509.5 268V271M510.5 266V270M511.5 265V268M512.5 264V267M513.5 264V266M514.5 264V268M515.5 266V269M516.5 267V271M517.5 269V273M518.5 269V273M519.5 266V271M520.5 263V268M521.5 260V265M522.5 258V262M523.5 255V260M524.5 253V257M525.5 251V255M526.5 250V253M527.5 248V252M528.5 247V250M529.5 246V249M530.5 246V248M531.5 246V248M532.5 245V248M533.5 245V247M534.5 245V248M535.5 246V249M536.5 247V250M537.5 248V251M538.5 248V251M539.5 247V250M540.5 246V249M541.5 245V248M542.5 245V247M543.5 245V247M544.5 244V247M545.5 244V246M546.5 244V246M547.5 243V246M548.5 242V245M549.5 242V244M550.5 242V244M551.5 242V244M552.5 242V244M553.5 242V245M554.5 243V245M555.5 243V245M556.5 243V245M557.5 243V245M558.5 243V246M559.5 244V246M560.5 244V246M561.5 244V246M562.5 244V247M563.5 245V247M564.5 244V247M565.5 243V246M566.5 242V245M567.5 242V244M568.5 241V244M569.5 241V243M570.5 240V243M571.5 240V242M572.5 240V242M573.5 240V242M574.5 240V242M575.5 240V242M576.5 240V242M577.5 240V242M578.5 240V242M579.5 240V242M580.5 240V242M581.5 240V242M582.5 240V242M583.5 240V242M584.5 240V242M585.5 240V242M586.5 240V242M587.5 240V242M588.5 240V242M589.5 240V242M590.5 240V242M591.5 240V242M592.5 240V242M593.5 240V242M594.5 240V242M595.5 240V243M596.5 241V243M597.5 241V244M598.5 242V244M599.5 242V244M600.5 242V244M601.5 242V244M602.5 241V244M603.5 241V243M604.5 240V243M605.5 240V242M606.5 240V242M607.5 240V242M608.5 240V242M609.5 240V242M610.5 240V242M611.5 240V242M612.5 240V242M613.5 240V242M614.5 239V242M615.5 239V241M616.5 239V241M617.5 239V241M618.5 239V241M619.5 239V241M620.5 239V241M621.5 239V241M622.5 239V241M623.5 239V241M624.5 239V241M625.5 238V241M626.5 238V240M627.5 238V240M628.5 238V240M629.5 238V240M630.5 238V240M631.5 238V240M632.5 238V240M633.5 238V240M634.5 238V240M635.5 237V240M636.5 237V239M637.5 237V239M638.5 237V239M639.5 237V239M640.5 237V239M641.5 237V239M642.5 237V239M643.5 237V239M644.5 237V239M645.5 237V239M646.5 237V239M647.5 237V239M648.5 237V239M649.5 237V239M650.5 237V239M651.5 237V239M652.5 237V239M653.5 237V239M654.5 237V239M655.5 237V239M656.5 237V239M657.5 237V239M658.5 237V239M659.5 237V239M660.5 237V239M661.5 237V239M662.5 237V239M663.5 237V239M664.5 237V239M665.5 237V239M666.5 237V239M667.5 237V239M668.5 237V239M669.5 237V239M670.5 237V239M671.5 237V239M672.5 237V239M673.5 237V239M674.5 237V239M675.5 237V239M676.5 237V239M677.5 237V239M678.5 237V239M679.5 237V239M680.5 237V239M681.5 237V239M682.5 237V239M683.5 237V239M684.5 237V239M685.5 237V239M686.5 237V239M687.5 237V239M688.5 237V239M689.5 237V239M690.5 237V239M691.5 237V239M692.5 237V239M693.5 237V239M694.5 237V239M695.5 237V239M696.5 237V239M697.5 237V239M698.5 237V239M699.5 237V239M700.5 237V239M701.5 237V239M702.5 237V239M703.5 237V239M704.5 237V239M705.5 237V239M706.5 237V239M707.5 237V239M708.5 237V239M709.5 237V239M710.5 237V239M711.5 237V239M712.5 237V239M713.5 237V239M714.5 237V239M715.5 237V239M716.5 237V239M717.5 237V239M718.5 237V239M719.5 237V239M720.5 237V239M721.5 237V239M722.5 237V239M723.5 237V239M724.5 237V239M725.5 237V239M726.5 237V239M727.5 237V239M728.5 237V239M729.5 237V239M730.5 237V239M731.5 237V239M732.5 237V239M733.5 237V239M734.5 237V239M735.5 237V239M736.5 237V239M737.5 237V239M738.5 237V239M739.5 237V239M740.5 237V239M741.5 237V239M742.5 237V239M743.5 237V239M744.5 237V239M745.5 237V239M746.5 237V239M747.5 237V239M748.5 237V239M749.5 237V239M750.5 237V239M751.5 237V239M752.5 237V239M753.5 237V239M754.5 237V239M755.5 237V239M756.5 237V239M757.5 237V239M758.5 237V239M759.5 237V239M760.5 237V239M761.5 237V239M762.5 237V239M763.5 237V239M764.5 237V239M765.5 237V239M766.5 237V239M767.5 237V239M768.5 237V239M769.5 237V239M770.5 237V239M771.5 237V239M772.5 237V239M773.5 237V239M774.5 237V239M775.5 237V239M776.5 237V239M777.5 237V239M778.5 237V239M779.5 237V239M780.5 237V239M781.5 237V239M782.5 237V239M783.5 237V239M784.5 237V239M785.5 237V239M786.5 237V239M787.5 237V239M788.5 237V239M789.5 237V239M790.5 237V239M791.5 237V239M792.5 237V239M793.5 237V239M794.5 237V239M795.5 237V239M796.5 237V239M797.5 237V239M798.5 237V239M799.5 237V239M800.5 237V239M801.5 237V239M802.5 237V239M803.5 237V239M804.5 237V239M805.5 237V239M806.5 237V239M807.5 237V239M808.5 237V239M809.5 237V239M810.5 237V239M811.5 237V239M812.5 237V239M813.5 237V239M814.5 237V239M815.5 237V239M816.5 237V239M817.5 237V239M818.5 237V239M819.5 237V239M820.5 237V239M821.5 237V239M822.5 237V239M823.5 237V239M824.5 237V239M825.5 237V239M826.5 237V239M827.5 237V241M831.5 306V310M832.5 306V311M834.5 313V318M843.5 313V318M846.5 302V307M855.5 268V272M856.5 266V270M857.5 263V268M858.5 261V265M859.5 259V263M860.5 257V261M861.5 255V259M862.5 254V257M863.5 253V256M864.5 251V255M865.5 250V253M866.5 249V252M867.5 248V251M868.5 248V250M869.5 247V250M870.5 246V249M871.5 245V248M872.5 244V247M873.5 244V246M874.5 243V246M875.5 242V245M876.5 242V244M877.5 242V244M878.5 242V244M879.5 242V244M880.5 241V244M881.5 241V243M882.5 241V243M883.5 241V243M884.5 241V243M885.5 241V243M886.5 240V243M887.5 240V242M888.5 240V242M889.5 240V242M890.5 240V242M891.5 239V242M892.5 239V241M893.5 239V241M894.5 239V241M895.5 239V241M896.5 239V241M897.5 238V241M898.5 238V240M899.5 238V240M900.5 238V240M901.5 238V240M902.5 238V240M903.5 237V240M904.5 237V239M905.5 237V239M906.5 237V239M907.5 237V239M908.5 237V239M909.5 237V239M910.5 237V239M911.5 237V239M912.5 237V239M913.5 237V239M914.5 237V239M915.5 237V239M916.5 237V239M917.5 237V239M918.5 237V239M919.5 237V239M920.5 237V239M921.5 237V239M922.5 237V239M923.5 237V239M924.5 237V239M925.5 237V239M926.5 237V239M927.5 237V239M928.5 237V239M929.5 237V239M930.5 237V239M931.5 237V239M932.5 237V239M933.5 237V239M934.5 237V239M935.5 237V239M936.5 237V239M937.5 237V239M938.5 237V239M939.5 237V239M940.5 237V239M941.5 237V239M942.5 237V239M943.5 237V239M944.5 237V239M945.5 237V239M946.5 237V239M947.5 237V239M948.5 237V239M949.5 237V239M950.5 237V239M951.5 237V239M952.5 237V239M953.5 237V239M954.5 237V239M955.5 237V239M956.5 237V239M957.5 237V239M958.5 237V239M959.5 237V239M960.5 237V239M961.5 237V239M962.5 237V239M963.5 237V239M964.5 237V239M965.5 237V239M966.5 237V239M967.5 237V239M968.5 237V239M969.5 237V239M970.5 237V239M971.5 237V239M972.5 237V239M973.5 237V239M974.5 237V239M975.5 237V239M976.5 237V239M977.5 237V239M978.5 237V239M979.5 237V239M980.5 237V239M981.5 237V239M982.5 237V239M983.5 237V239M984.5 237V239M985.5 237V239M986.5 237V239M987.5 237V239M988.5 237V239M989.5 237V239M990.5 237V239M991.5 237V239M992.5 237V239M993.5 237V239M994.5 237V239M995.5 237V239M996.5 237V239M997.5 237V239M998.5 237V239M999.5 237V239M1000.5 237V239M1001.5 237V239M1002.5 237V239M1003.5 237V239M1004.5 237V239M1005.5 237V239M1006.5 237V239M1007.5 237V239M1008.5 237V239M1009.5 237V239M1010.5 237V239M1011.5 237V239M1012.5 237V239M1013.5 237V239M1014.5 237V239M1015.5 237V239M1016.5 237V239M1017.5 237V239M1018.5 237V239M1019.5 237V239M1020.5 237V239"/>
</g>
<g stroke="#00e8e8" shape-rendering="crispEdges" fill="none"><path opacity="0.32" d="M464.5 258V402M465.5 398V457M466.5 452V470M828.5 240V262M829.5 258V300M830.5 296V306"/><path opacity="0.85" d="M466.5 468V477M467.5 466V479M468.5 462V472M835.5 318V340M836.5 336V351"/></g>
<g fill="#00e8e8" shape-rendering="crispEdges"><path opacity="0.85" d="M461 247h2v9h-2zM462 250h2v8h-2z"/><path opacity="0.4" d="M461 243h1v4h-1zM463 246h1v4h-1zM462 258h2v4h-2z"/><path opacity="0.85" d="M831 306h2v10h-2zM833 304h1v12h-1z"/><path opacity="0.4" d="M831 302h3v3h-3zM831 316h3v3h-3zM834 308h1v10h-1z"/></g>
<path d="M808.5 227V246" stroke="#00e8e8" opacity="0.5" shape-rendering="crispEdges"/>
<g fill="#5a96d7" shape-rendering="crispEdges">
<rect x="20" y="16" width="1002" height="1" fill="#5a96d7" />
<rect x="20" y="668" width="1002" height="1" fill="#5a96d7" />
<rect x="20" y="16" width="1" height="653" fill="#5a96d7" />
<rect x="1021" y="16" width="1" height="653" fill="#5a96d7" />
</g>
<g stroke="#00e8e8" stroke-width="1" shape-rendering="crispEdges" fill="none">
<path d="M253.5 17V668M299.5 17V668"/>
<path d="M23 342.5H1021" stroke-dasharray="4 4"/>
<path d="M23 580.5H1021" stroke-dasharray="4 4"/>
<rect x="246.5" y="335.5" width="14" height="14"/><path d="M246 342.5H261M292 580.5H307"/>
</g>
<circle cx="299.5" cy="580.5" r="7" fill="none" stroke="#00e8e8" stroke-width="1.3"/>
<circle cx="263.3" cy="30.2" r="8.2" fill="#ff4500"/>
<text x="263.0" y="35.0" font-size="17.5" fill="#000" text-anchor="middle" font-family='"DejaVu Sans","Liberation Sans",sans-serif' stroke="#000" stroke-width="0.6">a</text>
<circle cx="289.3" cy="30.2" r="8.2" fill="#ff4500"/>
<text x="289.0" y="35.4" font-size="14.5" fill="#000" text-anchor="middle" font-family='"DejaVu Sans","Liberation Sans",sans-serif' stroke="#000" stroke-width="0.6">b</text>
<path d="M516 17H527L521.5 23.5z" fill="#ff9c00"/>
<path d="M517 1H526L521.5 5.5z" fill="#ff9c00"/>
<path d="M416.5 24H425.5Q427 24 427 25.5V35L421 39.5L415 35V25.5Q415 24 416.5 24z" fill="#ff9c00"/>
<path d="M416.5 25.5H425.5V27.7H422.1V36H419.9V27.7H416.5z" fill="#000"/>
<g shape-rendering="crispEdges">
<rect x="121" y="0" width="800" height="1" fill="#5a96d7" />
<rect x="121" y="15" width="800" height="1" fill="#5a96d7" />
<rect x="121" y="0" width="1" height="16" fill="#5a96d7" />
<rect x="920" y="0" width="1" height="16" fill="#5a96d7" />
<rect x="283" y="7" width="478" height="1" fill="#00e8e8" />
<rect x="281" y="1" width="2" height="14" fill="#b8a878" />
<rect x="283" y="1" width="1" height="1" fill="#b8a878" />
<rect x="283" y="13" width="1" height="2" fill="#b8a878" />
<rect x="761" y="1" width="2" height="14" fill="#b8a878" />
<rect x="760" y="1" width="1" height="1" fill="#b8a878" />
<rect x="760" y="13" width="1" height="2" fill="#b8a878" />
</g>
<rect x="469" y="5" width="8" height="11" rx="2" fill="#ff9c00"/>
<path d="M470 6.5H476V8H474V15H472V8H470z" fill="#000"/>
<text x="0" y="0" font-size="21" fill="#f0f0ff" font-weight="bold" font-family='"Liberation Serif","DejaVu Serif",serif' transform="translate(-0.3,15) scale(0.885,1)" stroke="#f0f0ff" stroke-width="0.5">Tek</text>
<text x="-1.48" y="0" font-size="15.1" fill="#f4f4f4" font-family='"DejaVu Sans","Liberation Sans",sans-serif' letter-spacing="0.262"  stroke="#f4f4f4" stroke-width="0.5" transform="translate(36.25,13) scale(1.0477,1)">Run</text>
<text x="0.04" y="0" font-size="15.1" fill="#f4f4f4" font-family='"DejaVu Sans","Liberation Sans",sans-serif' letter-spacing="0.065"  stroke="#f4f4f4" stroke-width="0.5" transform="translate(926.95,13) scale(1.0171,1)">Trig?</text>
<path d="M0.75 76.25H13L19.5 83.5L13 90.75H0.75z" fill="#020602" stroke="#ffff00" stroke-width="1.5"/>
<text x="7" y="89" font-size="15" fill="#ffff00" text-anchor="middle" font-weight="bold" font-family='"Liberation Sans","DejaVu Sans",sans-serif' >1</text>
<path d="M3.4 87.3H6.3V89.3H3.4zM8.4 87.3H11.1V89.3H8.4z" fill="#020602"/>
<path d="M0.75 118.75H13L19.5 126.5L13 134.25H0.75z" fill="#020602" stroke="#ff30ff" stroke-width="1.5"/>
<text x="7" y="132" font-size="15" fill="#e020e0" text-anchor="middle" font-family='"Liberation Sans","DejaVu Sans",sans-serif' >3</text>
<path d="M0 229H13L20 237L13 245.5H0z" fill="#00e8e8"/>
<text x="7.5" y="243" font-size="15" fill="#000" text-anchor="middle" font-weight="bold" font-family='"Liberation Sans","DejaVu Sans",sans-serif' >2</text>
<rect x="708.5" y="40.5" width="301" height="59" rx="7" fill="#020602" stroke="#e8e8e8" stroke-width="1"/>
<rect x="727.5" y="44.5" width="14" height="14" fill="none" stroke="#00e8e8" shape-rendering="crispEdges"/>
<circle cx="734.5" cy="71.5" r="7" fill="none" stroke="#00e8e8" stroke-width="1.3"/>
<circle cx="755" cy="51.5" r="8.2" fill="#ff4500"/>
<text x="754.7" y="56.3" font-size="17.5" fill="#000" text-anchor="middle" font-family='"DejaVu Sans","Liberation Sans",sans-serif' stroke="#000" stroke-width="0.6">a</text>
<circle cx="755" cy="70.5" r="8.2" fill="#ff4500"/>
<text x="754.7" y="75.7" font-size="14.5" fill="#000" text-anchor="middle" font-family='"DejaVu Sans","Liberation Sans",sans-serif' stroke="#000" stroke-width="0.6">b</text>
<text x="-1.6" y="0" font-size="15.1" fill="#00e8e8" font-family='"DejaVu Sans","Liberation Sans",sans-serif' letter-spacing="0.168"  stroke="#00e8e8" stroke-width="0.4" transform="translate(784.2,57) scale(1.0402,1)">−6.710µs</text>
<text x="-1.6" y="0" font-size="15.1" fill="#00e8e8" font-family='"DejaVu Sans","Liberation Sans",sans-serif' letter-spacing="0.168"  stroke="#00e8e8" stroke-width="0.4" transform="translate(784.2,76) scale(1.0402,1)">−4.870µs</text>
<text x="0.04" y="0" font-size="15.1" fill="#00e8e8" font-family='"DejaVu Sans","Liberation Sans",sans-serif' letter-spacing="0.343"  stroke="#00e8e8" stroke-width="0.4" transform="translate(782.3,95) scale(1.0868,1)">∆1.840µs</text>
<text x="-1.6" y="0" font-size="15.1" fill="#00e8e8" font-family='"DejaVu Sans","Liberation Sans",sans-serif' letter-spacing="0.06"  stroke="#00e8e8" stroke-width="0.4" transform="translate(912.2,57) scale(1.0124,1)">−162.0mV</text>
<text x="-1.6" y="0" font-size="15.1" fill="#00e8e8" font-family='"DejaVu Sans","Liberation Sans",sans-serif' letter-spacing="0.06"  stroke="#00e8e8" stroke-width="0.4" transform="translate(912.2,76) scale(1.0124,1)">−528.0mV</text>
<text x="0.04" y="0" font-size="15.1" fill="#00e8e8" font-family='"DejaVu Sans","Liberation Sans",sans-serif' letter-spacing="0.248"  stroke="#00e8e8" stroke-width="0.4" transform="translate(910.3,95) scale(1.0547,1)">∆366.0mV</text>
<path d="M1010 57.5L1016 52V63z M1016 57H1021V58H1016z" fill="#ffff00"/>
<rect x="20.5" y="670.5" width="554" height="20" rx="7" fill="#020602" stroke="#e8e8e8" stroke-width="1"/>
<rect x="26" y="673" width="25" height="16" rx="8" fill="#ffff00"/>
<text x="38.5" y="686" font-size="15" fill="#000" text-anchor="middle" font-weight="bold" font-family='"Liberation Sans","DejaVu Sans",sans-serif' >1</text>
<path d="M34.9 684.3H37.8V686.3H34.9zM39.9 684.3H42.6V686.3H39.9z" fill="#ffff00"/>
<text x="-1.16" y="0" font-size="15.1" fill="#ffff00" font-family='"DejaVu Sans","Liberation Sans",sans-serif' letter-spacing="0.119"  transform="translate(68.5,686) scale(1.0301,1)">5.00 V</text>
<rect x="165" y="673" width="25" height="16" rx="8" fill="#00e8e8"/>
<text x="177.5" y="686" font-size="15" fill="#000" text-anchor="middle" font-weight="bold" font-family='"Liberation Sans","DejaVu Sans",sans-serif' >2</text>
<text x="-1.66" y="0" font-size="15.1" fill="#00e8e8" font-family='"DejaVu Sans","Liberation Sans",sans-serif' letter-spacing="0.013"  transform="translate(209.0,686) scale(1.0023,1)">100mV</text>
<rect x="304" y="673" width="25" height="16" rx="8" fill="#b400b4"/>
<text x="316.5" y="686" font-size="15" fill="#000" text-anchor="middle" font-family='"Liberation Sans","DejaVu Sans",sans-serif' >3</text>
<text x="-1.16" y="0" font-size="15.1" fill="#b400b4" font-family='"DejaVu Sans","Liberation Sans",sans-serif' letter-spacing="0.113"  transform="translate(346.6,686) scale(1.0286,1)">5.00 V</text>
<rect x="582.5" y="670.5" width="147" height="37" rx="7" fill="#020602" stroke="#e8e8e8" stroke-width="1"/>
<text x="-0.74" y="0" font-size="15.1" fill="#f4f4f4" font-family='"DejaVu Sans","Liberation Sans",sans-serif' letter-spacing="0.237"  stroke="#f4f4f4" stroke-width="0.3" transform="translate(588.25,686) scale(1.059,1)">4.00µs</text>
<rect x="587" y="691" width="11.5" height="13" rx="2" fill="#ff9c00"/>
<path d="M589 693H597V695H594V702.5H592V695H589z" fill="#000"/>
<path d="M599 697H606V698H599z M604 694.5L608 697.5L604 700.5z M610 693.5H621.5L615.75 700.5z" fill="#ff9c00"/>
<text x="-0.74" y="0" font-size="15.1" fill="#ff9c00" font-family='"DejaVu Sans","Liberation Sans",sans-serif' letter-spacing="0.191"  stroke="#ff9c00" stroke-width="0.3" transform="translate(622.05,703) scale(1.0477,1)">4.010000µs</text>
<rect x="737.5" y="670.5" width="106" height="37" rx="7" fill="#020602" stroke="#e8e8e8" stroke-width="1"/>
<text x="-1.11" y="0" font-size="15.1" fill="#f4f4f4" font-family='"DejaVu Sans","Liberation Sans",sans-serif' letter-spacing="0.144"  stroke="#f4f4f4" stroke-width="0.3" transform="translate(744.35,686) scale(1.0369,1)">2.50GS/s</text>
<text x="-1.66" y="0" font-size="15.1" fill="#f4f4f4" font-family='"DejaVu Sans","Liberation Sans",sans-serif' letter-spacing="0.21"  stroke="#f4f4f4" stroke-width="0.3" transform="translate(744.35,703) scale(1.06,1)">100k points</text>
<rect x="851.5" y="670.5" width="170" height="38" rx="7" fill="#020602" stroke="#e8e8e8" stroke-width="1"/>
<rect x="882" y="673" width="25" height="16" rx="8" fill="#ffff00"/>
<text x="894.5" y="686" font-size="15" fill="#000" text-anchor="middle" font-weight="bold" font-family='"Liberation Sans","DejaVu Sans",sans-serif' >1</text>
<path d="M890.9 684.3H893.8V686.3H890.9zM895.9 684.3H898.6V686.3H895.9z" fill="#ffff00"/>
<path d="M920.5 685.5H924.5L927.5 675.5H931.5" fill="none" stroke="#f4f4f4" stroke-width="1.9"/>
<text x="-1.11" y="0" font-size="15.1" fill="#f4f4f4" font-family='"DejaVu Sans","Liberation Sans",sans-serif' letter-spacing="0.09"  stroke="#f4f4f4" stroke-width="0.3" transform="translate(966.05,686) scale(1.0225,1)">2.00 V</text>
<rect x="909.5" y="729.5" width="112" height="36" rx="7" fill="#020602" stroke="#e8e8e8" stroke-width="1"/>
<text x="-1.66" y="0" font-size="15.1" fill="#f4f4f4" font-family='"DejaVu Sans","Liberation Sans",sans-serif' letter-spacing="0.167"  stroke="#f4f4f4" stroke-width="0.3" transform="translate(916.75,746) scale(1.0435,1)">17 Nov 2022</text>
<text x="-1.0" y="0" font-size="15.1" fill="#f4f4f4" font-family='"DejaVu Sans","Liberation Sans",sans-serif' letter-spacing="0.138"  stroke="#f4f4f4" stroke-width="0.3" transform="translate(916.15,762) scale(1.0356,1)">00:46:29</text>
<rect x="20" y="714" width="114" height="54" rx="4" fill="#6c6e6c"/>
<rect x="21.5" y="715.5" width="111" height="51" rx="2.5" fill="#555755"/>
<rect x="138" y="714" width="114" height="54" rx="4" fill="#6c6e6c"/>
<rect x="139.5" y="715.5" width="111" height="51" rx="2.5" fill="#555755"/>
<rect x="256" y="714" width="114" height="54" rx="4" fill="#6c6e6c"/>
<rect x="257.5" y="715.5" width="111" height="51" rx="2.5" fill="#555755"/>
<rect x="374" y="714" width="114" height="54" rx="4" fill="#6c6e6c"/>
<rect x="375.5" y="715.5" width="111" height="51" rx="2.5" fill="#555755"/>
<rect x="492" y="714" width="114" height="54" rx="4" fill="#6c6e6c"/>
<rect x="493.5" y="715.5" width="111" height="51" rx="2.5" fill="#555755"/>
<rect x="728" y="714" width="114" height="54" rx="4" fill="#6c6e6c"/>
<rect x="729.5" y="715.5" width="111" height="51" rx="2.5" fill="#555755"/>
<rect x="-8" y="714" width="25" height="55" rx="7" fill="#00e8e8"/>
<text x="8.5" y="748" font-size="14.5" fill="#000" text-anchor="middle" font-family='"DejaVu Sans","Liberation Sans",sans-serif' stroke="#000" stroke-width="0.4">2</text>
<text x="-0.85" y="0" font-size="15.1" fill="#f4f4f4" font-family='"DejaVu Sans","Liberation Sans",sans-serif' letter-spacing="0.293"  stroke="#f4f4f4" stroke-width="0.5" transform="translate(41.85,733) scale(1.0805,1)">Coupling</text>
<rect x="33.5" y="742.5" width="29" height="25" rx="3" fill="#1470ff" stroke="#a8c8ff" stroke-width="1"/>
<text x="-1.48" y="0" font-size="15.1" fill="#f4f4f4" font-family='"DejaVu Sans","Liberation Sans",sans-serif' letter-spacing="-0.036"  stroke="#f4f4f4" stroke-width="0.5" transform="translate(39.0,760) scale(0.9958,1)">DC</text>
<text x="-0.12" y="0" font-size="15.1" fill="#f4f4f4" font-family='"DejaVu Sans","Liberation Sans",sans-serif' letter-spacing="0.237"  stroke="#f4f4f4" stroke-width="0.5" transform="translate(95.25,760) scale(1.0286,1)">AC</text>
<text x="0.04" y="0" font-size="15.1" fill="#f4f4f4" font-family='"DejaVu Sans","Liberation Sans",sans-serif' letter-spacing="0.179"  stroke="#f4f4f4" stroke-width="0.5" transform="translate(146.55,733) scale(1.0487,1)">Termination</text>
<rect x="143.5" y="742.5" width="46" height="25" rx="3" fill="#1470ff" stroke="#a8c8ff" stroke-width="1"/>
<text x="-1.66" y="0" font-size="15.1" fill="#f4f4f4" font-family='"DejaVu Sans","Liberation Sans",sans-serif' letter-spacing="0.337"  stroke="#f4f4f4" stroke-width="0.5" transform="translate(150.05,760) scale(1.0517,1)">1MΩ</text>
<text x="-1.16" y="0" font-size="15.1" fill="#f4f4f4" font-family='"DejaVu Sans","Liberation Sans",sans-serif' letter-spacing="0.271"  stroke="#f4f4f4" stroke-width="0.5" transform="translate(207.95,760) scale(1.0455,1)">50Ω</text>
<text x="-1.48" y="0" font-size="15.1" fill="#f4f4f4" font-family='"DejaVu Sans","Liberation Sans",sans-serif' letter-spacing="0.265"  stroke="#f4f4f4" stroke-width="0.5" transform="translate(289.65,733) scale(1.0784,1)">Invert</text>
<text x="-0.85" y="0" font-size="15.1" fill="#f4f4f4" font-family='"DejaVu Sans","Liberation Sans",sans-serif' letter-spacing="0.732"  stroke="#f4f4f4" stroke-width="0.5" transform="translate(273.0,760) scale(1.0969,1)">On</text>
<rect x="325.5" y="742.5" width="32" height="25" rx="3" fill="#1470ff" stroke="#a8c8ff" stroke-width="1"/>
<text x="-0.85" y="0" font-size="15.1" fill="#f4f4f4" font-family='"DejaVu Sans","Liberation Sans",sans-serif' letter-spacing="0.248"  stroke="#f4f4f4" stroke-width="0.5" transform="translate(330.25,760) scale(1.0556,1)">Off</text>
<text x="-1.48" y="0" font-size="15.1" fill="#f4f4f4" font-family='"DejaVu Sans","Liberation Sans",sans-serif' letter-spacing="0.203"  stroke="#f4f4f4" stroke-width="0.5" transform="translate(389.85,738) scale(1.0512,1)">Bandwidth</text>
<rect x="414" y="742" width="34" height="16" fill="#1470ff" />
<text x="-1.48" y="0" font-size="15.1" fill="#f4f4f4" font-family='"DejaVu Sans","Liberation Sans",sans-serif' letter-spacing="0.346"  stroke="#f4f4f4" stroke-width="0.5" transform="translate(417.75,755) scale(1.1135,1)">Full</text>
<rect x="514" y="733" width="25" height="16" rx="8" fill="#00e8e8"/>
<text x="526.5" y="746.5" font-size="15" fill="#000" text-anchor="middle" font-weight="bold" font-family='"Liberation Sans","DejaVu Sans",sans-serif' >2</text>
<text x="-1.48" y="0" font-size="15.1" fill="#f4f4f4" font-family='"DejaVu Sans","Liberation Sans",sans-serif' letter-spacing="0.005"  stroke="#f4f4f4" stroke-width="0.5" transform="translate(547.05,746) scale(1.0011,1)">Label</text>
<defs><linearGradient id="tg" x1="0" y1="0" x2="0" y2="1"><stop offset="0" stop-color="#ffffff"/><stop offset="0.75" stop-color="#c4c4c4"/><stop offset="0.9" stop-color="#a8a8a8"/><stop offset="1" stop-color="#f0f0f0"/></linearGradient></defs>
<path d="M773.5 738L785 726.5L796.5 738z" fill="url(#tg)"/>
<text x="-1.48" y="0" font-size="15.1" fill="#f4f4f4" font-family='"DejaVu Sans","Liberation Sans",sans-serif' letter-spacing="0.294"  stroke="#f4f4f4" stroke-width="0.5" transform="translate(766.65,753) scale(1.0616,1)">More</text>
</svg>
</body></html>
